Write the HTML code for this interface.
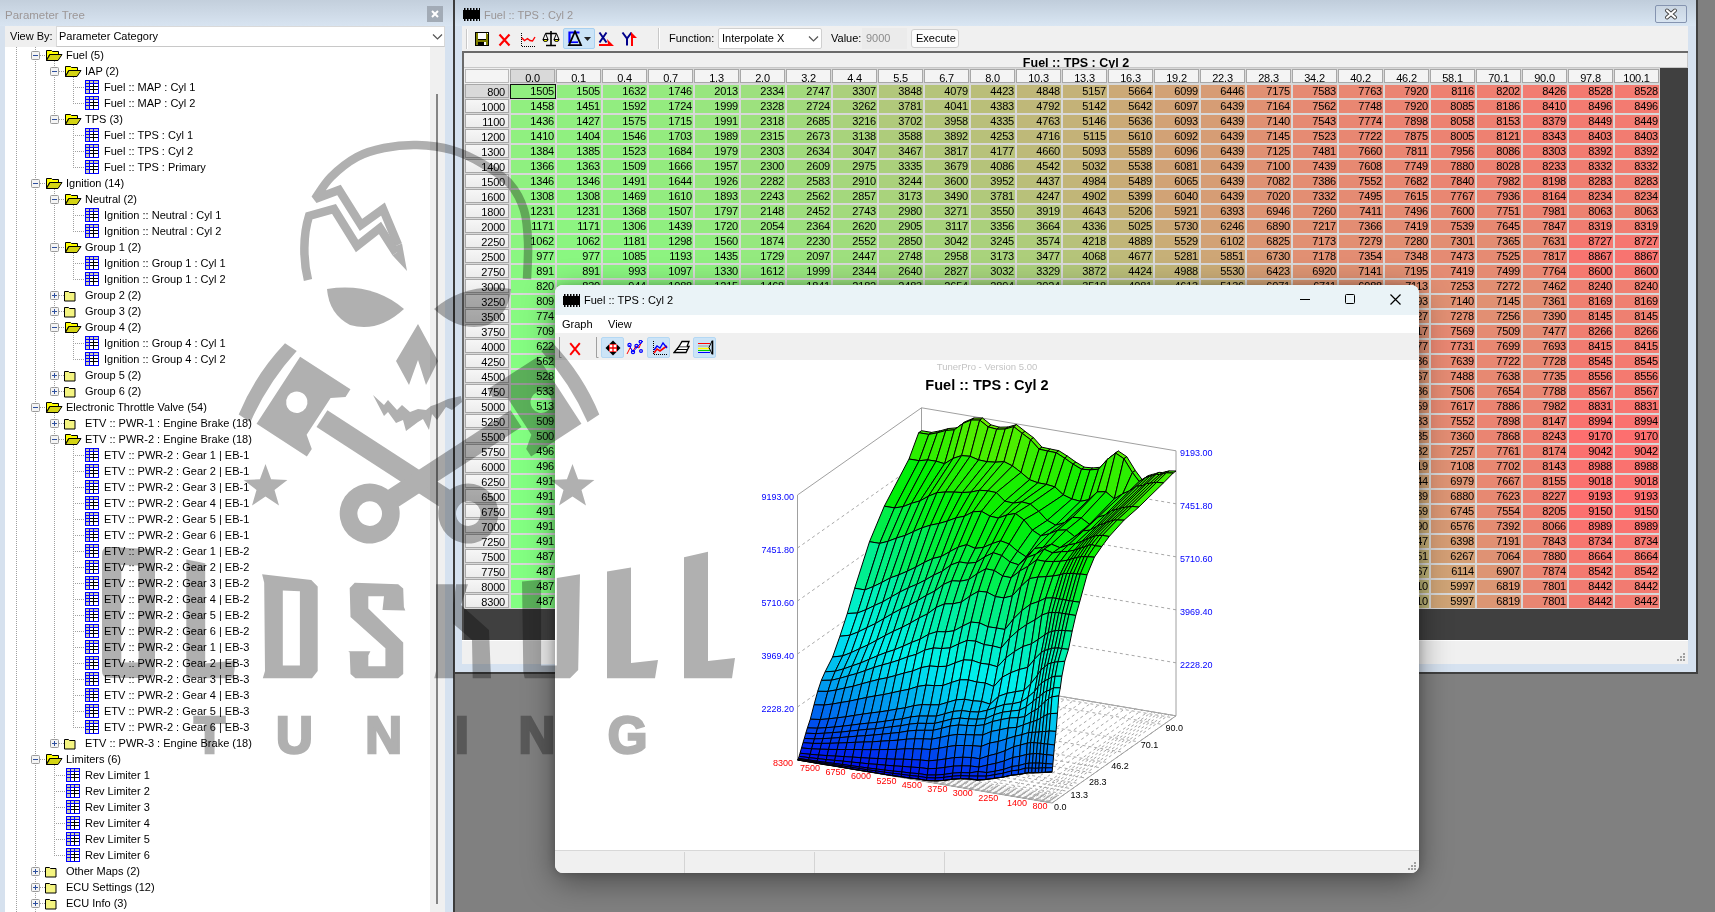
<!DOCTYPE html><html><head><meta charset="utf-8"><style>*{margin:0;padding:0;box-sizing:border-box}
html,body{width:1715px;height:912px;overflow:hidden;background:#808080;font-family:"Liberation Sans",sans-serif;font-size:11px;color:#000}
.a{position:absolute}
.t{position:absolute;white-space:pre}
.cell{position:absolute;height:13px;line-height:13px;text-align:right;padding-right:1px;letter-spacing:-0.2px}
.hd{position:absolute;height:14px;border:1px solid #a8a8a8;background:#f4f4f4;text-align:center;line-height:17px;letter-spacing:-0.2px}
.rh{position:absolute;height:14px;border:1px solid #a8a8a8;background:linear-gradient(#f6f6f6,#ececec);text-align:right;padding-right:3px;line-height:15px;letter-spacing:-0.2px}
</style></head><body><div class="a" style="left:0;top:0;width:453px;height:912px;background:#d6e1ee"></div><div class="a" style="left:0;top:0;width:453px;height:26px;background:linear-gradient(#c3cfdc,#d8e4f1)"></div><div class="t" style="left:5px;top:8.5px;font-size:11.5px;color:#9d9797">Parameter Tree</div><div class="a" style="left:427px;top:6px;width:16px;height:16px;background:#a2abb6"></div><svg class="a" style="left:427px;top:6px" width="16" height="16"><path d="M5 5L11 11M11 5L5 11" stroke="#fff" stroke-width="2"/></svg><div class="a" style="left:5px;top:26px;width:440px;height:886px;background:#fff"></div><div class="a" style="left:5px;top:26px;width:52px;height:21px;background:#efefef"></div><div class="t" style="left:10px;top:30px;font-size:11px">View By:</div><div class="a" style="left:56px;top:26px;width:389px;height:21px;background:#fff;border:1px solid #d9d9d9;border-bottom-color:#c8c8c8"></div><div class="t" style="left:59px;top:30px;font-size:11px">Parameter Category</div><svg class="a" style="left:432px;top:33px" width="12" height="8"><path d="M1 1.5L5.5 6L10 1.5" stroke="#555" fill="none" stroke-width="1.2"/></svg><div class="a" style="left:430px;top:47px;width:15px;height:865px;background:#f0f0f0"></div><div class="a" style="left:436px;top:94px;width:2px;height:810px;background:#858585"></div><div class="a" style="left:445px;top:26px;width:8px;height:886px;background:#d6e2f0"></div><div class="a" style="left:453px;top:0px;width:2px;height:912px;background:#3c3c3c"></div><div class="a" style="left:16px;top:47px;width:1px;height:865px;background:repeating-linear-gradient(#a0a0a0 0 1px,transparent 1px 2px)"></div><div class="a" style="left:35px;top:47px;width:1px;height:865px;background:repeating-linear-gradient(#a0a0a0 0 1px,transparent 1px 2px)"></div><div class="a" style="left:54px;top:61px;width:1px;height:59px;background:repeating-linear-gradient(#a0a0a0 0 1px,transparent 1px 2px)"></div><div class="a" style="left:73px;top:77px;width:1px;height:27px;background:repeating-linear-gradient(#a0a0a0 0 1px,transparent 1px 2px)"></div><div class="a" style="left:73px;top:125px;width:1px;height:43px;background:repeating-linear-gradient(#a0a0a0 0 1px,transparent 1px 2px)"></div><div class="a" style="left:54px;top:189px;width:1px;height:203px;background:repeating-linear-gradient(#a0a0a0 0 1px,transparent 1px 2px)"></div><div class="a" style="left:73px;top:205px;width:1px;height:27px;background:repeating-linear-gradient(#a0a0a0 0 1px,transparent 1px 2px)"></div><div class="a" style="left:73px;top:253px;width:1px;height:27px;background:repeating-linear-gradient(#a0a0a0 0 1px,transparent 1px 2px)"></div><div class="a" style="left:73px;top:333px;width:1px;height:27px;background:repeating-linear-gradient(#a0a0a0 0 1px,transparent 1px 2px)"></div><div class="a" style="left:54px;top:413px;width:1px;height:331px;background:repeating-linear-gradient(#a0a0a0 0 1px,transparent 1px 2px)"></div><div class="a" style="left:73px;top:445px;width:1px;height:283px;background:repeating-linear-gradient(#a0a0a0 0 1px,transparent 1px 2px)"></div><div class="a" style="left:54px;top:765px;width:1px;height:91px;background:repeating-linear-gradient(#a0a0a0 0 1px,transparent 1px 2px)"></div><div class="a" style="left:40px;top:55px;width:6px;height:1px;background:repeating-linear-gradient(90deg,#a0a0a0 0 1px,transparent 1px 2px)"></div><svg class="a" style="left:31px;top:51px" width="9" height="9"><defs></defs><rect x="0.5" y="0.5" width="8" height="8" rx="1" fill="#f4f4f4" stroke="#9a9a9a"/><path d="M2 4.5h5" stroke="#2d4f9e"/></svg><svg class="a" style="left:46px;top:49px" width="17" height="12"><path d="M0.5 1.5h5l1 1h6v3h-9l-3 6z" fill="#ffff00" stroke="#000"/><path d="M0.5 11.5l3.5-6h12l-4 6z" fill="#d4d414" stroke="#000"/></svg><div class="t" style="left:66px;top:49px">Fuel (5)</div><div class="a" style="left:59px;top:71px;width:6px;height:1px;background:repeating-linear-gradient(90deg,#a0a0a0 0 1px,transparent 1px 2px)"></div><svg class="a" style="left:50px;top:67px" width="9" height="9"><defs></defs><rect x="0.5" y="0.5" width="8" height="8" rx="1" fill="#f4f4f4" stroke="#9a9a9a"/><path d="M2 4.5h5" stroke="#2d4f9e"/></svg><svg class="a" style="left:65px;top:65px" width="17" height="12"><path d="M0.5 1.5h5l1 1h6v3h-9l-3 6z" fill="#ffff00" stroke="#000"/><path d="M0.5 11.5l3.5-6h12l-4 6z" fill="#d4d414" stroke="#000"/></svg><div class="t" style="left:85px;top:65px">IAP (2)</div><div class="a" style="left:73px;top:87px;width:12px;height:1px;background:repeating-linear-gradient(90deg,#a0a0a0 0 1px,transparent 1px 2px)"></div><svg class="a" style="left:85px;top:80px" width="14" height="14" shape-rendering="crispEdges"><rect width="14" height="14" fill="#0000ff"/><g fill="#cdcdb4"><rect x="1" y="1" width="3" height="2"/><rect x="5" y="1" width="3" height="2"/><rect x="9" y="1" width="4" height="2"/><rect x="1" y="4" width="3" height="2"/><rect x="1" y="7" width="3" height="2"/><rect x="1" y="10" width="3" height="3"/></g><rect x="5" y="4" width="8" height="9" fill="#fff"/><g fill="#000"><rect x="8" y="4" width="1" height="9"/><rect x="5" y="6" width="8" height="1"/><rect x="5" y="9" width="8" height="1"/></g></svg><div class="t" style="left:104px;top:81px">Fuel :: MAP : Cyl 1</div><div class="a" style="left:73px;top:103px;width:12px;height:1px;background:repeating-linear-gradient(90deg,#a0a0a0 0 1px,transparent 1px 2px)"></div><svg class="a" style="left:85px;top:96px" width="14" height="14" shape-rendering="crispEdges"><rect width="14" height="14" fill="#0000ff"/><g fill="#cdcdb4"><rect x="1" y="1" width="3" height="2"/><rect x="5" y="1" width="3" height="2"/><rect x="9" y="1" width="4" height="2"/><rect x="1" y="4" width="3" height="2"/><rect x="1" y="7" width="3" height="2"/><rect x="1" y="10" width="3" height="3"/></g><rect x="5" y="4" width="8" height="9" fill="#fff"/><g fill="#000"><rect x="8" y="4" width="1" height="9"/><rect x="5" y="6" width="8" height="1"/><rect x="5" y="9" width="8" height="1"/></g></svg><div class="t" style="left:104px;top:97px">Fuel :: MAP : Cyl 2</div><div class="a" style="left:59px;top:119px;width:6px;height:1px;background:repeating-linear-gradient(90deg,#a0a0a0 0 1px,transparent 1px 2px)"></div><svg class="a" style="left:50px;top:115px" width="9" height="9"><defs></defs><rect x="0.5" y="0.5" width="8" height="8" rx="1" fill="#f4f4f4" stroke="#9a9a9a"/><path d="M2 4.5h5" stroke="#2d4f9e"/></svg><svg class="a" style="left:65px;top:113px" width="17" height="12"><path d="M0.5 1.5h5l1 1h6v3h-9l-3 6z" fill="#ffff00" stroke="#000"/><path d="M0.5 11.5l3.5-6h12l-4 6z" fill="#d4d414" stroke="#000"/></svg><div class="t" style="left:85px;top:113px">TPS (3)</div><div class="a" style="left:73px;top:135px;width:12px;height:1px;background:repeating-linear-gradient(90deg,#a0a0a0 0 1px,transparent 1px 2px)"></div><svg class="a" style="left:85px;top:128px" width="14" height="14" shape-rendering="crispEdges"><rect width="14" height="14" fill="#0000ff"/><g fill="#cdcdb4"><rect x="1" y="1" width="3" height="2"/><rect x="5" y="1" width="3" height="2"/><rect x="9" y="1" width="4" height="2"/><rect x="1" y="4" width="3" height="2"/><rect x="1" y="7" width="3" height="2"/><rect x="1" y="10" width="3" height="3"/></g><rect x="5" y="4" width="8" height="9" fill="#fff"/><g fill="#000"><rect x="8" y="4" width="1" height="9"/><rect x="5" y="6" width="8" height="1"/><rect x="5" y="9" width="8" height="1"/></g></svg><div class="t" style="left:104px;top:129px">Fuel :: TPS : Cyl 1</div><div class="a" style="left:73px;top:151px;width:12px;height:1px;background:repeating-linear-gradient(90deg,#a0a0a0 0 1px,transparent 1px 2px)"></div><svg class="a" style="left:85px;top:144px" width="14" height="14" shape-rendering="crispEdges"><rect width="14" height="14" fill="#0000ff"/><g fill="#cdcdb4"><rect x="1" y="1" width="3" height="2"/><rect x="5" y="1" width="3" height="2"/><rect x="9" y="1" width="4" height="2"/><rect x="1" y="4" width="3" height="2"/><rect x="1" y="7" width="3" height="2"/><rect x="1" y="10" width="3" height="3"/></g><rect x="5" y="4" width="8" height="9" fill="#fff"/><g fill="#000"><rect x="8" y="4" width="1" height="9"/><rect x="5" y="6" width="8" height="1"/><rect x="5" y="9" width="8" height="1"/></g></svg><div class="t" style="left:104px;top:145px">Fuel :: TPS : Cyl 2</div><div class="a" style="left:73px;top:167px;width:12px;height:1px;background:repeating-linear-gradient(90deg,#a0a0a0 0 1px,transparent 1px 2px)"></div><svg class="a" style="left:85px;top:160px" width="14" height="14" shape-rendering="crispEdges"><rect width="14" height="14" fill="#0000ff"/><g fill="#cdcdb4"><rect x="1" y="1" width="3" height="2"/><rect x="5" y="1" width="3" height="2"/><rect x="9" y="1" width="4" height="2"/><rect x="1" y="4" width="3" height="2"/><rect x="1" y="7" width="3" height="2"/><rect x="1" y="10" width="3" height="3"/></g><rect x="5" y="4" width="8" height="9" fill="#fff"/><g fill="#000"><rect x="8" y="4" width="1" height="9"/><rect x="5" y="6" width="8" height="1"/><rect x="5" y="9" width="8" height="1"/></g></svg><div class="t" style="left:104px;top:161px">Fuel :: TPS : Primary</div><div class="a" style="left:40px;top:183px;width:6px;height:1px;background:repeating-linear-gradient(90deg,#a0a0a0 0 1px,transparent 1px 2px)"></div><svg class="a" style="left:31px;top:179px" width="9" height="9"><defs></defs><rect x="0.5" y="0.5" width="8" height="8" rx="1" fill="#f4f4f4" stroke="#9a9a9a"/><path d="M2 4.5h5" stroke="#2d4f9e"/></svg><svg class="a" style="left:46px;top:177px" width="17" height="12"><path d="M0.5 1.5h5l1 1h6v3h-9l-3 6z" fill="#ffff00" stroke="#000"/><path d="M0.5 11.5l3.5-6h12l-4 6z" fill="#d4d414" stroke="#000"/></svg><div class="t" style="left:66px;top:177px">Ignition (14)</div><div class="a" style="left:59px;top:199px;width:6px;height:1px;background:repeating-linear-gradient(90deg,#a0a0a0 0 1px,transparent 1px 2px)"></div><svg class="a" style="left:50px;top:195px" width="9" height="9"><defs></defs><rect x="0.5" y="0.5" width="8" height="8" rx="1" fill="#f4f4f4" stroke="#9a9a9a"/><path d="M2 4.5h5" stroke="#2d4f9e"/></svg><svg class="a" style="left:65px;top:193px" width="17" height="12"><path d="M0.5 1.5h5l1 1h6v3h-9l-3 6z" fill="#ffff00" stroke="#000"/><path d="M0.5 11.5l3.5-6h12l-4 6z" fill="#d4d414" stroke="#000"/></svg><div class="t" style="left:85px;top:193px">Neutral (2)</div><div class="a" style="left:73px;top:215px;width:12px;height:1px;background:repeating-linear-gradient(90deg,#a0a0a0 0 1px,transparent 1px 2px)"></div><svg class="a" style="left:85px;top:208px" width="14" height="14" shape-rendering="crispEdges"><rect width="14" height="14" fill="#0000ff"/><g fill="#cdcdb4"><rect x="1" y="1" width="3" height="2"/><rect x="5" y="1" width="3" height="2"/><rect x="9" y="1" width="4" height="2"/><rect x="1" y="4" width="3" height="2"/><rect x="1" y="7" width="3" height="2"/><rect x="1" y="10" width="3" height="3"/></g><rect x="5" y="4" width="8" height="9" fill="#fff"/><g fill="#000"><rect x="8" y="4" width="1" height="9"/><rect x="5" y="6" width="8" height="1"/><rect x="5" y="9" width="8" height="1"/></g></svg><div class="t" style="left:104px;top:209px">Ignition :: Neutral : Cyl 1</div><div class="a" style="left:73px;top:231px;width:12px;height:1px;background:repeating-linear-gradient(90deg,#a0a0a0 0 1px,transparent 1px 2px)"></div><svg class="a" style="left:85px;top:224px" width="14" height="14" shape-rendering="crispEdges"><rect width="14" height="14" fill="#0000ff"/><g fill="#cdcdb4"><rect x="1" y="1" width="3" height="2"/><rect x="5" y="1" width="3" height="2"/><rect x="9" y="1" width="4" height="2"/><rect x="1" y="4" width="3" height="2"/><rect x="1" y="7" width="3" height="2"/><rect x="1" y="10" width="3" height="3"/></g><rect x="5" y="4" width="8" height="9" fill="#fff"/><g fill="#000"><rect x="8" y="4" width="1" height="9"/><rect x="5" y="6" width="8" height="1"/><rect x="5" y="9" width="8" height="1"/></g></svg><div class="t" style="left:104px;top:225px">Ignition :: Neutral : Cyl 2</div><div class="a" style="left:59px;top:247px;width:6px;height:1px;background:repeating-linear-gradient(90deg,#a0a0a0 0 1px,transparent 1px 2px)"></div><svg class="a" style="left:50px;top:243px" width="9" height="9"><defs></defs><rect x="0.5" y="0.5" width="8" height="8" rx="1" fill="#f4f4f4" stroke="#9a9a9a"/><path d="M2 4.5h5" stroke="#2d4f9e"/></svg><svg class="a" style="left:65px;top:241px" width="17" height="12"><path d="M0.5 1.5h5l1 1h6v3h-9l-3 6z" fill="#ffff00" stroke="#000"/><path d="M0.5 11.5l3.5-6h12l-4 6z" fill="#d4d414" stroke="#000"/></svg><div class="t" style="left:85px;top:241px">Group 1 (2)</div><div class="a" style="left:73px;top:263px;width:12px;height:1px;background:repeating-linear-gradient(90deg,#a0a0a0 0 1px,transparent 1px 2px)"></div><svg class="a" style="left:85px;top:256px" width="14" height="14" shape-rendering="crispEdges"><rect width="14" height="14" fill="#0000ff"/><g fill="#cdcdb4"><rect x="1" y="1" width="3" height="2"/><rect x="5" y="1" width="3" height="2"/><rect x="9" y="1" width="4" height="2"/><rect x="1" y="4" width="3" height="2"/><rect x="1" y="7" width="3" height="2"/><rect x="1" y="10" width="3" height="3"/></g><rect x="5" y="4" width="8" height="9" fill="#fff"/><g fill="#000"><rect x="8" y="4" width="1" height="9"/><rect x="5" y="6" width="8" height="1"/><rect x="5" y="9" width="8" height="1"/></g></svg><div class="t" style="left:104px;top:257px">Ignition :: Group 1 : Cyl 1</div><div class="a" style="left:73px;top:279px;width:12px;height:1px;background:repeating-linear-gradient(90deg,#a0a0a0 0 1px,transparent 1px 2px)"></div><svg class="a" style="left:85px;top:272px" width="14" height="14" shape-rendering="crispEdges"><rect width="14" height="14" fill="#0000ff"/><g fill="#cdcdb4"><rect x="1" y="1" width="3" height="2"/><rect x="5" y="1" width="3" height="2"/><rect x="9" y="1" width="4" height="2"/><rect x="1" y="4" width="3" height="2"/><rect x="1" y="7" width="3" height="2"/><rect x="1" y="10" width="3" height="3"/></g><rect x="5" y="4" width="8" height="9" fill="#fff"/><g fill="#000"><rect x="8" y="4" width="1" height="9"/><rect x="5" y="6" width="8" height="1"/><rect x="5" y="9" width="8" height="1"/></g></svg><div class="t" style="left:104px;top:273px">Ignition :: Group 1 : Cyl 2</div><div class="a" style="left:59px;top:295px;width:6px;height:1px;background:repeating-linear-gradient(90deg,#a0a0a0 0 1px,transparent 1px 2px)"></div><svg class="a" style="left:50px;top:291px" width="9" height="9"><defs></defs><rect x="0.5" y="0.5" width="8" height="8" rx="1" fill="#f4f4f4" stroke="#9a9a9a"/><path d="M2 4.5h5M4.5 2v5" stroke="#2d4f9e"/></svg><svg class="a" style="left:64px;top:290px" width="12" height="12"><path d="M0.5 1.5h4l1 1h5.5v8.5h-10.5z" fill="#f4f480" stroke="#000"/></svg><div class="t" style="left:85px;top:289px">Group 2 (2)</div><div class="a" style="left:59px;top:311px;width:6px;height:1px;background:repeating-linear-gradient(90deg,#a0a0a0 0 1px,transparent 1px 2px)"></div><svg class="a" style="left:50px;top:307px" width="9" height="9"><defs></defs><rect x="0.5" y="0.5" width="8" height="8" rx="1" fill="#f4f4f4" stroke="#9a9a9a"/><path d="M2 4.5h5M4.5 2v5" stroke="#2d4f9e"/></svg><svg class="a" style="left:64px;top:306px" width="12" height="12"><path d="M0.5 1.5h4l1 1h5.5v8.5h-10.5z" fill="#f4f480" stroke="#000"/></svg><div class="t" style="left:85px;top:305px">Group 3 (2)</div><div class="a" style="left:59px;top:327px;width:6px;height:1px;background:repeating-linear-gradient(90deg,#a0a0a0 0 1px,transparent 1px 2px)"></div><svg class="a" style="left:50px;top:323px" width="9" height="9"><defs></defs><rect x="0.5" y="0.5" width="8" height="8" rx="1" fill="#f4f4f4" stroke="#9a9a9a"/><path d="M2 4.5h5" stroke="#2d4f9e"/></svg><svg class="a" style="left:65px;top:321px" width="17" height="12"><path d="M0.5 1.5h5l1 1h6v3h-9l-3 6z" fill="#ffff00" stroke="#000"/><path d="M0.5 11.5l3.5-6h12l-4 6z" fill="#d4d414" stroke="#000"/></svg><div class="t" style="left:85px;top:321px">Group 4 (2)</div><div class="a" style="left:73px;top:343px;width:12px;height:1px;background:repeating-linear-gradient(90deg,#a0a0a0 0 1px,transparent 1px 2px)"></div><svg class="a" style="left:85px;top:336px" width="14" height="14" shape-rendering="crispEdges"><rect width="14" height="14" fill="#0000ff"/><g fill="#cdcdb4"><rect x="1" y="1" width="3" height="2"/><rect x="5" y="1" width="3" height="2"/><rect x="9" y="1" width="4" height="2"/><rect x="1" y="4" width="3" height="2"/><rect x="1" y="7" width="3" height="2"/><rect x="1" y="10" width="3" height="3"/></g><rect x="5" y="4" width="8" height="9" fill="#fff"/><g fill="#000"><rect x="8" y="4" width="1" height="9"/><rect x="5" y="6" width="8" height="1"/><rect x="5" y="9" width="8" height="1"/></g></svg><div class="t" style="left:104px;top:337px">Ignition :: Group 4 : Cyl 1</div><div class="a" style="left:73px;top:359px;width:12px;height:1px;background:repeating-linear-gradient(90deg,#a0a0a0 0 1px,transparent 1px 2px)"></div><svg class="a" style="left:85px;top:352px" width="14" height="14" shape-rendering="crispEdges"><rect width="14" height="14" fill="#0000ff"/><g fill="#cdcdb4"><rect x="1" y="1" width="3" height="2"/><rect x="5" y="1" width="3" height="2"/><rect x="9" y="1" width="4" height="2"/><rect x="1" y="4" width="3" height="2"/><rect x="1" y="7" width="3" height="2"/><rect x="1" y="10" width="3" height="3"/></g><rect x="5" y="4" width="8" height="9" fill="#fff"/><g fill="#000"><rect x="8" y="4" width="1" height="9"/><rect x="5" y="6" width="8" height="1"/><rect x="5" y="9" width="8" height="1"/></g></svg><div class="t" style="left:104px;top:353px">Ignition :: Group 4 : Cyl 2</div><div class="a" style="left:59px;top:375px;width:6px;height:1px;background:repeating-linear-gradient(90deg,#a0a0a0 0 1px,transparent 1px 2px)"></div><svg class="a" style="left:50px;top:371px" width="9" height="9"><defs></defs><rect x="0.5" y="0.5" width="8" height="8" rx="1" fill="#f4f4f4" stroke="#9a9a9a"/><path d="M2 4.5h5M4.5 2v5" stroke="#2d4f9e"/></svg><svg class="a" style="left:64px;top:370px" width="12" height="12"><path d="M0.5 1.5h4l1 1h5.5v8.5h-10.5z" fill="#f4f480" stroke="#000"/></svg><div class="t" style="left:85px;top:369px">Group 5 (2)</div><div class="a" style="left:59px;top:391px;width:6px;height:1px;background:repeating-linear-gradient(90deg,#a0a0a0 0 1px,transparent 1px 2px)"></div><svg class="a" style="left:50px;top:387px" width="9" height="9"><defs></defs><rect x="0.5" y="0.5" width="8" height="8" rx="1" fill="#f4f4f4" stroke="#9a9a9a"/><path d="M2 4.5h5M4.5 2v5" stroke="#2d4f9e"/></svg><svg class="a" style="left:64px;top:386px" width="12" height="12"><path d="M0.5 1.5h4l1 1h5.5v8.5h-10.5z" fill="#f4f480" stroke="#000"/></svg><div class="t" style="left:85px;top:385px">Group 6 (2)</div><div class="a" style="left:40px;top:407px;width:6px;height:1px;background:repeating-linear-gradient(90deg,#a0a0a0 0 1px,transparent 1px 2px)"></div><svg class="a" style="left:31px;top:403px" width="9" height="9"><defs></defs><rect x="0.5" y="0.5" width="8" height="8" rx="1" fill="#f4f4f4" stroke="#9a9a9a"/><path d="M2 4.5h5" stroke="#2d4f9e"/></svg><svg class="a" style="left:46px;top:401px" width="17" height="12"><path d="M0.5 1.5h5l1 1h6v3h-9l-3 6z" fill="#ffff00" stroke="#000"/><path d="M0.5 11.5l3.5-6h12l-4 6z" fill="#d4d414" stroke="#000"/></svg><div class="t" style="left:66px;top:401px">Electronic Throttle Valve (54)</div><div class="a" style="left:59px;top:423px;width:6px;height:1px;background:repeating-linear-gradient(90deg,#a0a0a0 0 1px,transparent 1px 2px)"></div><svg class="a" style="left:50px;top:419px" width="9" height="9"><defs></defs><rect x="0.5" y="0.5" width="8" height="8" rx="1" fill="#f4f4f4" stroke="#9a9a9a"/><path d="M2 4.5h5M4.5 2v5" stroke="#2d4f9e"/></svg><svg class="a" style="left:64px;top:418px" width="12" height="12"><path d="M0.5 1.5h4l1 1h5.5v8.5h-10.5z" fill="#f4f480" stroke="#000"/></svg><div class="t" style="left:85px;top:417px">ETV :: PWR-1 : Engine Brake (18)</div><div class="a" style="left:59px;top:439px;width:6px;height:1px;background:repeating-linear-gradient(90deg,#a0a0a0 0 1px,transparent 1px 2px)"></div><svg class="a" style="left:50px;top:435px" width="9" height="9"><defs></defs><rect x="0.5" y="0.5" width="8" height="8" rx="1" fill="#f4f4f4" stroke="#9a9a9a"/><path d="M2 4.5h5" stroke="#2d4f9e"/></svg><svg class="a" style="left:65px;top:433px" width="17" height="12"><path d="M0.5 1.5h5l1 1h6v3h-9l-3 6z" fill="#ffff00" stroke="#000"/><path d="M0.5 11.5l3.5-6h12l-4 6z" fill="#d4d414" stroke="#000"/></svg><div class="t" style="left:85px;top:433px">ETV :: PWR-2 : Engine Brake (18)</div><div class="a" style="left:73px;top:455px;width:12px;height:1px;background:repeating-linear-gradient(90deg,#a0a0a0 0 1px,transparent 1px 2px)"></div><svg class="a" style="left:85px;top:448px" width="14" height="14" shape-rendering="crispEdges"><rect width="14" height="14" fill="#0000ff"/><g fill="#cdcdb4"><rect x="1" y="1" width="3" height="2"/><rect x="5" y="1" width="3" height="2"/><rect x="9" y="1" width="4" height="2"/><rect x="1" y="4" width="3" height="2"/><rect x="1" y="7" width="3" height="2"/><rect x="1" y="10" width="3" height="3"/></g><rect x="5" y="4" width="8" height="9" fill="#fff"/><g fill="#000"><rect x="8" y="4" width="1" height="9"/><rect x="5" y="6" width="8" height="1"/><rect x="5" y="9" width="8" height="1"/></g></svg><div class="t" style="left:104px;top:449px">ETV :: PWR-2 : Gear 1 | EB-1</div><div class="a" style="left:73px;top:471px;width:12px;height:1px;background:repeating-linear-gradient(90deg,#a0a0a0 0 1px,transparent 1px 2px)"></div><svg class="a" style="left:85px;top:464px" width="14" height="14" shape-rendering="crispEdges"><rect width="14" height="14" fill="#0000ff"/><g fill="#cdcdb4"><rect x="1" y="1" width="3" height="2"/><rect x="5" y="1" width="3" height="2"/><rect x="9" y="1" width="4" height="2"/><rect x="1" y="4" width="3" height="2"/><rect x="1" y="7" width="3" height="2"/><rect x="1" y="10" width="3" height="3"/></g><rect x="5" y="4" width="8" height="9" fill="#fff"/><g fill="#000"><rect x="8" y="4" width="1" height="9"/><rect x="5" y="6" width="8" height="1"/><rect x="5" y="9" width="8" height="1"/></g></svg><div class="t" style="left:104px;top:465px">ETV :: PWR-2 : Gear 2 | EB-1</div><div class="a" style="left:73px;top:487px;width:12px;height:1px;background:repeating-linear-gradient(90deg,#a0a0a0 0 1px,transparent 1px 2px)"></div><svg class="a" style="left:85px;top:480px" width="14" height="14" shape-rendering="crispEdges"><rect width="14" height="14" fill="#0000ff"/><g fill="#cdcdb4"><rect x="1" y="1" width="3" height="2"/><rect x="5" y="1" width="3" height="2"/><rect x="9" y="1" width="4" height="2"/><rect x="1" y="4" width="3" height="2"/><rect x="1" y="7" width="3" height="2"/><rect x="1" y="10" width="3" height="3"/></g><rect x="5" y="4" width="8" height="9" fill="#fff"/><g fill="#000"><rect x="8" y="4" width="1" height="9"/><rect x="5" y="6" width="8" height="1"/><rect x="5" y="9" width="8" height="1"/></g></svg><div class="t" style="left:104px;top:481px">ETV :: PWR-2 : Gear 3 | EB-1</div><div class="a" style="left:73px;top:503px;width:12px;height:1px;background:repeating-linear-gradient(90deg,#a0a0a0 0 1px,transparent 1px 2px)"></div><svg class="a" style="left:85px;top:496px" width="14" height="14" shape-rendering="crispEdges"><rect width="14" height="14" fill="#0000ff"/><g fill="#cdcdb4"><rect x="1" y="1" width="3" height="2"/><rect x="5" y="1" width="3" height="2"/><rect x="9" y="1" width="4" height="2"/><rect x="1" y="4" width="3" height="2"/><rect x="1" y="7" width="3" height="2"/><rect x="1" y="10" width="3" height="3"/></g><rect x="5" y="4" width="8" height="9" fill="#fff"/><g fill="#000"><rect x="8" y="4" width="1" height="9"/><rect x="5" y="6" width="8" height="1"/><rect x="5" y="9" width="8" height="1"/></g></svg><div class="t" style="left:104px;top:497px">ETV :: PWR-2 : Gear 4 | EB-1</div><div class="a" style="left:73px;top:519px;width:12px;height:1px;background:repeating-linear-gradient(90deg,#a0a0a0 0 1px,transparent 1px 2px)"></div><svg class="a" style="left:85px;top:512px" width="14" height="14" shape-rendering="crispEdges"><rect width="14" height="14" fill="#0000ff"/><g fill="#cdcdb4"><rect x="1" y="1" width="3" height="2"/><rect x="5" y="1" width="3" height="2"/><rect x="9" y="1" width="4" height="2"/><rect x="1" y="4" width="3" height="2"/><rect x="1" y="7" width="3" height="2"/><rect x="1" y="10" width="3" height="3"/></g><rect x="5" y="4" width="8" height="9" fill="#fff"/><g fill="#000"><rect x="8" y="4" width="1" height="9"/><rect x="5" y="6" width="8" height="1"/><rect x="5" y="9" width="8" height="1"/></g></svg><div class="t" style="left:104px;top:513px">ETV :: PWR-2 : Gear 5 | EB-1</div><div class="a" style="left:73px;top:535px;width:12px;height:1px;background:repeating-linear-gradient(90deg,#a0a0a0 0 1px,transparent 1px 2px)"></div><svg class="a" style="left:85px;top:528px" width="14" height="14" shape-rendering="crispEdges"><rect width="14" height="14" fill="#0000ff"/><g fill="#cdcdb4"><rect x="1" y="1" width="3" height="2"/><rect x="5" y="1" width="3" height="2"/><rect x="9" y="1" width="4" height="2"/><rect x="1" y="4" width="3" height="2"/><rect x="1" y="7" width="3" height="2"/><rect x="1" y="10" width="3" height="3"/></g><rect x="5" y="4" width="8" height="9" fill="#fff"/><g fill="#000"><rect x="8" y="4" width="1" height="9"/><rect x="5" y="6" width="8" height="1"/><rect x="5" y="9" width="8" height="1"/></g></svg><div class="t" style="left:104px;top:529px">ETV :: PWR-2 : Gear 6 | EB-1</div><div class="a" style="left:73px;top:551px;width:12px;height:1px;background:repeating-linear-gradient(90deg,#a0a0a0 0 1px,transparent 1px 2px)"></div><svg class="a" style="left:85px;top:544px" width="14" height="14" shape-rendering="crispEdges"><rect width="14" height="14" fill="#0000ff"/><g fill="#cdcdb4"><rect x="1" y="1" width="3" height="2"/><rect x="5" y="1" width="3" height="2"/><rect x="9" y="1" width="4" height="2"/><rect x="1" y="4" width="3" height="2"/><rect x="1" y="7" width="3" height="2"/><rect x="1" y="10" width="3" height="3"/></g><rect x="5" y="4" width="8" height="9" fill="#fff"/><g fill="#000"><rect x="8" y="4" width="1" height="9"/><rect x="5" y="6" width="8" height="1"/><rect x="5" y="9" width="8" height="1"/></g></svg><div class="t" style="left:104px;top:545px">ETV :: PWR-2 : Gear 1 | EB-2</div><div class="a" style="left:73px;top:567px;width:12px;height:1px;background:repeating-linear-gradient(90deg,#a0a0a0 0 1px,transparent 1px 2px)"></div><svg class="a" style="left:85px;top:560px" width="14" height="14" shape-rendering="crispEdges"><rect width="14" height="14" fill="#0000ff"/><g fill="#cdcdb4"><rect x="1" y="1" width="3" height="2"/><rect x="5" y="1" width="3" height="2"/><rect x="9" y="1" width="4" height="2"/><rect x="1" y="4" width="3" height="2"/><rect x="1" y="7" width="3" height="2"/><rect x="1" y="10" width="3" height="3"/></g><rect x="5" y="4" width="8" height="9" fill="#fff"/><g fill="#000"><rect x="8" y="4" width="1" height="9"/><rect x="5" y="6" width="8" height="1"/><rect x="5" y="9" width="8" height="1"/></g></svg><div class="t" style="left:104px;top:561px">ETV :: PWR-2 : Gear 2 | EB-2</div><div class="a" style="left:73px;top:583px;width:12px;height:1px;background:repeating-linear-gradient(90deg,#a0a0a0 0 1px,transparent 1px 2px)"></div><svg class="a" style="left:85px;top:576px" width="14" height="14" shape-rendering="crispEdges"><rect width="14" height="14" fill="#0000ff"/><g fill="#cdcdb4"><rect x="1" y="1" width="3" height="2"/><rect x="5" y="1" width="3" height="2"/><rect x="9" y="1" width="4" height="2"/><rect x="1" y="4" width="3" height="2"/><rect x="1" y="7" width="3" height="2"/><rect x="1" y="10" width="3" height="3"/></g><rect x="5" y="4" width="8" height="9" fill="#fff"/><g fill="#000"><rect x="8" y="4" width="1" height="9"/><rect x="5" y="6" width="8" height="1"/><rect x="5" y="9" width="8" height="1"/></g></svg><div class="t" style="left:104px;top:577px">ETV :: PWR-2 : Gear 3 | EB-2</div><div class="a" style="left:73px;top:599px;width:12px;height:1px;background:repeating-linear-gradient(90deg,#a0a0a0 0 1px,transparent 1px 2px)"></div><svg class="a" style="left:85px;top:592px" width="14" height="14" shape-rendering="crispEdges"><rect width="14" height="14" fill="#0000ff"/><g fill="#cdcdb4"><rect x="1" y="1" width="3" height="2"/><rect x="5" y="1" width="3" height="2"/><rect x="9" y="1" width="4" height="2"/><rect x="1" y="4" width="3" height="2"/><rect x="1" y="7" width="3" height="2"/><rect x="1" y="10" width="3" height="3"/></g><rect x="5" y="4" width="8" height="9" fill="#fff"/><g fill="#000"><rect x="8" y="4" width="1" height="9"/><rect x="5" y="6" width="8" height="1"/><rect x="5" y="9" width="8" height="1"/></g></svg><div class="t" style="left:104px;top:593px">ETV :: PWR-2 : Gear 4 | EB-2</div><div class="a" style="left:73px;top:615px;width:12px;height:1px;background:repeating-linear-gradient(90deg,#a0a0a0 0 1px,transparent 1px 2px)"></div><svg class="a" style="left:85px;top:608px" width="14" height="14" shape-rendering="crispEdges"><rect width="14" height="14" fill="#0000ff"/><g fill="#cdcdb4"><rect x="1" y="1" width="3" height="2"/><rect x="5" y="1" width="3" height="2"/><rect x="9" y="1" width="4" height="2"/><rect x="1" y="4" width="3" height="2"/><rect x="1" y="7" width="3" height="2"/><rect x="1" y="10" width="3" height="3"/></g><rect x="5" y="4" width="8" height="9" fill="#fff"/><g fill="#000"><rect x="8" y="4" width="1" height="9"/><rect x="5" y="6" width="8" height="1"/><rect x="5" y="9" width="8" height="1"/></g></svg><div class="t" style="left:104px;top:609px">ETV :: PWR-2 : Gear 5 | EB-2</div><div class="a" style="left:73px;top:631px;width:12px;height:1px;background:repeating-linear-gradient(90deg,#a0a0a0 0 1px,transparent 1px 2px)"></div><svg class="a" style="left:85px;top:624px" width="14" height="14" shape-rendering="crispEdges"><rect width="14" height="14" fill="#0000ff"/><g fill="#cdcdb4"><rect x="1" y="1" width="3" height="2"/><rect x="5" y="1" width="3" height="2"/><rect x="9" y="1" width="4" height="2"/><rect x="1" y="4" width="3" height="2"/><rect x="1" y="7" width="3" height="2"/><rect x="1" y="10" width="3" height="3"/></g><rect x="5" y="4" width="8" height="9" fill="#fff"/><g fill="#000"><rect x="8" y="4" width="1" height="9"/><rect x="5" y="6" width="8" height="1"/><rect x="5" y="9" width="8" height="1"/></g></svg><div class="t" style="left:104px;top:625px">ETV :: PWR-2 : Gear 6 | EB-2</div><div class="a" style="left:73px;top:647px;width:12px;height:1px;background:repeating-linear-gradient(90deg,#a0a0a0 0 1px,transparent 1px 2px)"></div><svg class="a" style="left:85px;top:640px" width="14" height="14" shape-rendering="crispEdges"><rect width="14" height="14" fill="#0000ff"/><g fill="#cdcdb4"><rect x="1" y="1" width="3" height="2"/><rect x="5" y="1" width="3" height="2"/><rect x="9" y="1" width="4" height="2"/><rect x="1" y="4" width="3" height="2"/><rect x="1" y="7" width="3" height="2"/><rect x="1" y="10" width="3" height="3"/></g><rect x="5" y="4" width="8" height="9" fill="#fff"/><g fill="#000"><rect x="8" y="4" width="1" height="9"/><rect x="5" y="6" width="8" height="1"/><rect x="5" y="9" width="8" height="1"/></g></svg><div class="t" style="left:104px;top:641px">ETV :: PWR-2 : Gear 1 | EB-3</div><div class="a" style="left:73px;top:663px;width:12px;height:1px;background:repeating-linear-gradient(90deg,#a0a0a0 0 1px,transparent 1px 2px)"></div><svg class="a" style="left:85px;top:656px" width="14" height="14" shape-rendering="crispEdges"><rect width="14" height="14" fill="#0000ff"/><g fill="#cdcdb4"><rect x="1" y="1" width="3" height="2"/><rect x="5" y="1" width="3" height="2"/><rect x="9" y="1" width="4" height="2"/><rect x="1" y="4" width="3" height="2"/><rect x="1" y="7" width="3" height="2"/><rect x="1" y="10" width="3" height="3"/></g><rect x="5" y="4" width="8" height="9" fill="#fff"/><g fill="#000"><rect x="8" y="4" width="1" height="9"/><rect x="5" y="6" width="8" height="1"/><rect x="5" y="9" width="8" height="1"/></g></svg><div class="t" style="left:104px;top:657px">ETV :: PWR-2 : Gear 2 | EB-3</div><div class="a" style="left:73px;top:679px;width:12px;height:1px;background:repeating-linear-gradient(90deg,#a0a0a0 0 1px,transparent 1px 2px)"></div><svg class="a" style="left:85px;top:672px" width="14" height="14" shape-rendering="crispEdges"><rect width="14" height="14" fill="#0000ff"/><g fill="#cdcdb4"><rect x="1" y="1" width="3" height="2"/><rect x="5" y="1" width="3" height="2"/><rect x="9" y="1" width="4" height="2"/><rect x="1" y="4" width="3" height="2"/><rect x="1" y="7" width="3" height="2"/><rect x="1" y="10" width="3" height="3"/></g><rect x="5" y="4" width="8" height="9" fill="#fff"/><g fill="#000"><rect x="8" y="4" width="1" height="9"/><rect x="5" y="6" width="8" height="1"/><rect x="5" y="9" width="8" height="1"/></g></svg><div class="t" style="left:104px;top:673px">ETV :: PWR-2 : Gear 3 | EB-3</div><div class="a" style="left:73px;top:695px;width:12px;height:1px;background:repeating-linear-gradient(90deg,#a0a0a0 0 1px,transparent 1px 2px)"></div><svg class="a" style="left:85px;top:688px" width="14" height="14" shape-rendering="crispEdges"><rect width="14" height="14" fill="#0000ff"/><g fill="#cdcdb4"><rect x="1" y="1" width="3" height="2"/><rect x="5" y="1" width="3" height="2"/><rect x="9" y="1" width="4" height="2"/><rect x="1" y="4" width="3" height="2"/><rect x="1" y="7" width="3" height="2"/><rect x="1" y="10" width="3" height="3"/></g><rect x="5" y="4" width="8" height="9" fill="#fff"/><g fill="#000"><rect x="8" y="4" width="1" height="9"/><rect x="5" y="6" width="8" height="1"/><rect x="5" y="9" width="8" height="1"/></g></svg><div class="t" style="left:104px;top:689px">ETV :: PWR-2 : Gear 4 | EB-3</div><div class="a" style="left:73px;top:711px;width:12px;height:1px;background:repeating-linear-gradient(90deg,#a0a0a0 0 1px,transparent 1px 2px)"></div><svg class="a" style="left:85px;top:704px" width="14" height="14" shape-rendering="crispEdges"><rect width="14" height="14" fill="#0000ff"/><g fill="#cdcdb4"><rect x="1" y="1" width="3" height="2"/><rect x="5" y="1" width="3" height="2"/><rect x="9" y="1" width="4" height="2"/><rect x="1" y="4" width="3" height="2"/><rect x="1" y="7" width="3" height="2"/><rect x="1" y="10" width="3" height="3"/></g><rect x="5" y="4" width="8" height="9" fill="#fff"/><g fill="#000"><rect x="8" y="4" width="1" height="9"/><rect x="5" y="6" width="8" height="1"/><rect x="5" y="9" width="8" height="1"/></g></svg><div class="t" style="left:104px;top:705px">ETV :: PWR-2 : Gear 5 | EB-3</div><div class="a" style="left:73px;top:727px;width:12px;height:1px;background:repeating-linear-gradient(90deg,#a0a0a0 0 1px,transparent 1px 2px)"></div><svg class="a" style="left:85px;top:720px" width="14" height="14" shape-rendering="crispEdges"><rect width="14" height="14" fill="#0000ff"/><g fill="#cdcdb4"><rect x="1" y="1" width="3" height="2"/><rect x="5" y="1" width="3" height="2"/><rect x="9" y="1" width="4" height="2"/><rect x="1" y="4" width="3" height="2"/><rect x="1" y="7" width="3" height="2"/><rect x="1" y="10" width="3" height="3"/></g><rect x="5" y="4" width="8" height="9" fill="#fff"/><g fill="#000"><rect x="8" y="4" width="1" height="9"/><rect x="5" y="6" width="8" height="1"/><rect x="5" y="9" width="8" height="1"/></g></svg><div class="t" style="left:104px;top:721px">ETV :: PWR-2 : Gear 6 | EB-3</div><div class="a" style="left:59px;top:743px;width:6px;height:1px;background:repeating-linear-gradient(90deg,#a0a0a0 0 1px,transparent 1px 2px)"></div><svg class="a" style="left:50px;top:739px" width="9" height="9"><defs></defs><rect x="0.5" y="0.5" width="8" height="8" rx="1" fill="#f4f4f4" stroke="#9a9a9a"/><path d="M2 4.5h5M4.5 2v5" stroke="#2d4f9e"/></svg><svg class="a" style="left:64px;top:738px" width="12" height="12"><path d="M0.5 1.5h4l1 1h5.5v8.5h-10.5z" fill="#f4f480" stroke="#000"/></svg><div class="t" style="left:85px;top:737px">ETV :: PWR-3 : Engine Brake (18)</div><div class="a" style="left:40px;top:759px;width:6px;height:1px;background:repeating-linear-gradient(90deg,#a0a0a0 0 1px,transparent 1px 2px)"></div><svg class="a" style="left:31px;top:755px" width="9" height="9"><defs></defs><rect x="0.5" y="0.5" width="8" height="8" rx="1" fill="#f4f4f4" stroke="#9a9a9a"/><path d="M2 4.5h5" stroke="#2d4f9e"/></svg><svg class="a" style="left:46px;top:753px" width="17" height="12"><path d="M0.5 1.5h5l1 1h6v3h-9l-3 6z" fill="#ffff00" stroke="#000"/><path d="M0.5 11.5l3.5-6h12l-4 6z" fill="#d4d414" stroke="#000"/></svg><div class="t" style="left:66px;top:753px">Limiters (6)</div><div class="a" style="left:54px;top:775px;width:12px;height:1px;background:repeating-linear-gradient(90deg,#a0a0a0 0 1px,transparent 1px 2px)"></div><svg class="a" style="left:66px;top:768px" width="14" height="14" shape-rendering="crispEdges"><rect width="14" height="14" fill="#0000ff"/><g fill="#cdcdb4"><rect x="1" y="1" width="3" height="2"/><rect x="5" y="1" width="3" height="2"/><rect x="9" y="1" width="4" height="2"/><rect x="1" y="4" width="3" height="2"/><rect x="1" y="7" width="3" height="2"/><rect x="1" y="10" width="3" height="3"/></g><rect x="5" y="4" width="8" height="9" fill="#fff"/><g fill="#000"><rect x="8" y="4" width="1" height="9"/><rect x="5" y="6" width="8" height="1"/><rect x="5" y="9" width="8" height="1"/></g></svg><div class="t" style="left:85px;top:769px">Rev Limiter 1</div><div class="a" style="left:54px;top:791px;width:12px;height:1px;background:repeating-linear-gradient(90deg,#a0a0a0 0 1px,transparent 1px 2px)"></div><svg class="a" style="left:66px;top:784px" width="14" height="14" shape-rendering="crispEdges"><rect width="14" height="14" fill="#0000ff"/><g fill="#cdcdb4"><rect x="1" y="1" width="3" height="2"/><rect x="5" y="1" width="3" height="2"/><rect x="9" y="1" width="4" height="2"/><rect x="1" y="4" width="3" height="2"/><rect x="1" y="7" width="3" height="2"/><rect x="1" y="10" width="3" height="3"/></g><rect x="5" y="4" width="8" height="9" fill="#fff"/><g fill="#000"><rect x="8" y="4" width="1" height="9"/><rect x="5" y="6" width="8" height="1"/><rect x="5" y="9" width="8" height="1"/></g></svg><div class="t" style="left:85px;top:785px">Rev Limiter 2</div><div class="a" style="left:54px;top:807px;width:12px;height:1px;background:repeating-linear-gradient(90deg,#a0a0a0 0 1px,transparent 1px 2px)"></div><svg class="a" style="left:66px;top:800px" width="14" height="14" shape-rendering="crispEdges"><rect width="14" height="14" fill="#0000ff"/><g fill="#cdcdb4"><rect x="1" y="1" width="3" height="2"/><rect x="5" y="1" width="3" height="2"/><rect x="9" y="1" width="4" height="2"/><rect x="1" y="4" width="3" height="2"/><rect x="1" y="7" width="3" height="2"/><rect x="1" y="10" width="3" height="3"/></g><rect x="5" y="4" width="8" height="9" fill="#fff"/><g fill="#000"><rect x="8" y="4" width="1" height="9"/><rect x="5" y="6" width="8" height="1"/><rect x="5" y="9" width="8" height="1"/></g></svg><div class="t" style="left:85px;top:801px">Rev Limiter 3</div><div class="a" style="left:54px;top:823px;width:12px;height:1px;background:repeating-linear-gradient(90deg,#a0a0a0 0 1px,transparent 1px 2px)"></div><svg class="a" style="left:66px;top:816px" width="14" height="14" shape-rendering="crispEdges"><rect width="14" height="14" fill="#0000ff"/><g fill="#cdcdb4"><rect x="1" y="1" width="3" height="2"/><rect x="5" y="1" width="3" height="2"/><rect x="9" y="1" width="4" height="2"/><rect x="1" y="4" width="3" height="2"/><rect x="1" y="7" width="3" height="2"/><rect x="1" y="10" width="3" height="3"/></g><rect x="5" y="4" width="8" height="9" fill="#fff"/><g fill="#000"><rect x="8" y="4" width="1" height="9"/><rect x="5" y="6" width="8" height="1"/><rect x="5" y="9" width="8" height="1"/></g></svg><div class="t" style="left:85px;top:817px">Rev Limiter 4</div><div class="a" style="left:54px;top:839px;width:12px;height:1px;background:repeating-linear-gradient(90deg,#a0a0a0 0 1px,transparent 1px 2px)"></div><svg class="a" style="left:66px;top:832px" width="14" height="14" shape-rendering="crispEdges"><rect width="14" height="14" fill="#0000ff"/><g fill="#cdcdb4"><rect x="1" y="1" width="3" height="2"/><rect x="5" y="1" width="3" height="2"/><rect x="9" y="1" width="4" height="2"/><rect x="1" y="4" width="3" height="2"/><rect x="1" y="7" width="3" height="2"/><rect x="1" y="10" width="3" height="3"/></g><rect x="5" y="4" width="8" height="9" fill="#fff"/><g fill="#000"><rect x="8" y="4" width="1" height="9"/><rect x="5" y="6" width="8" height="1"/><rect x="5" y="9" width="8" height="1"/></g></svg><div class="t" style="left:85px;top:833px">Rev Limiter 5</div><div class="a" style="left:54px;top:855px;width:12px;height:1px;background:repeating-linear-gradient(90deg,#a0a0a0 0 1px,transparent 1px 2px)"></div><svg class="a" style="left:66px;top:848px" width="14" height="14" shape-rendering="crispEdges"><rect width="14" height="14" fill="#0000ff"/><g fill="#cdcdb4"><rect x="1" y="1" width="3" height="2"/><rect x="5" y="1" width="3" height="2"/><rect x="9" y="1" width="4" height="2"/><rect x="1" y="4" width="3" height="2"/><rect x="1" y="7" width="3" height="2"/><rect x="1" y="10" width="3" height="3"/></g><rect x="5" y="4" width="8" height="9" fill="#fff"/><g fill="#000"><rect x="8" y="4" width="1" height="9"/><rect x="5" y="6" width="8" height="1"/><rect x="5" y="9" width="8" height="1"/></g></svg><div class="t" style="left:85px;top:849px">Rev Limiter 6</div><div class="a" style="left:40px;top:871px;width:6px;height:1px;background:repeating-linear-gradient(90deg,#a0a0a0 0 1px,transparent 1px 2px)"></div><svg class="a" style="left:31px;top:867px" width="9" height="9"><defs></defs><rect x="0.5" y="0.5" width="8" height="8" rx="1" fill="#f4f4f4" stroke="#9a9a9a"/><path d="M2 4.5h5M4.5 2v5" stroke="#2d4f9e"/></svg><svg class="a" style="left:45px;top:866px" width="12" height="12"><path d="M0.5 1.5h4l1 1h5.5v8.5h-10.5z" fill="#f4f480" stroke="#000"/></svg><div class="t" style="left:66px;top:865px">Other Maps (2)</div><div class="a" style="left:40px;top:887px;width:6px;height:1px;background:repeating-linear-gradient(90deg,#a0a0a0 0 1px,transparent 1px 2px)"></div><svg class="a" style="left:31px;top:883px" width="9" height="9"><defs></defs><rect x="0.5" y="0.5" width="8" height="8" rx="1" fill="#f4f4f4" stroke="#9a9a9a"/><path d="M2 4.5h5M4.5 2v5" stroke="#2d4f9e"/></svg><svg class="a" style="left:45px;top:882px" width="12" height="12"><path d="M0.5 1.5h4l1 1h5.5v8.5h-10.5z" fill="#f4f480" stroke="#000"/></svg><div class="t" style="left:66px;top:881px">ECU Settings (12)</div><div class="a" style="left:40px;top:903px;width:6px;height:1px;background:repeating-linear-gradient(90deg,#a0a0a0 0 1px,transparent 1px 2px)"></div><svg class="a" style="left:31px;top:899px" width="9" height="9"><defs></defs><rect x="0.5" y="0.5" width="8" height="8" rx="1" fill="#f4f4f4" stroke="#9a9a9a"/><path d="M2 4.5h5M4.5 2v5" stroke="#2d4f9e"/></svg><svg class="a" style="left:45px;top:898px" width="12" height="12"><path d="M0.5 1.5h4l1 1h5.5v8.5h-10.5z" fill="#f4f480" stroke="#000"/></svg><div class="t" style="left:66px;top:897px">ECU Info (3)</div><div class="a" style="left:455px;top:0;width:1241px;height:672px;background:#d6e2f0"></div><div class="a" style="left:455px;top:0;width:1241px;height:26px;background:linear-gradient(#c0cddb,#d9e6f3)"></div><div class="a" style="left:1696px;top:0;width:2px;height:674px;background:#404040"></div><div class="a" style="left:455px;top:672px;width:1243px;height:2px;background:#404040"></div><svg class="a" style="left:463px;top:8px" width="17" height="13"><rect x="0" y="2" width="17" height="9" fill="#000"/><rect x="1" y="0" width="1.5" height="13" fill="#000"/><rect x="4" y="0" width="1.5" height="13" fill="#000"/><rect x="7" y="0" width="1.5" height="13" fill="#000"/><rect x="10" y="0" width="1.5" height="13" fill="#000"/><rect x="13" y="0" width="1.5" height="13" fill="#000"/><rect x="16" y="0" width="1.5" height="13" fill="#000"/></svg><div class="t" style="left:484px;top:8.5px;font-size:11px;color:#9a9595">Fuel :: TPS : Cyl 2</div><div class="a" style="left:1655px;top:5px;width:32px;height:18px;border:1px solid #8594b0;border-radius:2px;background:linear-gradient(#c9d5e2,#d8e4f0)"></div><svg class="a" style="left:1655px;top:5px" width="32" height="18"><path d="M12 5.5L20 12.5M20 5.5L12 12.5" stroke="#404040" stroke-width="4" stroke-linecap="round"/><path d="M12 5.5L20 12.5M20 5.5L12 12.5" stroke="#fff" stroke-width="2.2" stroke-linecap="round"/></svg><div class="a" style="left:462px;top:26px;width:1226px;height:638px;background:#f0f0f0"></div><div class="a" style="left:466px;top:29px;width:2px;height:20px;border-left:1px solid #c8c8c8;border-right:1px solid #fff"></div><svg class="a" style="left:475px;top:32px" width="14" height="14" shape-rendering="crispEdges"><rect width="14" height="14" fill="#000"/><rect x="1" y="1" width="12" height="12" fill="#808000"/><rect x="3" y="1" width="8" height="6" fill="#fff"/><rect x="3" y="7" width="8" height="1" fill="#000"/><rect x="3" y="10" width="6" height="3" fill="#000"/><rect x="9" y="10" width="2" height="3" fill="#fff"/><rect x="12" y="1" width="1" height="1" fill="#fff"/></svg><svg class="a" style="left:498px;top:33px" width="13" height="14"><path d="M1.5 1.5L11.5 12.5M11.5 1.5L1.5 12.5" stroke="#f00" stroke-width="2.2"/></svg><svg class="a" style="left:520px;top:32px" width="17" height="15"><path d="M1.5 5.5l3 3 3-2 2.5 2 2.5 0.5 2.5-4" stroke="#f00" fill="none" stroke-width="1.4"/><path d="M1.5 1v13.5h14" stroke="#000" fill="none" stroke-dasharray="1 1"/></svg><svg class="a" style="left:542px;top:30px" width="18" height="17"><path d="M9 1v14M4 15.5h10M3.5 3.5h11" stroke="#000" stroke-width="1.6"/><path d="M3.5 3.5l-2.5 6M3.5 3.5l2.5 6M14.5 3.5l-2.5 6M14.5 3.5l2.5 6" stroke="#000" stroke-width="1"/><path d="M1 9.5a2.5 2 0 0 0 5 0z" fill="#ff0" stroke="#000"/><path d="M12 9.5a2.5 2 0 0 0 5 0z" fill="#ff0" stroke="#000"/></svg><div class="a" style="left:563px;top:28px;width:32px;height:21px;background:#cce4f7;border:1px solid #a8d0f0;border-radius:2px"></div><svg class="a" style="left:567px;top:30px" width="26" height="17"><path d="M2.5 13V2.5h10" stroke="#00f" stroke-width="2.2" fill="none"/><path d="M4 12.2h7" stroke="#00f" stroke-width="1.6"/><path d="M8 1.5L2 15.2h12z" fill="none" stroke="#000" stroke-width="1.8" stroke-linejoin="miter"/><path d="M17 7h7l-3.5 4z" fill="#222"/></svg><svg class="a" style="left:598px;top:31px" width="17" height="16"><path d="M1.5 1.5l7 10M8.5 1.5l-7 10" stroke="#00008b" stroke-width="2"/><path d="M9 8l7 7H1v-2h9z" fill="#f00"/></svg><svg class="a" style="left:621px;top:31px" width="17" height="16"><path d="M1.5 1.5l4.5 6 4.5-6M6 7.5v7" stroke="#00008b" stroke-width="2" fill="none"/><path d="M11 15V6" stroke="#f00" stroke-width="2"/><path d="M10 1l6 6h-6z" fill="#f00"/></svg><div class="a" style="left:658px;top:28px;width:2px;height:21px;border-left:1px solid #c8c8c8;border-right:1px solid #fff"></div><div class="t" style="left:669px;top:32px">Function:</div><div class="a" style="left:718px;top:28px;width:104px;height:21px;background:#fff;border:1px solid #d0d0d0;border-radius:2px"></div><div class="t" style="left:722px;top:32px">Interpolate X</div><svg class="a" style="left:808px;top:35px" width="12" height="8"><path d="M1 1.5L5.5 6L10 1.5" stroke="#555" fill="none" stroke-width="1.2"/></svg><div class="t" style="left:831px;top:32px">Value:</div><div class="a" style="left:862px;top:28px;width:45px;height:21px;background:#ebebeb"></div><div class="t" style="left:866px;top:32px;color:#8c8c8c">9000</div><div class="a" style="left:911px;top:29px;width:48px;height:19px;background:#fcfcfc;border:1px solid #d0d0d0;border-radius:3px"></div><div class="t" style="left:916px;top:32px">Execute</div><div class="a" style="left:462px;top:51px;width:1226px;height:589px;background:#404040;border-top:2px solid #6a6a6a;border-left:2px solid #6a6a6a"></div><div class="a" style="left:464px;top:53px;width:1224px;height:15px;background:#f0f0f0;border-bottom:1px solid #c8c8c8;border-right:1px solid #c8c8c8"></div><div class="t" style="left:464px;top:56px;width:1224px;text-align:center;font-weight:bold;font-size:12.5px">Fuel :: TPS : Cyl 2</div><div class="a" style="left:464px;top:68px;width:1196px;height:541px;background:#d8d8d8"></div><div class="a" style="left:464px;top:68px;width:46px;height:16px;background:#f0f0f0"></div><div class="a" style="left:465px;top:69px;width:44px;height:14px;border:1px solid #b8b8b8;background:#f4f4f4"></div><div class="hd" style="left:510px;top:69px;width:45px;background:#d9d9d9">0.0</div><div class="hd" style="left:556px;top:69px;width:45px;background:#f4f4f4">0.1</div><div class="hd" style="left:602px;top:69px;width:45px;background:#f4f4f4">0.4</div><div class="hd" style="left:648px;top:69px;width:45px;background:#f4f4f4">0.7</div><div class="hd" style="left:694px;top:69px;width:45px;background:#f4f4f4">1.3</div><div class="hd" style="left:740px;top:69px;width:45px;background:#f4f4f4">2.0</div><div class="hd" style="left:786px;top:69px;width:45px;background:#f4f4f4">3.2</div><div class="hd" style="left:832px;top:69px;width:45px;background:#f4f4f4">4.4</div><div class="hd" style="left:878px;top:69px;width:45px;background:#f4f4f4">5.5</div><div class="hd" style="left:924px;top:69px;width:45px;background:#f4f4f4">6.7</div><div class="hd" style="left:970px;top:69px;width:45px;background:#f4f4f4">8.0</div><div class="hd" style="left:1016px;top:69px;width:45px;background:#f4f4f4">10.3</div><div class="hd" style="left:1062px;top:69px;width:45px;background:#f4f4f4">13.3</div><div class="hd" style="left:1108px;top:69px;width:45px;background:#f4f4f4">16.3</div><div class="hd" style="left:1154px;top:69px;width:45px;background:#f4f4f4">19.2</div><div class="hd" style="left:1200px;top:69px;width:45px;background:#f4f4f4">22.3</div><div class="hd" style="left:1246px;top:69px;width:45px;background:#f4f4f4">28.3</div><div class="hd" style="left:1292px;top:69px;width:45px;background:#f4f4f4">34.2</div><div class="hd" style="left:1338px;top:69px;width:45px;background:#f4f4f4">40.2</div><div class="hd" style="left:1384px;top:69px;width:45px;background:#f4f4f4">46.2</div><div class="hd" style="left:1430px;top:69px;width:45px;background:#f4f4f4">58.1</div><div class="hd" style="left:1476px;top:69px;width:45px;background:#f4f4f4">70.1</div><div class="hd" style="left:1522px;top:69px;width:45px;background:#f4f4f4">90.0</div><div class="hd" style="left:1568px;top:69px;width:45px;background:#f4f4f4">97.8</div><div class="hd" style="left:1614px;top:69px;width:45px;background:#f4f4f4">100.1</div><div class="rh" style="left:465px;top:84px;width:44px;background:#d9d9d9;">800</div><div class="cell" style="left:511px;top:85px;width:44px;background:rgb(145,238,128)">1505</div><div class="cell" style="left:557px;top:85px;width:44px;background:rgb(145,238,128)">1505</div><div class="cell" style="left:603px;top:85px;width:44px;background:rgb(147,236,128)">1632</div><div class="cell" style="left:649px;top:85px;width:44px;background:rgb(149,234,127)">1746</div><div class="cell" style="left:695px;top:85px;width:44px;background:rgb(152,230,127)">2013</div><div class="cell" style="left:741px;top:85px;width:44px;background:rgb(157,224,126)">2334</div><div class="cell" style="left:787px;top:85px;width:44px;background:rgb(163,218,125)">2747</div><div class="cell" style="left:833px;top:85px;width:44px;background:rgb(171,208,124)">3307</div><div class="cell" style="left:879px;top:85px;width:44px;background:rgb(178,199,123)">3848</div><div class="cell" style="left:925px;top:85px;width:44px;background:rgb(181,196,122)">4079</div><div class="cell" style="left:971px;top:85px;width:44px;background:rgb(186,190,121)">4423</div><div class="cell" style="left:1017px;top:85px;width:44px;background:rgb(192,183,120)">4848</div><div class="cell" style="left:1063px;top:85px;width:44px;background:rgb(196,178,120)">5157</div><div class="cell" style="left:1109px;top:85px;width:44px;background:rgb(204,169,119)">5664</div><div class="cell" style="left:1155px;top:85px;width:44px;background:rgb(210,162,118)">6099</div><div class="cell" style="left:1201px;top:85px;width:44px;background:rgb(215,156,117)">6446</div><div class="cell" style="left:1247px;top:85px;width:44px;background:rgb(225,144,115)">7175</div><div class="cell" style="left:1293px;top:85px;width:44px;background:rgb(230,138,115)">7583</div><div class="cell" style="left:1339px;top:85px;width:44px;background:rgb(233,135,114)">7763</div><div class="cell" style="left:1385px;top:85px;width:44px;background:rgb(235,132,114)">7920</div><div class="cell" style="left:1431px;top:85px;width:44px;background:rgb(238,129,113)">8116</div><div class="cell" style="left:1477px;top:85px;width:44px;background:rgb(239,127,113)">8202</div><div class="cell" style="left:1523px;top:85px;width:44px;background:rgb(242,124,113)">8426</div><div class="cell" style="left:1569px;top:85px;width:44px;background:rgb(244,122,112)">8528</div><div class="cell" style="left:1615px;top:85px;width:44px;background:rgb(244,122,112)">8528</div><div class="rh" style="left:465px;top:99px;width:44px;">1000</div><div class="cell" style="left:511px;top:100px;width:44px;background:rgb(145,239,128)">1458</div><div class="cell" style="left:557px;top:100px;width:44px;background:rgb(145,239,128)">1451</div><div class="cell" style="left:603px;top:100px;width:44px;background:rgb(146,237,128)">1592</div><div class="cell" style="left:649px;top:100px;width:44px;background:rgb(148,235,127)">1724</div><div class="cell" style="left:695px;top:100px;width:44px;background:rgb(152,230,127)">1999</div><div class="cell" style="left:741px;top:100px;width:44px;background:rgb(157,225,126)">2328</div><div class="cell" style="left:787px;top:100px;width:44px;background:rgb(162,218,125)">2724</div><div class="cell" style="left:833px;top:100px;width:44px;background:rgb(170,209,124)">3262</div><div class="cell" style="left:879px;top:100px;width:44px;background:rgb(177,201,123)">3781</div><div class="cell" style="left:925px;top:100px;width:44px;background:rgb(181,196,122)">4041</div><div class="cell" style="left:971px;top:100px;width:44px;background:rgb(186,191,121)">4383</div><div class="cell" style="left:1017px;top:100px;width:44px;background:rgb(191,184,121)">4792</div><div class="cell" style="left:1063px;top:100px;width:44px;background:rgb(196,178,120)">5142</div><div class="cell" style="left:1109px;top:100px;width:44px;background:rgb(203,170,119)">5642</div><div class="cell" style="left:1155px;top:100px;width:44px;background:rgb(210,162,118)">6097</div><div class="cell" style="left:1201px;top:100px;width:44px;background:rgb(214,157,117)">6439</div><div class="cell" style="left:1247px;top:100px;width:44px;background:rgb(225,145,115)">7164</div><div class="cell" style="left:1293px;top:100px;width:44px;background:rgb(230,138,115)">7562</div><div class="cell" style="left:1339px;top:100px;width:44px;background:rgb(233,135,114)">7748</div><div class="cell" style="left:1385px;top:100px;width:44px;background:rgb(235,132,114)">7920</div><div class="cell" style="left:1431px;top:100px;width:44px;background:rgb(237,129,113)">8085</div><div class="cell" style="left:1477px;top:100px;width:44px;background:rgb(239,128,113)">8186</div><div class="cell" style="left:1523px;top:100px;width:44px;background:rgb(242,124,113)">8410</div><div class="cell" style="left:1569px;top:100px;width:44px;background:rgb(243,123,113)">8496</div><div class="cell" style="left:1615px;top:100px;width:44px;background:rgb(243,123,113)">8496</div><div class="rh" style="left:465px;top:114px;width:44px;">1100</div><div class="cell" style="left:511px;top:115px;width:44px;background:rgb(144,239,128)">1436</div><div class="cell" style="left:557px;top:115px;width:44px;background:rgb(144,239,128)">1427</div><div class="cell" style="left:603px;top:115px;width:44px;background:rgb(146,237,128)">1575</div><div class="cell" style="left:649px;top:115px;width:44px;background:rgb(148,235,127)">1715</div><div class="cell" style="left:695px;top:115px;width:44px;background:rgb(152,230,127)">1991</div><div class="cell" style="left:741px;top:115px;width:44px;background:rgb(157,225,126)">2318</div><div class="cell" style="left:787px;top:115px;width:44px;background:rgb(162,219,125)">2685</div><div class="cell" style="left:833px;top:115px;width:44px;background:rgb(169,210,124)">3216</div><div class="cell" style="left:879px;top:115px;width:44px;background:rgb(176,202,123)">3702</div><div class="cell" style="left:925px;top:115px;width:44px;background:rgb(180,198,122)">3958</div><div class="cell" style="left:971px;top:115px;width:44px;background:rgb(185,191,122)">4335</div><div class="cell" style="left:1017px;top:115px;width:44px;background:rgb(191,184,121)">4763</div><div class="cell" style="left:1063px;top:115px;width:44px;background:rgb(196,178,120)">5146</div><div class="cell" style="left:1109px;top:115px;width:44px;background:rgb(203,170,119)">5636</div><div class="cell" style="left:1155px;top:115px;width:44px;background:rgb(210,162,118)">6093</div><div class="cell" style="left:1201px;top:115px;width:44px;background:rgb(214,157,117)">6439</div><div class="cell" style="left:1247px;top:115px;width:44px;background:rgb(224,145,115)">7140</div><div class="cell" style="left:1293px;top:115px;width:44px;background:rgb(230,138,115)">7543</div><div class="cell" style="left:1339px;top:115px;width:44px;background:rgb(233,134,114)">7774</div><div class="cell" style="left:1385px;top:115px;width:44px;background:rgb(235,132,114)">7898</div><div class="cell" style="left:1431px;top:115px;width:44px;background:rgb(237,130,113)">8058</div><div class="cell" style="left:1477px;top:115px;width:44px;background:rgb(238,128,113)">8153</div><div class="cell" style="left:1523px;top:115px;width:44px;background:rgb(242,124,113)">8379</div><div class="cell" style="left:1569px;top:115px;width:44px;background:rgb(243,123,113)">8449</div><div class="cell" style="left:1615px;top:115px;width:44px;background:rgb(243,123,113)">8449</div><div class="rh" style="left:465px;top:129px;width:44px;">1200</div><div class="cell" style="left:511px;top:130px;width:44px;background:rgb(144,240,128)">1410</div><div class="cell" style="left:557px;top:130px;width:44px;background:rgb(144,240,128)">1404</div><div class="cell" style="left:603px;top:130px;width:44px;background:rgb(146,237,128)">1546</div><div class="cell" style="left:649px;top:130px;width:44px;background:rgb(148,235,127)">1703</div><div class="cell" style="left:695px;top:130px;width:44px;background:rgb(152,230,127)">1989</div><div class="cell" style="left:741px;top:130px;width:44px;background:rgb(157,225,126)">2315</div><div class="cell" style="left:787px;top:130px;width:44px;background:rgb(162,219,125)">2673</div><div class="cell" style="left:833px;top:130px;width:44px;background:rgb(168,211,124)">3138</div><div class="cell" style="left:879px;top:130px;width:44px;background:rgb(174,204,123)">3588</div><div class="cell" style="left:925px;top:130px;width:44px;background:rgb(179,199,123)">3892</div><div class="cell" style="left:971px;top:130px;width:44px;background:rgb(184,193,122)">4253</div><div class="cell" style="left:1017px;top:130px;width:44px;background:rgb(190,185,121)">4716</div><div class="cell" style="left:1063px;top:130px;width:44px;background:rgb(196,178,120)">5115</div><div class="cell" style="left:1109px;top:130px;width:44px;background:rgb(203,170,119)">5610</div><div class="cell" style="left:1155px;top:130px;width:44px;background:rgb(210,162,118)">6092</div><div class="cell" style="left:1201px;top:130px;width:44px;background:rgb(214,157,117)">6439</div><div class="cell" style="left:1247px;top:130px;width:44px;background:rgb(224,145,115)">7145</div><div class="cell" style="left:1293px;top:130px;width:44px;background:rgb(230,139,115)">7523</div><div class="cell" style="left:1339px;top:130px;width:44px;background:rgb(232,135,114)">7722</div><div class="cell" style="left:1385px;top:130px;width:44px;background:rgb(235,133,114)">7875</div><div class="cell" style="left:1431px;top:130px;width:44px;background:rgb(236,131,114)">8005</div><div class="cell" style="left:1477px;top:130px;width:44px;background:rgb(238,129,113)">8121</div><div class="cell" style="left:1523px;top:130px;width:44px;background:rgb(241,125,113)">8343</div><div class="cell" style="left:1569px;top:130px;width:44px;background:rgb(242,124,113)">8403</div><div class="cell" style="left:1615px;top:130px;width:44px;background:rgb(242,124,113)">8403</div><div class="rh" style="left:465px;top:144px;width:44px;">1300</div><div class="cell" style="left:511px;top:145px;width:44px;background:rgb(144,240,128)">1384</div><div class="cell" style="left:557px;top:145px;width:44px;background:rgb(144,240,128)">1385</div><div class="cell" style="left:603px;top:145px;width:44px;background:rgb(146,238,128)">1523</div><div class="cell" style="left:649px;top:145px;width:44px;background:rgb(148,235,127)">1684</div><div class="cell" style="left:695px;top:145px;width:44px;background:rgb(152,230,127)">1979</div><div class="cell" style="left:741px;top:145px;width:44px;background:rgb(156,225,126)">2303</div><div class="cell" style="left:787px;top:145px;width:44px;background:rgb(161,219,125)">2634</div><div class="cell" style="left:833px;top:145px;width:44px;background:rgb(167,213,124)">3047</div><div class="cell" style="left:879px;top:145px;width:44px;background:rgb(173,206,123)">3467</div><div class="cell" style="left:925px;top:145px;width:44px;background:rgb(178,200,123)">3817</div><div class="cell" style="left:971px;top:145px;width:44px;background:rgb(183,194,122)">4177</div><div class="cell" style="left:1017px;top:145px;width:44px;background:rgb(189,186,121)">4660</div><div class="cell" style="left:1063px;top:145px;width:44px;background:rgb(196,179,120)">5093</div><div class="cell" style="left:1109px;top:145px;width:44px;background:rgb(202,171,119)">5589</div><div class="cell" style="left:1155px;top:145px;width:44px;background:rgb(210,162,118)">6096</div><div class="cell" style="left:1201px;top:145px;width:44px;background:rgb(214,157,117)">6439</div><div class="cell" style="left:1247px;top:145px;width:44px;background:rgb(224,145,116)">7125</div><div class="cell" style="left:1293px;top:145px;width:44px;background:rgb(229,139,115)">7481</div><div class="cell" style="left:1339px;top:145px;width:44px;background:rgb(232,136,114)">7660</div><div class="cell" style="left:1385px;top:145px;width:44px;background:rgb(234,134,114)">7811</div><div class="cell" style="left:1431px;top:145px;width:44px;background:rgb(236,131,114)">7956</div><div class="cell" style="left:1477px;top:145px;width:44px;background:rgb(237,129,113)">8086</div><div class="cell" style="left:1523px;top:145px;width:44px;background:rgb(241,126,113)">8303</div><div class="cell" style="left:1569px;top:145px;width:44px;background:rgb(242,124,113)">8392</div><div class="cell" style="left:1615px;top:145px;width:44px;background:rgb(242,124,113)">8392</div><div class="rh" style="left:465px;top:159px;width:44px;">1400</div><div class="cell" style="left:511px;top:160px;width:44px;background:rgb(143,240,128)">1366</div><div class="cell" style="left:557px;top:160px;width:44px;background:rgb(143,241,128)">1363</div><div class="cell" style="left:603px;top:160px;width:44px;background:rgb(145,238,128)">1509</div><div class="cell" style="left:649px;top:160px;width:44px;background:rgb(148,235,127)">1666</div><div class="cell" style="left:695px;top:160px;width:44px;background:rgb(152,231,127)">1957</div><div class="cell" style="left:741px;top:160px;width:44px;background:rgb(156,225,126)">2300</div><div class="cell" style="left:787px;top:160px;width:44px;background:rgb(161,220,125)">2609</div><div class="cell" style="left:833px;top:160px;width:44px;background:rgb(166,214,125)">2975</div><div class="cell" style="left:879px;top:160px;width:44px;background:rgb(171,208,124)">3335</div><div class="cell" style="left:925px;top:160px;width:44px;background:rgb(176,202,123)">3679</div><div class="cell" style="left:971px;top:160px;width:44px;background:rgb(181,195,122)">4086</div><div class="cell" style="left:1017px;top:160px;width:44px;background:rgb(188,188,121)">4542</div><div class="cell" style="left:1063px;top:160px;width:44px;background:rgb(195,180,120)">5032</div><div class="cell" style="left:1109px;top:160px;width:44px;background:rgb(202,171,119)">5538</div><div class="cell" style="left:1155px;top:160px;width:44px;background:rgb(209,162,118)">6081</div><div class="cell" style="left:1201px;top:160px;width:44px;background:rgb(214,157,117)">6439</div><div class="cell" style="left:1247px;top:160px;width:44px;background:rgb(224,146,116)">7100</div><div class="cell" style="left:1293px;top:160px;width:44px;background:rgb(228,140,115)">7439</div><div class="cell" style="left:1339px;top:160px;width:44px;background:rgb(231,137,114)">7608</div><div class="cell" style="left:1385px;top:160px;width:44px;background:rgb(233,135,114)">7749</div><div class="cell" style="left:1431px;top:160px;width:44px;background:rgb(235,133,114)">7880</div><div class="cell" style="left:1477px;top:160px;width:44px;background:rgb(237,130,114)">8028</div><div class="cell" style="left:1523px;top:160px;width:44px;background:rgb(240,127,113)">8233</div><div class="cell" style="left:1569px;top:160px;width:44px;background:rgb(241,125,113)">8332</div><div class="cell" style="left:1615px;top:160px;width:44px;background:rgb(241,125,113)">8332</div><div class="rh" style="left:465px;top:174px;width:44px;">1500</div><div class="cell" style="left:511px;top:175px;width:44px;background:rgb(143,241,128)">1346</div><div class="cell" style="left:557px;top:175px;width:44px;background:rgb(143,241,128)">1346</div><div class="cell" style="left:603px;top:175px;width:44px;background:rgb(145,238,128)">1491</div><div class="cell" style="left:649px;top:175px;width:44px;background:rgb(147,236,127)">1644</div><div class="cell" style="left:695px;top:175px;width:44px;background:rgb(151,231,127)">1926</div><div class="cell" style="left:741px;top:175px;width:44px;background:rgb(156,225,126)">2282</div><div class="cell" style="left:787px;top:175px;width:44px;background:rgb(160,220,125)">2583</div><div class="cell" style="left:833px;top:175px;width:44px;background:rgb(165,215,125)">2910</div><div class="cell" style="left:879px;top:175px;width:44px;background:rgb(170,209,124)">3244</div><div class="cell" style="left:925px;top:175px;width:44px;background:rgb(175,204,123)">3600</div><div class="cell" style="left:971px;top:175px;width:44px;background:rgb(180,198,122)">3952</div><div class="cell" style="left:1017px;top:175px;width:44px;background:rgb(186,190,121)">4437</div><div class="cell" style="left:1063px;top:175px;width:44px;background:rgb(194,181,120)">4984</div><div class="cell" style="left:1109px;top:175px;width:44px;background:rgb(201,172,119)">5489</div><div class="cell" style="left:1155px;top:175px;width:44px;background:rgb(209,163,118)">6065</div><div class="cell" style="left:1201px;top:175px;width:44px;background:rgb(214,157,117)">6439</div><div class="cell" style="left:1247px;top:175px;width:44px;background:rgb(223,146,116)">7082</div><div class="cell" style="left:1293px;top:175px;width:44px;background:rgb(228,141,115)">7386</div><div class="cell" style="left:1339px;top:175px;width:44px;background:rgb(230,138,115)">7552</div><div class="cell" style="left:1385px;top:175px;width:44px;background:rgb(232,136,114)">7682</div><div class="cell" style="left:1431px;top:175px;width:44px;background:rgb(234,133,114)">7840</div><div class="cell" style="left:1477px;top:175px;width:44px;background:rgb(236,131,114)">7982</div><div class="cell" style="left:1523px;top:175px;width:44px;background:rgb(239,127,113)">8198</div><div class="cell" style="left:1569px;top:175px;width:44px;background:rgb(240,126,113)">8283</div><div class="cell" style="left:1615px;top:175px;width:44px;background:rgb(240,126,113)">8283</div><div class="rh" style="left:465px;top:189px;width:44px;">1600</div><div class="cell" style="left:511px;top:190px;width:44px;background:rgb(143,241,128)">1308</div><div class="cell" style="left:557px;top:190px;width:44px;background:rgb(143,241,128)">1308</div><div class="cell" style="left:603px;top:190px;width:44px;background:rgb(145,239,128)">1469</div><div class="cell" style="left:649px;top:190px;width:44px;background:rgb(147,236,128)">1610</div><div class="cell" style="left:695px;top:190px;width:44px;background:rgb(151,232,127)">1893</div><div class="cell" style="left:741px;top:190px;width:44px;background:rgb(156,226,126)">2243</div><div class="cell" style="left:787px;top:190px;width:44px;background:rgb(160,221,125)">2562</div><div class="cell" style="left:833px;top:190px;width:44px;background:rgb(164,216,125)">2857</div><div class="cell" style="left:879px;top:190px;width:44px;background:rgb(169,211,124)">3173</div><div class="cell" style="left:925px;top:190px;width:44px;background:rgb(173,205,123)">3490</div><div class="cell" style="left:971px;top:190px;width:44px;background:rgb(177,201,123)">3781</div><div class="cell" style="left:1017px;top:190px;width:44px;background:rgb(184,193,122)">4247</div><div class="cell" style="left:1063px;top:190px;width:44px;background:rgb(193,182,120)">4902</div><div class="cell" style="left:1109px;top:190px;width:44px;background:rgb(200,174,119)">5399</div><div class="cell" style="left:1155px;top:190px;width:44px;background:rgb(209,163,118)">6040</div><div class="cell" style="left:1201px;top:190px;width:44px;background:rgb(214,157,117)">6439</div><div class="cell" style="left:1247px;top:190px;width:44px;background:rgb(223,147,116)">7020</div><div class="cell" style="left:1293px;top:190px;width:44px;background:rgb(227,142,115)">7332</div><div class="cell" style="left:1339px;top:190px;width:44px;background:rgb(229,139,115)">7495</div><div class="cell" style="left:1385px;top:190px;width:44px;background:rgb(231,137,114)">7615</div><div class="cell" style="left:1431px;top:190px;width:44px;background:rgb(233,135,114)">7767</div><div class="cell" style="left:1477px;top:190px;width:44px;background:rgb(235,132,114)">7936</div><div class="cell" style="left:1523px;top:190px;width:44px;background:rgb(239,128,113)">8164</div><div class="cell" style="left:1569px;top:190px;width:44px;background:rgb(240,127,113)">8234</div><div class="cell" style="left:1615px;top:190px;width:44px;background:rgb(240,127,113)">8234</div><div class="rh" style="left:465px;top:204px;width:44px;">1800</div><div class="cell" style="left:511px;top:205px;width:44px;background:rgb(141,243,128)">1231</div><div class="cell" style="left:557px;top:205px;width:44px;background:rgb(141,243,128)">1231</div><div class="cell" style="left:603px;top:205px;width:44px;background:rgb(143,240,128)">1368</div><div class="cell" style="left:649px;top:205px;width:44px;background:rgb(145,238,128)">1507</div><div class="cell" style="left:695px;top:205px;width:44px;background:rgb(149,233,127)">1797</div><div class="cell" style="left:741px;top:205px;width:44px;background:rgb(154,228,126)">2148</div><div class="cell" style="left:787px;top:205px;width:44px;background:rgb(159,222,126)">2452</div><div class="cell" style="left:833px;top:205px;width:44px;background:rgb(163,218,125)">2743</div><div class="cell" style="left:879px;top:205px;width:44px;background:rgb(166,214,125)">2980</div><div class="cell" style="left:925px;top:205px;width:44px;background:rgb(170,209,124)">3271</div><div class="cell" style="left:971px;top:205px;width:44px;background:rgb(174,204,123)">3550</div><div class="cell" style="left:1017px;top:205px;width:44px;background:rgb(179,198,123)">3919</div><div class="cell" style="left:1063px;top:205px;width:44px;background:rgb(189,186,121)">4643</div><div class="cell" style="left:1109px;top:205px;width:44px;background:rgb(197,177,120)">5206</div><div class="cell" style="left:1155px;top:205px;width:44px;background:rgb(207,165,118)">5921</div><div class="cell" style="left:1201px;top:205px;width:44px;background:rgb(214,157,117)">6393</div><div class="cell" style="left:1247px;top:205px;width:44px;background:rgb(222,148,116)">6946</div><div class="cell" style="left:1293px;top:205px;width:44px;background:rgb(226,143,115)">7260</div><div class="cell" style="left:1339px;top:205px;width:44px;background:rgb(228,140,115)">7411</div><div class="cell" style="left:1385px;top:205px;width:44px;background:rgb(229,139,115)">7496</div><div class="cell" style="left:1431px;top:205px;width:44px;background:rgb(231,137,114)">7600</div><div class="cell" style="left:1477px;top:205px;width:44px;background:rgb(233,135,114)">7751</div><div class="cell" style="left:1523px;top:205px;width:44px;background:rgb(236,131,114)">7981</div><div class="cell" style="left:1569px;top:205px;width:44px;background:rgb(237,130,113)">8063</div><div class="cell" style="left:1615px;top:205px;width:44px;background:rgb(237,130,113)">8063</div><div class="rh" style="left:465px;top:219px;width:44px;">2000</div><div class="cell" style="left:511px;top:220px;width:44px;background:rgb(141,244,129)">1171</div><div class="cell" style="left:557px;top:220px;width:44px;background:rgb(141,244,129)">1171</div><div class="cell" style="left:603px;top:220px;width:44px;background:rgb(142,241,128)">1306</div><div class="cell" style="left:649px;top:220px;width:44px;background:rgb(144,239,128)">1439</div><div class="cell" style="left:695px;top:220px;width:44px;background:rgb(148,235,127)">1720</div><div class="cell" style="left:741px;top:220px;width:44px;background:rgb(153,229,127)">2054</div><div class="cell" style="left:787px;top:220px;width:44px;background:rgb(157,224,126)">2364</div><div class="cell" style="left:833px;top:220px;width:44px;background:rgb(161,220,125)">2620</div><div class="cell" style="left:879px;top:220px;width:44px;background:rgb(165,215,125)">2905</div><div class="cell" style="left:925px;top:220px;width:44px;background:rgb(168,211,124)">3117</div><div class="cell" style="left:971px;top:220px;width:44px;background:rgb(171,208,124)">3356</div><div class="cell" style="left:1017px;top:220px;width:44px;background:rgb(176,202,123)">3664</div><div class="cell" style="left:1063px;top:220px;width:44px;background:rgb(185,191,122)">4336</div><div class="cell" style="left:1109px;top:220px;width:44px;background:rgb(195,180,120)">5025</div><div class="cell" style="left:1155px;top:220px;width:44px;background:rgb(204,168,119)">5730</div><div class="cell" style="left:1201px;top:220px;width:44px;background:rgb(212,160,117)">6246</div><div class="cell" style="left:1247px;top:220px;width:44px;background:rgb(221,149,116)">6890</div><div class="cell" style="left:1293px;top:220px;width:44px;background:rgb(225,144,115)">7217</div><div class="cell" style="left:1339px;top:220px;width:44px;background:rgb(227,141,115)">7366</div><div class="cell" style="left:1385px;top:220px;width:44px;background:rgb(228,140,115)">7419</div><div class="cell" style="left:1431px;top:220px;width:44px;background:rgb(230,138,115)">7539</div><div class="cell" style="left:1477px;top:220px;width:44px;background:rgb(231,137,114)">7645</div><div class="cell" style="left:1523px;top:220px;width:44px;background:rgb(234,133,114)">7847</div><div class="cell" style="left:1569px;top:220px;width:44px;background:rgb(241,125,113)">8319</div><div class="cell" style="left:1615px;top:220px;width:44px;background:rgb(241,125,113)">8319</div><div class="rh" style="left:465px;top:234px;width:44px;">2250</div><div class="cell" style="left:511px;top:235px;width:44px;background:rgb(139,245,129)">1062</div><div class="cell" style="left:557px;top:235px;width:44px;background:rgb(139,245,129)">1062</div><div class="cell" style="left:603px;top:235px;width:44px;background:rgb(141,244,128)">1181</div><div class="cell" style="left:649px;top:235px;width:44px;background:rgb(142,242,128)">1298</div><div class="cell" style="left:695px;top:235px;width:44px;background:rgb(146,237,128)">1560</div><div class="cell" style="left:741px;top:235px;width:44px;background:rgb(150,232,127)">1874</div><div class="cell" style="left:787px;top:235px;width:44px;background:rgb(155,226,126)">2230</div><div class="cell" style="left:833px;top:235px;width:44px;background:rgb(160,221,125)">2552</div><div class="cell" style="left:879px;top:235px;width:44px;background:rgb(164,216,125)">2850</div><div class="cell" style="left:925px;top:235px;width:44px;background:rgb(167,213,124)">3042</div><div class="cell" style="left:971px;top:235px;width:44px;background:rgb(170,209,124)">3245</div><div class="cell" style="left:1017px;top:235px;width:44px;background:rgb(174,204,123)">3574</div><div class="cell" style="left:1063px;top:235px;width:44px;background:rgb(183,193,122)">4218</div><div class="cell" style="left:1109px;top:235px;width:44px;background:rgb(193,182,120)">4889</div><div class="cell" style="left:1155px;top:235px;width:44px;background:rgb(202,172,119)">5529</div><div class="cell" style="left:1201px;top:235px;width:44px;background:rgb(210,162,118)">6102</div><div class="cell" style="left:1247px;top:235px;width:44px;background:rgb(220,150,116)">6825</div><div class="cell" style="left:1293px;top:235px;width:44px;background:rgb(225,144,115)">7173</div><div class="cell" style="left:1339px;top:235px;width:44px;background:rgb(226,143,115)">7279</div><div class="cell" style="left:1385px;top:235px;width:44px;background:rgb(226,143,115)">7280</div><div class="cell" style="left:1431px;top:235px;width:44px;background:rgb(226,142,115)">7301</div><div class="cell" style="left:1477px;top:235px;width:44px;background:rgb(227,141,115)">7365</div><div class="cell" style="left:1523px;top:235px;width:44px;background:rgb(231,137,114)">7631</div><div class="cell" style="left:1569px;top:235px;width:44px;background:rgb(246,119,112)">8727</div><div class="cell" style="left:1615px;top:235px;width:44px;background:rgb(246,119,112)">8727</div><div class="rh" style="left:465px;top:249px;width:44px;">2500</div><div class="cell" style="left:511px;top:250px;width:44px;background:rgb(138,247,129)">977</div><div class="cell" style="left:557px;top:250px;width:44px;background:rgb(138,247,129)">977</div><div class="cell" style="left:603px;top:250px;width:44px;background:rgb(139,245,129)">1085</div><div class="cell" style="left:649px;top:250px;width:44px;background:rgb(141,243,128)">1193</div><div class="cell" style="left:695px;top:250px;width:44px;background:rgb(144,239,128)">1435</div><div class="cell" style="left:741px;top:250px;width:44px;background:rgb(148,234,127)">1729</div><div class="cell" style="left:787px;top:250px;width:44px;background:rgb(154,228,126)">2097</div><div class="cell" style="left:833px;top:250px;width:44px;background:rgb(158,223,126)">2447</div><div class="cell" style="left:879px;top:250px;width:44px;background:rgb(163,218,125)">2748</div><div class="cell" style="left:925px;top:250px;width:44px;background:rgb(166,214,125)">2958</div><div class="cell" style="left:971px;top:250px;width:44px;background:rgb(169,211,124)">3173</div><div class="cell" style="left:1017px;top:250px;width:44px;background:rgb(173,206,123)">3477</div><div class="cell" style="left:1063px;top:250px;width:44px;background:rgb(181,196,122)">4068</div><div class="cell" style="left:1109px;top:250px;width:44px;background:rgb(190,186,121)">4677</div><div class="cell" style="left:1155px;top:250px;width:44px;background:rgb(198,176,120)">5281</div><div class="cell" style="left:1201px;top:250px;width:44px;background:rgb(206,166,118)">5851</div><div class="cell" style="left:1247px;top:250px;width:44px;background:rgb(218,152,116)">6730</div><div class="cell" style="left:1293px;top:250px;width:44px;background:rgb(225,144,115)">7178</div><div class="cell" style="left:1339px;top:250px;width:44px;background:rgb(227,141,115)">7354</div><div class="cell" style="left:1385px;top:250px;width:44px;background:rgb(227,142,115)">7348</div><div class="cell" style="left:1431px;top:250px;width:44px;background:rgb(229,139,115)">7473</div><div class="cell" style="left:1477px;top:250px;width:44px;background:rgb(230,139,115)">7525</div><div class="cell" style="left:1523px;top:250px;width:44px;background:rgb(234,134,114)">7817</div><div class="cell" style="left:1569px;top:250px;width:44px;background:rgb(248,116,112)">8867</div><div class="cell" style="left:1615px;top:250px;width:44px;background:rgb(248,116,112)">8867</div><div class="rh" style="left:465px;top:264px;width:44px;">2750</div><div class="cell" style="left:511px;top:265px;width:44px;background:rgb(137,248,129)">891</div><div class="cell" style="left:557px;top:265px;width:44px;background:rgb(137,248,129)">891</div><div class="cell" style="left:603px;top:265px;width:44px;background:rgb(138,247,129)">993</div><div class="cell" style="left:649px;top:265px;width:44px;background:rgb(140,245,129)">1097</div><div class="cell" style="left:695px;top:265px;width:44px;background:rgb(143,241,128)">1330</div><div class="cell" style="left:741px;top:265px;width:44px;background:rgb(147,236,128)">1612</div><div class="cell" style="left:787px;top:265px;width:44px;background:rgb(152,230,127)">1999</div><div class="cell" style="left:833px;top:265px;width:44px;background:rgb(157,224,126)">2344</div><div class="cell" style="left:879px;top:265px;width:44px;background:rgb(161,219,125)">2640</div><div class="cell" style="left:925px;top:265px;width:44px;background:rgb(164,216,125)">2827</div><div class="cell" style="left:971px;top:265px;width:44px;background:rgb(167,213,124)">3032</div><div class="cell" style="left:1017px;top:265px;width:44px;background:rgb(171,208,124)">3329</div><div class="cell" style="left:1063px;top:265px;width:44px;background:rgb(178,199,123)">3872</div><div class="cell" style="left:1109px;top:265px;width:44px;background:rgb(186,190,121)">4424</div><div class="cell" style="left:1155px;top:265px;width:44px;background:rgb(194,181,120)">4988</div><div class="cell" style="left:1201px;top:265px;width:44px;background:rgb(202,172,119)">5530</div><div class="cell" style="left:1247px;top:265px;width:44px;background:rgb(214,157,117)">6423</div><div class="cell" style="left:1293px;top:265px;width:44px;background:rgb(221,149,116)">6920</div><div class="cell" style="left:1339px;top:265px;width:44px;background:rgb(224,145,115)">7141</div><div class="cell" style="left:1385px;top:265px;width:44px;background:rgb(225,144,115)">7195</div><div class="cell" style="left:1431px;top:265px;width:44px;background:rgb(228,140,115)">7419</div><div class="cell" style="left:1477px;top:265px;width:44px;background:rgb(229,139,115)">7499</div><div class="cell" style="left:1523px;top:265px;width:44px;background:rgb(233,135,114)">7764</div><div class="cell" style="left:1569px;top:265px;width:44px;background:rgb(245,121,112)">8600</div><div class="cell" style="left:1615px;top:265px;width:44px;background:rgb(245,121,112)">8600</div><div class="rh" style="left:465px;top:279px;width:44px;">3000</div><div class="cell" style="left:511px;top:280px;width:44px;background:rgb(136,249,129)">820</div><div class="cell" style="left:557px;top:280px;width:44px;background:rgb(136,249,129)">830</div><div class="cell" style="left:603px;top:280px;width:44px;background:rgb(137,247,129)">944</div><div class="cell" style="left:649px;top:280px;width:44px;background:rgb(139,245,129)">1088</div><div class="cell" style="left:695px;top:280px;width:44px;background:rgb(141,243,128)">1215</div><div class="cell" style="left:741px;top:280px;width:44px;background:rgb(145,239,128)">1468</div><div class="cell" style="left:787px;top:280px;width:44px;background:rgb(150,233,127)">1841</div><div class="cell" style="left:833px;top:280px;width:44px;background:rgb(155,227,126)">2182</div><div class="cell" style="left:879px;top:280px;width:44px;background:rgb(159,222,126)">2483</div><div class="cell" style="left:925px;top:280px;width:44px;background:rgb(161,219,125)">2654</div><div class="cell" style="left:971px;top:280px;width:44px;background:rgb(165,215,125)">2894</div><div class="cell" style="left:1017px;top:280px;width:44px;background:rgb(167,213,124)">3024</div><div class="cell" style="left:1063px;top:280px;width:44px;background:rgb(173,205,123)">3518</div><div class="cell" style="left:1109px;top:280px;width:44px;background:rgb(181,196,122)">4081</div><div class="cell" style="left:1155px;top:280px;width:44px;background:rgb(189,187,121)">4613</div><div class="cell" style="left:1201px;top:280px;width:44px;background:rgb(196,178,120)">5136</div><div class="cell" style="left:1247px;top:280px;width:44px;background:rgb(209,163,118)">6071</div><div class="cell" style="left:1293px;top:280px;width:44px;background:rgb(218,152,116)">6711</div><div class="cell" style="left:1339px;top:280px;width:44px;background:rgb(222,147,116)">6988</div><div class="cell" style="left:1385px;top:280px;width:44px;background:rgb(224,145,116)">7113</div><div class="cell" style="left:1431px;top:280px;width:44px;background:rgb(226,143,115)">7253</div><div class="cell" style="left:1477px;top:280px;width:44px;background:rgb(226,143,115)">7272</div><div class="cell" style="left:1523px;top:280px;width:44px;background:rgb(229,140,115)">7462</div><div class="cell" style="left:1569px;top:280px;width:44px;background:rgb(240,127,113)">8240</div><div class="cell" style="left:1615px;top:280px;width:44px;background:rgb(240,127,113)">8240</div><div class="rh" style="left:465px;top:294px;width:44px;">3250</div><div class="cell" style="left:511px;top:295px;width:44px;background:rgb(136,250,129)">809</div><div class="cell" style="left:557px;top:295px;width:44px;background:rgb(136,250,129)">819</div><div class="cell" style="left:603px;top:295px;width:44px;background:rgb(137,248,129)">901</div><div class="cell" style="left:649px;top:295px;width:44px;background:rgb(138,247,129)">994</div><div class="cell" style="left:695px;top:295px;width:44px;background:rgb(141,243,128)">1205</div><div class="cell" style="left:741px;top:295px;width:44px;background:rgb(145,239,128)">1462</div><div class="cell" style="left:787px;top:295px;width:44px;background:rgb(150,233,127)">1818</div><div class="cell" style="left:833px;top:295px;width:44px;background:rgb(154,228,126)">2136</div><div class="cell" style="left:879px;top:295px;width:44px;background:rgb(158,223,126)">2409</div><div class="cell" style="left:925px;top:295px;width:44px;background:rgb(160,220,125)">2588</div><div class="cell" style="left:971px;top:295px;width:44px;background:rgb(163,217,125)">2783</div><div class="cell" style="left:1017px;top:295px;width:44px;background:rgb(167,212,124)">3068</div><div class="cell" style="left:1063px;top:295px;width:44px;background:rgb(174,204,123)">3587</div><div class="cell" style="left:1109px;top:295px;width:44px;background:rgb(182,195,122)">4111</div><div class="cell" style="left:1155px;top:295px;width:44px;background:rgb(189,186,121)">4637</div><div class="cell" style="left:1201px;top:295px;width:44px;background:rgb(196,178,120)">5135</div><div class="cell" style="left:1247px;top:295px;width:44px;background:rgb(208,165,118)">5955</div><div class="cell" style="left:1293px;top:295px;width:44px;background:rgb(215,156,117)">6447</div><div class="cell" style="left:1339px;top:295px;width:44px;background:rgb(218,152,116)">6702</div><div class="cell" style="left:1385px;top:295px;width:44px;background:rgb(219,151,116)">6793</div><div class="cell" style="left:1431px;top:295px;width:44px;background:rgb(224,145,115)">7140</div><div class="cell" style="left:1477px;top:295px;width:44px;background:rgb(224,145,115)">7145</div><div class="cell" style="left:1523px;top:295px;width:44px;background:rgb(227,141,115)">7361</div><div class="cell" style="left:1569px;top:295px;width:44px;background:rgb(239,128,113)">8169</div><div class="cell" style="left:1615px;top:295px;width:44px;background:rgb(239,128,113)">8169</div><div class="rh" style="left:465px;top:309px;width:44px;">3500</div><div class="cell" style="left:511px;top:310px;width:44px;background:rgb(135,250,129)">774</div><div class="cell" style="left:557px;top:310px;width:44px;background:rgb(135,250,129)">774</div><div class="cell" style="left:603px;top:310px;width:44px;background:rgb(136,249,129)">864</div><div class="cell" style="left:649px;top:310px;width:44px;background:rgb(138,247,129)">957</div><div class="cell" style="left:695px;top:310px;width:44px;background:rgb(141,244,129)">1165</div><div class="cell" style="left:741px;top:310px;width:44px;background:rgb(144,240,128)">1421</div><div class="cell" style="left:787px;top:310px;width:44px;background:rgb(149,234,127)">1776</div><div class="cell" style="left:833px;top:310px;width:44px;background:rgb(154,228,126)">2095</div><div class="cell" style="left:879px;top:310px;width:44px;background:rgb(157,224,126)">2368</div><div class="cell" style="left:925px;top:310px;width:44px;background:rgb(160,221,125)">2551</div><div class="cell" style="left:971px;top:310px;width:44px;background:rgb(163,218,125)">2749</div><div class="cell" style="left:1017px;top:310px;width:44px;background:rgb(167,213,124)">3040</div><div class="cell" style="left:1063px;top:310px;width:44px;background:rgb(174,204,123)">3570</div><div class="cell" style="left:1109px;top:310px;width:44px;background:rgb(182,195,122)">4102</div><div class="cell" style="left:1155px;top:310px;width:44px;background:rgb(189,186,121)">4632</div><div class="cell" style="left:1201px;top:310px;width:44px;background:rgb(196,178,120)">5129</div><div class="cell" style="left:1247px;top:310px;width:44px;background:rgb(208,165,118)">5948</div><div class="cell" style="left:1293px;top:310px;width:44px;background:rgb(215,156,117)">6458</div><div class="cell" style="left:1339px;top:310px;width:44px;background:rgb(219,152,116)">6742</div><div class="cell" style="left:1385px;top:310px;width:44px;background:rgb(221,148,116)">6927</div><div class="cell" style="left:1431px;top:310px;width:44px;background:rgb(226,143,115)">7278</div><div class="cell" style="left:1477px;top:310px;width:44px;background:rgb(226,143,115)">7256</div><div class="cell" style="left:1523px;top:310px;width:44px;background:rgb(228,141,115)">7390</div><div class="cell" style="left:1569px;top:310px;width:44px;background:rgb(238,128,113)">8145</div><div class="cell" style="left:1615px;top:310px;width:44px;background:rgb(238,128,113)">8145</div><div class="rh" style="left:465px;top:324px;width:44px;">3750</div><div class="cell" style="left:511px;top:325px;width:44px;background:rgb(134,251,130)">709</div><div class="cell" style="left:557px;top:325px;width:44px;background:rgb(134,251,130)">709</div><div class="cell" style="left:603px;top:325px;width:44px;background:rgb(135,250,129)">800</div><div class="cell" style="left:649px;top:325px;width:44px;background:rgb(137,248,129)">894</div><div class="cell" style="left:695px;top:325px;width:44px;background:rgb(140,245,129)">1105</div><div class="cell" style="left:741px;top:325px;width:44px;background:rgb(143,240,128)">1366</div><div class="cell" style="left:787px;top:325px;width:44px;background:rgb(148,234,127)">1730</div><div class="cell" style="left:833px;top:325px;width:44px;background:rgb(153,229,127)">2058</div><div class="cell" style="left:879px;top:325px;width:44px;background:rgb(157,224,126)">2338</div><div class="cell" style="left:925px;top:325px;width:44px;background:rgb(160,221,126)">2529</div><div class="cell" style="left:971px;top:325px;width:44px;background:rgb(163,218,125)">2737</div><div class="cell" style="left:1017px;top:325px;width:44px;background:rgb(167,213,124)">3042</div><div class="cell" style="left:1063px;top:325px;width:44px;background:rgb(175,204,123)">3596</div><div class="cell" style="left:1109px;top:325px;width:44px;background:rgb(182,194,122)">4152</div><div class="cell" style="left:1155px;top:325px;width:44px;background:rgb(190,185,121)">4699</div><div class="cell" style="left:1201px;top:325px;width:44px;background:rgb(197,177,120)">5209</div><div class="cell" style="left:1247px;top:325px;width:44px;background:rgb(209,163,118)">6048</div><div class="cell" style="left:1293px;top:325px;width:44px;background:rgb(217,154,117)">6591</div><div class="cell" style="left:1339px;top:325px;width:44px;background:rgb(221,149,116)">6912</div><div class="cell" style="left:1385px;top:325px;width:44px;background:rgb(224,145,116)">7117</div><div class="cell" style="left:1431px;top:325px;width:44px;background:rgb(230,138,115)">7569</div><div class="cell" style="left:1477px;top:325px;width:44px;background:rgb(229,139,115)">7509</div><div class="cell" style="left:1523px;top:325px;width:44px;background:rgb(229,139,115)">7477</div><div class="cell" style="left:1569px;top:325px;width:44px;background:rgb(240,126,113)">8266</div><div class="cell" style="left:1615px;top:325px;width:44px;background:rgb(240,126,113)">8266</div><div class="rh" style="left:465px;top:339px;width:44px;">4000</div><div class="cell" style="left:511px;top:340px;width:44px;background:rgb(133,253,130)">622</div><div class="cell" style="left:557px;top:340px;width:44px;background:rgb(133,253,130)">622</div><div class="cell" style="left:603px;top:340px;width:44px;background:rgb(134,251,130)">713</div><div class="cell" style="left:649px;top:340px;width:44px;background:rgb(135,250,129)">805</div><div class="cell" style="left:695px;top:340px;width:44px;background:rgb(138,246,129)">1016</div><div class="cell" style="left:741px;top:340px;width:44px;background:rgb(142,242,128)">1277</div><div class="cell" style="left:787px;top:340px;width:44px;background:rgb(147,236,127)">1643</div><div class="cell" style="left:833px;top:340px;width:44px;background:rgb(152,230,127)">1974</div><div class="cell" style="left:879px;top:340px;width:44px;background:rgb(156,226,126)">2255</div><div class="cell" style="left:925px;top:340px;width:44px;background:rgb(159,222,126)">2453</div><div class="cell" style="left:971px;top:340px;width:44px;background:rgb(162,219,125)">2666</div><div class="cell" style="left:1017px;top:340px;width:44px;background:rgb(166,214,125)">2981</div><div class="cell" style="left:1063px;top:340px;width:44px;background:rgb(174,204,123)">3551</div><div class="cell" style="left:1109px;top:340px;width:44px;background:rgb(182,195,122)">4120</div><div class="cell" style="left:1155px;top:340px;width:44px;background:rgb(190,186,121)">4676</div><div class="cell" style="left:1201px;top:340px;width:44px;background:rgb(197,177,120)">5188</div><div class="cell" style="left:1247px;top:340px;width:44px;background:rgb(209,163,118)">6032</div><div class="cell" style="left:1293px;top:340px;width:44px;background:rgb(217,154,117)">6600</div><div class="cell" style="left:1339px;top:340px;width:44px;background:rgb(222,148,116)">6956</div><div class="cell" style="left:1385px;top:340px;width:44px;background:rgb(225,144,115)">7177</div><div class="cell" style="left:1431px;top:340px;width:44px;background:rgb(233,135,114)">7731</div><div class="cell" style="left:1477px;top:340px;width:44px;background:rgb(232,136,114)">7699</div><div class="cell" style="left:1523px;top:340px;width:44px;background:rgb(232,136,114)">7693</div><div class="cell" style="left:1569px;top:340px;width:44px;background:rgb(242,124,113)">8415</div><div class="cell" style="left:1615px;top:340px;width:44px;background:rgb(242,124,113)">8415</div><div class="rh" style="left:465px;top:354px;width:44px;">4250</div><div class="cell" style="left:511px;top:355px;width:44px;background:rgb(132,254,130)">562</div><div class="cell" style="left:557px;top:355px;width:44px;background:rgb(132,254,130)">562</div><div class="cell" style="left:603px;top:355px;width:44px;background:rgb(133,252,130)">648</div><div class="cell" style="left:649px;top:355px;width:44px;background:rgb(134,251,129)">736</div><div class="cell" style="left:695px;top:355px;width:44px;background:rgb(137,248,129)">937</div><div class="cell" style="left:741px;top:355px;width:44px;background:rgb(141,243,128)">1188</div><div class="cell" style="left:787px;top:355px;width:44px;background:rgb(146,238,128)">1542</div><div class="cell" style="left:833px;top:355px;width:44px;background:rgb(150,232,127)">1862</div><div class="cell" style="left:879px;top:355px;width:44px;background:rgb(154,228,126)">2134</div><div class="cell" style="left:925px;top:355px;width:44px;background:rgb(157,225,126)">2330</div><div class="cell" style="left:971px;top:355px;width:44px;background:rgb(160,221,126)">2540</div><div class="cell" style="left:1017px;top:355px;width:44px;background:rgb(164,216,125)">2851</div><div class="cell" style="left:1063px;top:355px;width:44px;background:rgb(172,207,124)">3414</div><div class="cell" style="left:1109px;top:355px;width:44px;background:rgb(180,197,122)">3975</div><div class="cell" style="left:1155px;top:355px;width:44px;background:rgb(187,188,121)">4516</div><div class="cell" style="left:1201px;top:355px;width:44px;background:rgb(194,180,120)">5011</div><div class="cell" style="left:1247px;top:355px;width:44px;background:rgb(206,167,118)">5825</div><div class="cell" style="left:1293px;top:355px;width:44px;background:rgb(214,157,117)">6396</div><div class="cell" style="left:1339px;top:355px;width:44px;background:rgb(219,151,116)">6773</div><div class="cell" style="left:1385px;top:355px;width:44px;background:rgb(223,147,116)">7036</div><div class="cell" style="left:1431px;top:355px;width:44px;background:rgb(231,137,114)">7639</div><div class="cell" style="left:1477px;top:355px;width:44px;background:rgb(232,135,114)">7722</div><div class="cell" style="left:1523px;top:355px;width:44px;background:rgb(232,135,114)">7728</div><div class="cell" style="left:1569px;top:355px;width:44px;background:rgb(244,122,112)">8545</div><div class="cell" style="left:1615px;top:355px;width:44px;background:rgb(244,122,112)">8545</div><div class="rh" style="left:465px;top:369px;width:44px;">4500</div><div class="cell" style="left:511px;top:370px;width:44px;background:rgb(132,254,130)">528</div><div class="cell" style="left:557px;top:370px;width:44px;background:rgb(132,254,130)">528</div><div class="cell" style="left:603px;top:370px;width:44px;background:rgb(133,253,130)">609</div><div class="cell" style="left:649px;top:370px;width:44px;background:rgb(134,252,130)">691</div><div class="cell" style="left:695px;top:370px;width:44px;background:rgb(137,248,129)">880</div><div class="cell" style="left:741px;top:370px;width:44px;background:rgb(140,245,129)">1119</div><div class="cell" style="left:787px;top:370px;width:44px;background:rgb(145,239,128)">1455</div><div class="cell" style="left:833px;top:370px;width:44px;background:rgb(149,234,127)">1761</div><div class="cell" style="left:879px;top:370px;width:44px;background:rgb(152,230,127)">2021</div><div class="cell" style="left:925px;top:370px;width:44px;background:rgb(155,226,126)">2212</div><div class="cell" style="left:971px;top:370px;width:44px;background:rgb(158,223,126)">2417</div><div class="cell" style="left:1017px;top:370px;width:44px;background:rgb(162,218,125)">2721</div><div class="cell" style="left:1063px;top:370px;width:44px;background:rgb(170,209,124)">3271</div><div class="cell" style="left:1109px;top:370px;width:44px;background:rgb(178,200,123)">3816</div><div class="cell" style="left:1155px;top:370px;width:44px;background:rgb(185,191,122)">4337</div><div class="cell" style="left:1201px;top:370px;width:44px;background:rgb(192,184,121)">4808</div><div class="cell" style="left:1247px;top:370px;width:44px;background:rgb(202,171,119)">5584</div><div class="cell" style="left:1293px;top:370px;width:44px;background:rgb(210,161,118)">6151</div><div class="cell" style="left:1339px;top:370px;width:44px;background:rgb(216,155,117)">6544</div><div class="cell" style="left:1385px;top:370px;width:44px;background:rgb(220,149,116)">6867</div><div class="cell" style="left:1431px;top:370px;width:44px;background:rgb(229,139,115)">7488</div><div class="cell" style="left:1477px;top:370px;width:44px;background:rgb(231,137,114)">7638</div><div class="cell" style="left:1523px;top:370px;width:44px;background:rgb(233,135,114)">7735</div><div class="cell" style="left:1569px;top:370px;width:44px;background:rgb(244,122,112)">8556</div><div class="cell" style="left:1615px;top:370px;width:44px;background:rgb(244,122,112)">8556</div><div class="rh" style="left:465px;top:384px;width:44px;">4750</div><div class="cell" style="left:511px;top:385px;width:44px;background:rgb(132,254,130)">533</div><div class="cell" style="left:557px;top:385px;width:44px;background:rgb(132,254,130)">533</div><div class="cell" style="left:603px;top:385px;width:44px;background:rgb(133,253,130)">610</div><div class="cell" style="left:649px;top:385px;width:44px;background:rgb(134,252,130)">688</div><div class="cell" style="left:695px;top:385px;width:44px;background:rgb(136,249,129)">869</div><div class="cell" style="left:741px;top:385px;width:44px;background:rgb(140,245,129)">1099</div><div class="cell" style="left:787px;top:385px;width:44px;background:rgb(144,239,128)">1426</div><div class="cell" style="left:833px;top:385px;width:44px;background:rgb(148,235,127)">1724</div><div class="cell" style="left:879px;top:385px;width:44px;background:rgb(152,230,127)">1975</div><div class="cell" style="left:925px;top:385px;width:44px;background:rgb(155,227,126)">2166</div><div class="cell" style="left:971px;top:385px;width:44px;background:rgb(157,224,126)">2369</div><div class="cell" style="left:1017px;top:385px;width:44px;background:rgb(162,219,125)">2672</div><div class="cell" style="left:1063px;top:385px;width:44px;background:rgb(169,210,124)">3219</div><div class="cell" style="left:1109px;top:385px;width:44px;background:rgb(177,201,123)">3759</div><div class="cell" style="left:1155px;top:385px;width:44px;background:rgb(184,192,122)">4269</div><div class="cell" style="left:1201px;top:385px;width:44px;background:rgb(190,185,121)">4726</div><div class="cell" style="left:1247px;top:385px;width:44px;background:rgb(201,172,119)">5477</div><div class="cell" style="left:1293px;top:385px;width:44px;background:rgb(209,163,118)">6051</div><div class="cell" style="left:1339px;top:385px;width:44px;background:rgb(215,156,117)">6468</div><div class="cell" style="left:1385px;top:385px;width:44px;background:rgb(219,151,116)">6786</div><div class="cell" style="left:1431px;top:385px;width:44px;background:rgb(229,139,115)">7506</div><div class="cell" style="left:1477px;top:385px;width:44px;background:rgb(231,136,114)">7654</div><div class="cell" style="left:1523px;top:385px;width:44px;background:rgb(233,134,114)">7788</div><div class="cell" style="left:1569px;top:385px;width:44px;background:rgb(244,121,112)">8567</div><div class="cell" style="left:1615px;top:385px;width:44px;background:rgb(244,121,112)">8567</div><div class="rh" style="left:465px;top:399px;width:44px;">5000</div><div class="cell" style="left:511px;top:400px;width:44px;background:rgb(131,255,130)">513</div><div class="cell" style="left:557px;top:400px;width:44px;background:rgb(131,255,130)">513</div><div class="cell" style="left:603px;top:400px;width:44px;background:rgb(132,253,130)">587</div><div class="cell" style="left:649px;top:400px;width:44px;background:rgb(133,252,130)">663</div><div class="cell" style="left:695px;top:400px;width:44px;background:rgb(136,249,129)">839</div><div class="cell" style="left:741px;top:400px;width:44px;background:rgb(139,245,129)">1064</div><div class="cell" style="left:787px;top:400px;width:44px;background:rgb(144,240,128)">1385</div><div class="cell" style="left:833px;top:400px;width:44px;background:rgb(148,235,127)">1680</div><div class="cell" style="left:879px;top:400px;width:44px;background:rgb(151,231,127)">1928</div><div class="cell" style="left:925px;top:400px;width:44px;background:rgb(154,228,126)">2121</div><div class="cell" style="left:971px;top:400px;width:44px;background:rgb(157,225,126)">2326</div><div class="cell" style="left:1017px;top:400px;width:44px;background:rgb(161,220,125)">2633</div><div class="cell" style="left:1063px;top:400px;width:44px;background:rgb(169,210,124)">3186</div><div class="cell" style="left:1109px;top:400px;width:44px;background:rgb(176,201,123)">3729</div><div class="cell" style="left:1155px;top:400px;width:44px;background:rgb(184,193,122)">4237</div><div class="cell" style="left:1201px;top:400px;width:44px;background:rgb(190,186,121)">4688</div><div class="cell" style="left:1247px;top:400px;width:44px;background:rgb(200,173,119)">5428</div><div class="cell" style="left:1293px;top:400px;width:44px;background:rgb(208,164,118)">6017</div><div class="cell" style="left:1339px;top:400px;width:44px;background:rgb(215,156,117)">6465</div><div class="cell" style="left:1385px;top:400px;width:44px;background:rgb(220,150,116)">6859</div><div class="cell" style="left:1431px;top:400px;width:44px;background:rgb(231,137,114)">7617</div><div class="cell" style="left:1477px;top:400px;width:44px;background:rgb(235,133,114)">7886</div><div class="cell" style="left:1523px;top:400px;width:44px;background:rgb(236,131,114)">7982</div><div class="cell" style="left:1569px;top:400px;width:44px;background:rgb(248,117,112)">8831</div><div class="cell" style="left:1615px;top:400px;width:44px;background:rgb(248,117,112)">8831</div><div class="rh" style="left:465px;top:414px;width:44px;">5250</div><div class="cell" style="left:511px;top:415px;width:44px;background:rgb(131,255,130)">509</div><div class="cell" style="left:557px;top:415px;width:44px;background:rgb(131,255,130)">509</div><div class="cell" style="left:603px;top:415px;width:44px;background:rgb(132,253,130)">579</div><div class="cell" style="left:649px;top:415px;width:44px;background:rgb(133,252,130)">649</div><div class="cell" style="left:695px;top:415px;width:44px;background:rgb(136,250,129)">815</div><div class="cell" style="left:741px;top:415px;width:44px;background:rgb(139,246,129)">1029</div><div class="cell" style="left:787px;top:415px;width:44px;background:rgb(143,241,128)">1337</div><div class="cell" style="left:833px;top:415px;width:44px;background:rgb(147,236,128)">1620</div><div class="cell" style="left:879px;top:415px;width:44px;background:rgb(150,232,127)">1858</div><div class="cell" style="left:925px;top:415px;width:44px;background:rgb(153,229,127)">2048</div><div class="cell" style="left:971px;top:415px;width:44px;background:rgb(156,226,126)">2249</div><div class="cell" style="left:1017px;top:415px;width:44px;background:rgb(160,221,125)">2552</div><div class="cell" style="left:1063px;top:415px;width:44px;background:rgb(168,212,124)">3096</div><div class="cell" style="left:1109px;top:415px;width:44px;background:rgb(175,203,123)">3629</div><div class="cell" style="left:1155px;top:415px;width:44px;background:rgb(182,195,122)">4121</div><div class="cell" style="left:1201px;top:415px;width:44px;background:rgb(188,188,121)">4552</div><div class="cell" style="left:1247px;top:415px;width:44px;background:rgb(198,176,120)">5260</div><div class="cell" style="left:1293px;top:415px;width:44px;background:rgb(206,166,118)">5850</div><div class="cell" style="left:1339px;top:415px;width:44px;background:rgb(213,159,117)">6316</div><div class="cell" style="left:1385px;top:415px;width:44px;background:rgb(219,152,116)">6733</div><div class="cell" style="left:1431px;top:415px;width:44px;background:rgb(230,138,115)">7552</div><div class="cell" style="left:1477px;top:415px;width:44px;background:rgb(235,132,114)">7898</div><div class="cell" style="left:1523px;top:415px;width:44px;background:rgb(238,128,113)">8147</div><div class="cell" style="left:1569px;top:415px;width:44px;background:rgb(250,114,111)">8994</div><div class="cell" style="left:1615px;top:415px;width:44px;background:rgb(250,114,111)">8994</div><div class="rh" style="left:465px;top:429px;width:44px;">5500</div><div class="cell" style="left:511px;top:430px;width:44px;background:rgb(131,255,130)">500</div><div class="cell" style="left:557px;top:430px;width:44px;background:rgb(131,255,130)">500</div><div class="cell" style="left:603px;top:430px;width:44px;background:rgb(132,254,130)">564</div><div class="cell" style="left:649px;top:430px;width:44px;background:rgb(133,253,130)">629</div><div class="cell" style="left:695px;top:430px;width:44px;background:rgb(135,250,129)">782</div><div class="cell" style="left:741px;top:430px;width:44px;background:rgb(138,247,129)">982</div><div class="cell" style="left:787px;top:430px;width:44px;background:rgb(142,242,128)">1271</div><div class="cell" style="left:833px;top:430px;width:44px;background:rgb(146,238,128)">1538</div><div class="cell" style="left:879px;top:430px;width:44px;background:rgb(149,234,127)">1762</div><div class="cell" style="left:925px;top:430px;width:44px;background:rgb(151,231,127)">1946</div><div class="cell" style="left:971px;top:430px;width:44px;background:rgb(154,228,126)">2139</div><div class="cell" style="left:1017px;top:430px;width:44px;background:rgb(158,223,126)">2433</div><div class="cell" style="left:1063px;top:430px;width:44px;background:rgb(166,214,125)">2958</div><div class="cell" style="left:1109px;top:430px;width:44px;background:rgb(173,206,123)">3471</div><div class="cell" style="left:1155px;top:430px;width:44px;background:rgb(179,198,122)">3939</div><div class="cell" style="left:1201px;top:430px;width:44px;background:rgb(185,191,122)">4344</div><div class="cell" style="left:1247px;top:430px;width:44px;background:rgb(194,180,120)">5008</div><div class="cell" style="left:1293px;top:430px;width:44px;background:rgb(202,171,119)">5589</div><div class="cell" style="left:1339px;top:430px;width:44px;background:rgb(209,163,118)">6065</div><div class="cell" style="left:1385px;top:430px;width:44px;background:rgb(216,155,117)">6535</div><div class="cell" style="left:1431px;top:430px;width:44px;background:rgb(227,141,115)">7360</div><div class="cell" style="left:1477px;top:430px;width:44px;background:rgb(234,133,114)">7868</div><div class="cell" style="left:1523px;top:430px;width:44px;background:rgb(240,127,113)">8243</div><div class="cell" style="left:1569px;top:430px;width:44px;background:rgb(253,111,111)">9170</div><div class="cell" style="left:1615px;top:430px;width:44px;background:rgb(253,111,111)">9170</div><div class="rh" style="left:465px;top:444px;width:44px;">5750</div><div class="cell" style="left:511px;top:445px;width:44px;background:rgb(131,255,130)">496</div><div class="cell" style="left:557px;top:445px;width:44px;background:rgb(131,255,130)">496</div><div class="cell" style="left:603px;top:445px;width:44px;background:rgb(132,254,130)">555</div><div class="cell" style="left:649px;top:445px;width:44px;background:rgb(133,253,130)">615</div><div class="cell" style="left:695px;top:445px;width:44px;background:rgb(135,251,129)">758</div><div class="cell" style="left:741px;top:445px;width:44px;background:rgb(137,247,129)">946</div><div class="cell" style="left:787px;top:445px;width:44px;background:rgb(141,243,128)">1220</div><div class="cell" style="left:833px;top:445px;width:44px;background:rgb(145,239,128)">1475</div><div class="cell" style="left:879px;top:445px;width:44px;background:rgb(148,235,127)">1688</div><div class="cell" style="left:925px;top:445px;width:44px;background:rgb(150,232,127)">1868</div><div class="cell" style="left:971px;top:445px;width:44px;background:rgb(153,229,127)">2057</div><div class="cell" style="left:1017px;top:445px;width:44px;background:rgb(157,224,126)">2344</div><div class="cell" style="left:1063px;top:445px;width:44px;background:rgb(164,216,125)">2858</div><div class="cell" style="left:1109px;top:445px;width:44px;background:rgb(171,208,124)">3358</div><div class="cell" style="left:1155px;top:445px;width:44px;background:rgb(178,200,123)">3808</div><div class="cell" style="left:1201px;top:445px;width:44px;background:rgb(183,194,122)">4192</div><div class="cell" style="left:1247px;top:445px;width:44px;background:rgb(192,183,121)">4823</div><div class="cell" style="left:1293px;top:445px;width:44px;background:rgb(200,174,119)">5399</div><div class="cell" style="left:1339px;top:445px;width:44px;background:rgb(207,166,118)">5891</div><div class="cell" style="left:1385px;top:445px;width:44px;background:rgb(213,158,117)">6332</div><div class="cell" style="left:1431px;top:445px;width:44px;background:rgb(226,143,115)">7257</div><div class="cell" style="left:1477px;top:445px;width:44px;background:rgb(233,135,114)">7761</div><div class="cell" style="left:1523px;top:445px;width:44px;background:rgb(239,128,113)">8174</div><div class="cell" style="left:1569px;top:445px;width:44px;background:rgb(251,113,111)">9042</div><div class="cell" style="left:1615px;top:445px;width:44px;background:rgb(251,113,111)">9042</div><div class="rh" style="left:465px;top:459px;width:44px;">6000</div><div class="cell" style="left:511px;top:460px;width:44px;background:rgb(131,255,130)">496</div><div class="cell" style="left:557px;top:460px;width:44px;background:rgb(131,255,130)">496</div><div class="cell" style="left:603px;top:460px;width:44px;background:rgb(132,254,130)">550</div><div class="cell" style="left:649px;top:460px;width:44px;background:rgb(133,253,130)">605</div><div class="cell" style="left:695px;top:460px;width:44px;background:rgb(135,251,129)">737</div><div class="cell" style="left:741px;top:460px;width:44px;background:rgb(137,248,129)">912</div><div class="cell" style="left:787px;top:460px;width:44px;background:rgb(141,244,129)">1170</div><div class="cell" style="left:833px;top:460px;width:44px;background:rgb(144,240,128)">1411</div><div class="cell" style="left:879px;top:460px;width:44px;background:rgb(147,236,128)">1611</div><div class="cell" style="left:925px;top:460px;width:44px;background:rgb(149,233,127)">1787</div><div class="cell" style="left:971px;top:460px;width:44px;background:rgb(152,230,127)">1969</div><div class="cell" style="left:1017px;top:460px;width:44px;background:rgb(156,226,126)">2249</div><div class="cell" style="left:1063px;top:460px;width:44px;background:rgb(163,218,125)">2747</div><div class="cell" style="left:1109px;top:460px;width:44px;background:rgb(169,210,124)">3230</div><div class="cell" style="left:1155px;top:460px;width:44px;background:rgb(175,203,123)">3659</div><div class="cell" style="left:1201px;top:460px;width:44px;background:rgb(181,197,122)">4020</div><div class="cell" style="left:1247px;top:460px;width:44px;background:rgb(189,187,121)">4613</div><div class="cell" style="left:1293px;top:460px;width:44px;background:rgb(197,177,120)">5182</div><div class="cell" style="left:1339px;top:460px;width:44px;background:rgb(204,169,119)">5684</div><div class="cell" style="left:1385px;top:460px;width:44px;background:rgb(211,160,117)">6219</div><div class="cell" style="left:1431px;top:460px;width:44px;background:rgb(224,145,116)">7108</div><div class="cell" style="left:1477px;top:460px;width:44px;background:rgb(232,136,114)">7702</div><div class="cell" style="left:1523px;top:460px;width:44px;background:rgb(238,128,113)">8143</div><div class="cell" style="left:1569px;top:460px;width:44px;background:rgb(250,114,111)">8988</div><div class="cell" style="left:1615px;top:460px;width:44px;background:rgb(250,114,111)">8988</div><div class="rh" style="left:465px;top:474px;width:44px;">6250</div><div class="cell" style="left:511px;top:475px;width:44px;background:rgb(131,255,130)">491</div><div class="cell" style="left:557px;top:475px;width:44px;background:rgb(131,255,130)">491</div><div class="cell" style="left:603px;top:475px;width:44px;background:rgb(132,254,130)">540</div><div class="cell" style="left:649px;top:475px;width:44px;background:rgb(132,253,130)">590</div><div class="cell" style="left:695px;top:475px;width:44px;background:rgb(134,251,130)">712</div><div class="cell" style="left:741px;top:475px;width:44px;background:rgb(136,249,129)">875</div><div class="cell" style="left:787px;top:475px;width:44px;background:rgb(140,245,129)">1119</div><div class="cell" style="left:833px;top:475px;width:44px;background:rgb(143,241,128)">1346</div><div class="cell" style="left:879px;top:475px;width:44px;background:rgb(146,238,128)">1536</div><div class="cell" style="left:925px;top:475px;width:44px;background:rgb(148,235,127)">1707</div><div class="cell" style="left:971px;top:475px;width:44px;background:rgb(151,232,127)">1884</div><div class="cell" style="left:1017px;top:475px;width:44px;background:rgb(154,227,126)">2157</div><div class="cell" style="left:1063px;top:475px;width:44px;background:rgb(161,219,125)">2642</div><div class="cell" style="left:1109px;top:475px;width:44px;background:rgb(168,212,124)">3110</div><div class="cell" style="left:1155px;top:475px;width:44px;background:rgb(174,205,123)">3520</div><div class="cell" style="left:1201px;top:475px;width:44px;background:rgb(178,199,123)">3860</div><div class="cell" style="left:1247px;top:475px;width:44px;background:rgb(186,190,121)">4418</div><div class="cell" style="left:1293px;top:475px;width:44px;background:rgb(194,181,120)">4982</div><div class="cell" style="left:1339px;top:475px;width:44px;background:rgb(201,172,119)">5495</div><div class="cell" style="left:1385px;top:475px;width:44px;background:rgb(209,163,118)">6044</div><div class="cell" style="left:1431px;top:475px;width:44px;background:rgb(222,148,116)">6979</div><div class="cell" style="left:1477px;top:475px;width:44px;background:rgb(232,136,114)">7667</div><div class="cell" style="left:1523px;top:475px;width:44px;background:rgb(238,128,113)">8155</div><div class="cell" style="left:1569px;top:475px;width:44px;background:rgb(251,114,111)">9018</div><div class="cell" style="left:1615px;top:475px;width:44px;background:rgb(251,114,111)">9018</div><div class="rh" style="left:465px;top:489px;width:44px;">6500</div><div class="cell" style="left:511px;top:490px;width:44px;background:rgb(131,255,130)">491</div><div class="cell" style="left:557px;top:490px;width:44px;background:rgb(131,255,130)">491</div><div class="cell" style="left:603px;top:490px;width:44px;background:rgb(132,254,130)">536</div><div class="cell" style="left:649px;top:490px;width:44px;background:rgb(132,253,130)">581</div><div class="cell" style="left:695px;top:490px;width:44px;background:rgb(134,252,130)">693</div><div class="cell" style="left:741px;top:490px;width:44px;background:rgb(136,249,129)">846</div><div class="cell" style="left:787px;top:490px;width:44px;background:rgb(139,245,129)">1076</div><div class="cell" style="left:833px;top:490px;width:44px;background:rgb(142,242,128)">1292</div><div class="cell" style="left:879px;top:490px;width:44px;background:rgb(145,239,128)">1471</div><div class="cell" style="left:925px;top:490px;width:44px;background:rgb(147,236,127)">1638</div><div class="cell" style="left:971px;top:490px;width:44px;background:rgb(150,233,127)">1811</div><div class="cell" style="left:1017px;top:490px;width:44px;background:rgb(153,229,127)">2078</div><div class="cell" style="left:1063px;top:490px;width:44px;background:rgb(160,221,125)">2552</div><div class="cell" style="left:1109px;top:490px;width:44px;background:rgb(166,213,125)">3007</div><div class="cell" style="left:1155px;top:490px;width:44px;background:rgb(172,207,124)">3400</div><div class="cell" style="left:1201px;top:490px;width:44px;background:rgb(176,201,123)">3722</div><div class="cell" style="left:1247px;top:490px;width:44px;background:rgb(184,193,122)">4248</div><div class="cell" style="left:1293px;top:490px;width:44px;background:rgb(192,184,121)">4808</div><div class="cell" style="left:1339px;top:490px;width:44px;background:rgb(199,175,119)">5334</div><div class="cell" style="left:1385px;top:490px;width:44px;background:rgb(206,166,118)">5839</div><div class="cell" style="left:1431px;top:490px;width:44px;background:rgb(221,149,116)">6880</div><div class="cell" style="left:1477px;top:490px;width:44px;background:rgb(231,137,114)">7623</div><div class="cell" style="left:1523px;top:490px;width:44px;background:rgb(239,127,113)">8227</div><div class="cell" style="left:1569px;top:490px;width:44px;background:rgb(253,111,111)">9193</div><div class="cell" style="left:1615px;top:490px;width:44px;background:rgb(253,111,111)">9193</div><div class="rh" style="left:465px;top:504px;width:44px;">6750</div><div class="cell" style="left:511px;top:505px;width:44px;background:rgb(131,255,130)">491</div><div class="cell" style="left:557px;top:505px;width:44px;background:rgb(131,255,130)">491</div><div class="cell" style="left:603px;top:505px;width:44px;background:rgb(132,254,130)">531</div><div class="cell" style="left:649px;top:505px;width:44px;background:rgb(132,254,130)">572</div><div class="cell" style="left:695px;top:505px;width:44px;background:rgb(134,252,130)">674</div><div class="cell" style="left:741px;top:505px;width:44px;background:rgb(136,250,129)">816</div><div class="cell" style="left:787px;top:505px;width:44px;background:rgb(139,246,129)">1031</div><div class="cell" style="left:833px;top:505px;width:44px;background:rgb(141,243,128)">1235</div><div class="cell" style="left:879px;top:505px;width:44px;background:rgb(144,240,128)">1403</div><div class="cell" style="left:925px;top:505px;width:44px;background:rgb(146,237,128)">1565</div><div class="cell" style="left:971px;top:505px;width:44px;background:rgb(148,234,127)">1733</div><div class="cell" style="left:1017px;top:505px;width:44px;background:rgb(152,230,127)">1992</div><div class="cell" style="left:1063px;top:505px;width:44px;background:rgb(159,222,126)">2452</div><div class="cell" style="left:1109px;top:505px;width:44px;background:rgb(165,215,125)">2892</div><div class="cell" style="left:1155px;top:505px;width:44px;background:rgb(170,209,124)">3267</div><div class="cell" style="left:1201px;top:505px;width:44px;background:rgb(174,204,123)">3568</div><div class="cell" style="left:1247px;top:505px;width:44px;background:rgb(181,196,122)">4060</div><div class="cell" style="left:1293px;top:505px;width:44px;background:rgb(189,187,121)">4613</div><div class="cell" style="left:1339px;top:505px;width:44px;background:rgb(196,178,120)">5149</div><div class="cell" style="left:1385px;top:505px;width:44px;background:rgb(203,169,119)">5659</div><div class="cell" style="left:1431px;top:505px;width:44px;background:rgb(219,151,116)">6745</div><div class="cell" style="left:1477px;top:505px;width:44px;background:rgb(230,138,115)">7554</div><div class="cell" style="left:1523px;top:505px;width:44px;background:rgb(239,127,113)">8205</div><div class="cell" style="left:1569px;top:505px;width:44px;background:rgb(252,112,111)">9150</div><div class="cell" style="left:1615px;top:505px;width:44px;background:rgb(252,112,111)">9150</div><div class="rh" style="left:465px;top:519px;width:44px;">7000</div><div class="cell" style="left:511px;top:520px;width:44px;background:rgb(131,255,130)">491</div><div class="cell" style="left:557px;top:520px;width:44px;background:rgb(131,255,130)">491</div><div class="cell" style="left:603px;top:520px;width:44px;background:rgb(132,254,130)">527</div><div class="cell" style="left:649px;top:520px;width:44px;background:rgb(132,254,130)">563</div><div class="cell" style="left:695px;top:520px;width:44px;background:rgb(133,252,130)">655</div><div class="cell" style="left:741px;top:520px;width:44px;background:rgb(135,250,129)">785</div><div class="cell" style="left:787px;top:520px;width:44px;background:rgb(138,247,129)">984</div><div class="cell" style="left:833px;top:520px;width:44px;background:rgb(141,244,128)">1175</div><div class="cell" style="left:879px;top:520px;width:44px;background:rgb(143,241,128)">1332</div><div class="cell" style="left:925px;top:520px;width:44px;background:rgb(145,238,128)">1489</div><div class="cell" style="left:971px;top:520px;width:44px;background:rgb(147,236,127)">1650</div><div class="cell" style="left:1017px;top:520px;width:44px;background:rgb(151,232,127)">1901</div><div class="cell" style="left:1063px;top:520px;width:44px;background:rgb(157,224,126)">2345</div><div class="cell" style="left:1109px;top:520px;width:44px;background:rgb(163,217,125)">2768</div><div class="cell" style="left:1155px;top:520px;width:44px;background:rgb(168,211,124)">3122</div><div class="cell" style="left:1201px;top:520px;width:44px;background:rgb(172,207,124)">3402</div><div class="cell" style="left:1247px;top:520px;width:44px;background:rgb(178,199,123)">3859</div><div class="cell" style="left:1293px;top:520px;width:44px;background:rgb(186,190,121)">4401</div><div class="cell" style="left:1339px;top:520px;width:44px;background:rgb(193,181,120)">4942</div><div class="cell" style="left:1385px;top:520px;width:44px;background:rgb(201,172,119)">5490</div><div class="cell" style="left:1431px;top:520px;width:44px;background:rgb(216,154,117)">6576</div><div class="cell" style="left:1477px;top:520px;width:44px;background:rgb(228,141,115)">7392</div><div class="cell" style="left:1523px;top:520px;width:44px;background:rgb(237,130,113)">8066</div><div class="cell" style="left:1569px;top:520px;width:44px;background:rgb(250,114,111)">8989</div><div class="cell" style="left:1615px;top:520px;width:44px;background:rgb(250,114,111)">8989</div><div class="rh" style="left:465px;top:534px;width:44px;">7250</div><div class="cell" style="left:511px;top:535px;width:44px;background:rgb(131,255,130)">491</div><div class="cell" style="left:557px;top:535px;width:44px;background:rgb(131,255,130)">491</div><div class="cell" style="left:603px;top:535px;width:44px;background:rgb(131,254,130)">522</div><div class="cell" style="left:649px;top:535px;width:44px;background:rgb(132,254,130)">554</div><div class="cell" style="left:695px;top:535px;width:44px;background:rgb(133,253,130)">636</div><div class="cell" style="left:741px;top:535px;width:44px;background:rgb(135,251,129)">755</div><div class="cell" style="left:787px;top:535px;width:44px;background:rgb(137,248,129)">939</div><div class="cell" style="left:833px;top:535px;width:44px;background:rgb(140,245,129)">1117</div><div class="cell" style="left:879px;top:535px;width:44px;background:rgb(142,242,128)">1262</div><div class="cell" style="left:925px;top:535px;width:44px;background:rgb(144,240,128)">1414</div><div class="cell" style="left:971px;top:535px;width:44px;background:rgb(146,237,128)">1568</div><div class="cell" style="left:1017px;top:535px;width:44px;background:rgb(150,233,127)">1810</div><div class="cell" style="left:1063px;top:535px;width:44px;background:rgb(156,226,126)">2238</div><div class="cell" style="left:1109px;top:535px;width:44px;background:rgb(161,219,125)">2643</div><div class="cell" style="left:1155px;top:535px;width:44px;background:rgb(166,214,125)">2977</div><div class="cell" style="left:1201px;top:535px;width:44px;background:rgb(170,210,124)">3236</div><div class="cell" style="left:1247px;top:535px;width:44px;background:rgb(175,203,123)">3658</div><div class="cell" style="left:1293px;top:535px;width:44px;background:rgb(183,194,122)">4189</div><div class="cell" style="left:1339px;top:535px;width:44px;background:rgb(191,185,121)">4733</div><div class="cell" style="left:1385px;top:535px;width:44px;background:rgb(199,175,119)">5347</div><div class="cell" style="left:1431px;top:535px;width:44px;background:rgb(214,157,117)">6398</div><div class="cell" style="left:1477px;top:535px;width:44px;background:rgb(225,144,115)">7191</div><div class="cell" style="left:1523px;top:535px;width:44px;background:rgb(234,133,114)">7843</div><div class="cell" style="left:1569px;top:535px;width:44px;background:rgb(247,119,112)">8734</div><div class="cell" style="left:1615px;top:535px;width:44px;background:rgb(247,119,112)">8734</div><div class="rh" style="left:465px;top:549px;width:44px;">7500</div><div class="cell" style="left:511px;top:550px;width:44px;background:rgb(131,255,130)">487</div><div class="cell" style="left:557px;top:550px;width:44px;background:rgb(131,255,130)">487</div><div class="cell" style="left:603px;top:550px;width:44px;background:rgb(131,255,130)">514</div><div class="cell" style="left:649px;top:550px;width:44px;background:rgb(132,254,130)">542</div><div class="cell" style="left:695px;top:550px;width:44px;background:rgb(133,253,130)">615</div><div class="cell" style="left:741px;top:550px;width:44px;background:rgb(134,251,129)">724</div><div class="cell" style="left:787px;top:550px;width:44px;background:rgb(137,248,129)">895</div><div class="cell" style="left:833px;top:550px;width:44px;background:rgb(139,245,129)">1062</div><div class="cell" style="left:879px;top:550px;width:44px;background:rgb(141,243,128)">1197</div><div class="cell" style="left:925px;top:550px;width:44px;background:rgb(143,241,128)">1345</div><div class="cell" style="left:971px;top:550px;width:44px;background:rgb(145,238,128)">1494</div><div class="cell" style="left:1017px;top:550px;width:44px;background:rgb(148,234,127)">1730</div><div class="cell" style="left:1063px;top:550px;width:44px;background:rgb(154,228,126)">2145</div><div class="cell" style="left:1109px;top:550px;width:44px;background:rgb(160,221,126)">2536</div><div class="cell" style="left:1155px;top:550px;width:44px;background:rgb(164,216,125)">2854</div><div class="cell" style="left:1201px;top:550px;width:44px;background:rgb(168,212,124)">3094</div><div class="cell" style="left:1247px;top:550px;width:44px;background:rgb(173,205,123)">3486</div><div class="cell" style="left:1293px;top:550px;width:44px;background:rgb(180,197,122)">4010</div><div class="cell" style="left:1339px;top:550px;width:44px;background:rgb(188,188,121)">4561</div><div class="cell" style="left:1385px;top:550px;width:44px;background:rgb(196,178,120)">5151</div><div class="cell" style="left:1431px;top:550px;width:44px;background:rgb(212,159,117)">6267</div><div class="cell" style="left:1477px;top:550px;width:44px;background:rgb(223,146,116)">7064</div><div class="cell" style="left:1523px;top:550px;width:44px;background:rgb(235,133,114)">7880</div><div class="cell" style="left:1569px;top:550px;width:44px;background:rgb(246,120,112)">8664</div><div class="cell" style="left:1615px;top:550px;width:44px;background:rgb(246,120,112)">8664</div><div class="rh" style="left:465px;top:564px;width:44px;">7750</div><div class="cell" style="left:511px;top:565px;width:44px;background:rgb(131,255,130)">487</div><div class="cell" style="left:557px;top:565px;width:44px;background:rgb(131,255,130)">487</div><div class="cell" style="left:603px;top:565px;width:44px;background:rgb(131,255,130)">510</div><div class="cell" style="left:649px;top:565px;width:44px;background:rgb(132,254,130)">534</div><div class="cell" style="left:695px;top:565px;width:44px;background:rgb(133,253,130)">598</div><div class="cell" style="left:741px;top:565px;width:44px;background:rgb(134,252,130)">697</div><div class="cell" style="left:787px;top:565px;width:44px;background:rgb(136,249,129)">855</div><div class="cell" style="left:833px;top:565px;width:44px;background:rgb(138,246,129)">1010</div><div class="cell" style="left:879px;top:565px;width:44px;background:rgb(140,244,129)">1136</div><div class="cell" style="left:925px;top:565px;width:44px;background:rgb(142,242,128)">1278</div><div class="cell" style="left:971px;top:565px;width:44px;background:rgb(144,240,128)">1422</div><div class="cell" style="left:1017px;top:565px;width:44px;background:rgb(147,236,127)">1650</div><div class="cell" style="left:1063px;top:565px;width:44px;background:rgb(153,229,127)">2051</div><div class="cell" style="left:1109px;top:565px;width:44px;background:rgb(158,223,126)">2426</div><div class="cell" style="left:1155px;top:565px;width:44px;background:rgb(162,218,125)">2726</div><div class="cell" style="left:1201px;top:565px;width:44px;background:rgb(165,214,125)">2948</div><div class="cell" style="left:1247px;top:565px;width:44px;background:rgb(171,208,124)">3309</div><div class="cell" style="left:1293px;top:565px;width:44px;background:rgb(178,200,123)">3824</div><div class="cell" style="left:1339px;top:565px;width:44px;background:rgb(186,191,122)">4379</div><div class="cell" style="left:1385px;top:565px;width:44px;background:rgb(194,181,120)">4967</div><div class="cell" style="left:1431px;top:565px;width:44px;background:rgb(210,162,118)">6114</div><div class="cell" style="left:1477px;top:565px;width:44px;background:rgb(221,149,116)">6907</div><div class="cell" style="left:1523px;top:565px;width:44px;background:rgb(235,133,114)">7874</div><div class="cell" style="left:1569px;top:565px;width:44px;background:rgb(244,122,112)">8542</div><div class="cell" style="left:1615px;top:565px;width:44px;background:rgb(244,122,112)">8542</div><div class="rh" style="left:465px;top:579px;width:44px;">8000</div><div class="cell" style="left:511px;top:580px;width:44px;background:rgb(131,255,130)">487</div><div class="cell" style="left:557px;top:580px;width:44px;background:rgb(131,255,130)">487</div><div class="cell" style="left:603px;top:580px;width:44px;background:rgb(131,255,130)">507</div><div class="cell" style="left:649px;top:580px;width:44px;background:rgb(132,254,130)">526</div><div class="cell" style="left:695px;top:580px;width:44px;background:rgb(132,253,130)">583</div><div class="cell" style="left:741px;top:580px;width:44px;background:rgb(134,252,130)">672</div><div class="cell" style="left:787px;top:580px;width:44px;background:rgb(136,250,129)">819</div><div class="cell" style="left:833px;top:580px;width:44px;background:rgb(138,247,129)">964</div><div class="cell" style="left:879px;top:580px;width:44px;background:rgb(139,245,129)">1080</div><div class="cell" style="left:925px;top:580px;width:44px;background:rgb(141,243,128)">1219</div><div class="cell" style="left:971px;top:580px;width:44px;background:rgb(143,241,128)">1358</div><div class="cell" style="left:1017px;top:580px;width:44px;background:rgb(146,237,128)">1580</div><div class="cell" style="left:1063px;top:580px;width:44px;background:rgb(152,230,127)">1969</div><div class="cell" style="left:1109px;top:580px;width:44px;background:rgb(157,224,126)">2332</div><div class="cell" style="left:1155px;top:580px;width:44px;background:rgb(161,220,125)">2617</div><div class="cell" style="left:1201px;top:580px;width:44px;background:rgb(164,216,125)">2821</div><div class="cell" style="left:1247px;top:580px;width:44px;background:rgb(168,211,124)">3155</div><div class="cell" style="left:1293px;top:580px;width:44px;background:rgb(176,202,123)">3664</div><div class="cell" style="left:1339px;top:580px;width:44px;background:rgb(183,193,122)">4224</div><div class="cell" style="left:1385px;top:580px;width:44px;background:rgb(192,183,121)">4810</div><div class="cell" style="left:1431px;top:580px;width:44px;background:rgb(208,164,118)">5997</div><div class="cell" style="left:1477px;top:580px;width:44px;background:rgb(220,150,116)">6819</div><div class="cell" style="left:1523px;top:580px;width:44px;background:rgb(233,134,114)">7801</div><div class="cell" style="left:1569px;top:580px;width:44px;background:rgb(242,123,113)">8442</div><div class="cell" style="left:1615px;top:580px;width:44px;background:rgb(242,123,113)">8442</div><div class="rh" style="left:465px;top:594px;width:44px;">8300</div><div class="cell" style="left:511px;top:595px;width:44px;background:rgb(131,255,130)">487</div><div class="cell" style="left:557px;top:595px;width:44px;background:rgb(131,255,130)">487</div><div class="cell" style="left:603px;top:595px;width:44px;background:rgb(131,255,130)">504</div><div class="cell" style="left:649px;top:595px;width:44px;background:rgb(131,254,130)">520</div><div class="cell" style="left:695px;top:595px;width:44px;background:rgb(132,254,130)">570</div><div class="cell" style="left:741px;top:595px;width:44px;background:rgb(133,252,130)">652</div><div class="cell" style="left:787px;top:595px;width:44px;background:rgb(135,250,129)">790</div><div class="cell" style="left:833px;top:595px;width:44px;background:rgb(137,248,129)">928</div><div class="cell" style="left:879px;top:595px;width:44px;background:rgb(139,246,129)">1038</div><div class="cell" style="left:925px;top:595px;width:44px;background:rgb(141,244,128)">1176</div><div class="cell" style="left:971px;top:595px;width:44px;background:rgb(143,241,128)">1314</div><div class="cell" style="left:1017px;top:595px;width:44px;background:rgb(146,238,128)">1534</div><div class="cell" style="left:1063px;top:595px;width:44px;background:rgb(151,231,127)">1920</div><div class="cell" style="left:1109px;top:595px;width:44px;background:rgb(156,225,126)">2278</div><div class="cell" style="left:1155px;top:595px;width:44px;background:rgb(160,221,125)">2553</div><div class="cell" style="left:1201px;top:595px;width:44px;background:rgb(163,218,125)">2746</div><div class="cell" style="left:1247px;top:595px;width:44px;background:rgb(167,212,124)">3060</div><div class="cell" style="left:1293px;top:595px;width:44px;background:rgb(174,204,123)">3573</div><div class="cell" style="left:1339px;top:595px;width:44px;background:rgb(182,194,122)">4151</div><div class="cell" style="left:1385px;top:595px;width:44px;background:rgb(192,183,121)">4810</div><div class="cell" style="left:1431px;top:595px;width:44px;background:rgb(208,164,118)">5997</div><div class="cell" style="left:1477px;top:595px;width:44px;background:rgb(220,150,116)">6819</div><div class="cell" style="left:1523px;top:595px;width:44px;background:rgb(233,134,114)">7801</div><div class="cell" style="left:1569px;top:595px;width:44px;background:rgb(242,123,113)">8442</div><div class="cell" style="left:1615px;top:595px;width:44px;background:rgb(242,123,113)">8442</div><div class="a" style="left:510px;top:84px;width:46px;height:15px;border:1.5px solid #111"></div><div class="a" style="left:462px;top:640px;width:1226px;height:24px;background:#f0f0f0;border-top:1px solid #fff"></div><svg class="a" style="left:1676px;top:652px" width="10" height="10"><g fill="#a0a0a0"><rect x="7" y="1" width="2" height="2"/><rect x="4" y="4" width="2" height="2"/><rect x="7" y="4" width="2" height="2"/><rect x="1" y="7" width="2" height="2"/><rect x="4" y="7" width="2" height="2"/><rect x="7" y="7" width="2" height="2"/></g></svg><div class="a" style="left:555px;top:285px;width:864px;height:588px;border-radius:8px;box-shadow:0 8px 32px rgba(0,0,0,0.42),0 0 8px rgba(0,0,0,0.2);background:#fff;overflow:hidden"><div class="a" style="left:0;top:0;width:864px;height:30px;background:#eaf3f7"></div><svg class="a" style="left:8px;top:9px" width="17" height="13"><rect x="0" y="2" width="17" height="9" fill="#000"/><rect x="1" y="0" width="1.5" height="13" fill="#000"/><rect x="4" y="0" width="1.5" height="13" fill="#000"/><rect x="7" y="0" width="1.5" height="13" fill="#000"/><rect x="10" y="0" width="1.5" height="13" fill="#000"/><rect x="13" y="0" width="1.5" height="13" fill="#000"/><rect x="16" y="0" width="1.5" height="13" fill="#000"/></svg><div class="t" style="left:29px;top:9px;font-size:11px">Fuel :: TPS : Cyl 2</div><svg class="a" style="left:740px;top:5px" width="110" height="18"><path d="M5 9.5h10" stroke="#000" stroke-width="1"/><rect x="50.5" y="4.5" width="9" height="9" rx="1" fill="none" stroke="#000" stroke-width="1"/><path d="M95.5 4.5l10 10M105.5 4.5l-10 10" stroke="#000" stroke-width="1.2"/></svg><div class="t" style="left:7px;top:33px">Graph</div><div class="t" style="left:53px;top:33px">View</div><div class="a" style="left:0;top:48px;width:864px;height:27px;background:#f0f0f0"></div><svg class="a" style="left:3px;top:52px" width="4" height="22"><path d="M1.5 0v20.5h2" stroke="#a0a0a0" fill="none"/></svg><svg class="a" style="left:14px;top:57px" width="12" height="14"><path d="M1.2 1.2L10.8 12.8M10.8 1.2L1.2 12.8" stroke="#f00" stroke-width="2"/></svg><svg class="a" style="left:40px;top:52px" width="4" height="22"><path d="M1.5 0v20.5h2" stroke="#a0a0a0" fill="none"/></svg><div class="a" style="left:46px;top:52px;width:23px;height:21px;background:#cce4f7;border:1px solid #b4d8f4;border-radius:2px"></div><div class="a" style="left:92px;top:52px;width:23px;height:21px;background:#cce4f7;border:1px solid #b4d8f4;border-radius:2px"></div><div class="a" style="left:138px;top:52px;width:23px;height:21px;background:#cce4f7;border:1px solid #b4d8f4;border-radius:2px"></div><svg class="a" style="left:50px;top:55px" width="16" height="16"><path d="M8 0.5L15.5 8 8 15.5 0.5 8z" fill="#000"/><rect x="4" y="4" width="8" height="8" fill="#fff"/><path d="M8 4v8M4 8h8" stroke="#e00" stroke-width="1.3"/><path d="M4.5 4.5h7v7h-7z" fill="none" stroke="#e00" stroke-width="0.7"/></svg><svg class="a" style="left:71px;top:55px" width="18" height="16"><path d="M1 14l3-6 3 3 3-5 3 2 2-5" stroke="#f00" fill="none" stroke-width="1"/><path d="M3 5l4 7 5-6 5-5" stroke="#00f" fill="none" stroke-width="1"/><g fill="none" stroke="#00f" stroke-width="1.2"><circle cx="3.5" cy="5" r="1.6"/><circle cx="7" cy="12" r="1.6"/><circle cx="10.5" cy="6" r="1.6"/><circle cx="14.5" cy="1.8" r="1.4"/><circle cx="15" cy="11" r="1.4"/></g></svg><svg class="a" style="left:97px;top:55px" width="18" height="16"><path d="M1.5 1v13.5h14" stroke="#000" fill="none" stroke-dasharray="1 1"/><path d="M2 13l3-4 3 2 4-3 3-2" stroke="#f00" fill="none" stroke-width="1.6"/><path d="M2 10l3-4 3 2 3-5 4 5" stroke="#00f" fill="none" stroke-width="1.3"/></svg><svg class="a" style="left:118px;top:55px" width="17" height="14"><path d="M1 12.5h12l3-6H6z" fill="#fff" stroke="#000" stroke-width="1.3"/><path d="M6 6.5l3-5h7l-2 5" fill="#fff" stroke="#000" stroke-width="1.3"/><path d="M3.5 9.5h11" stroke="#000"/></svg><svg class="a" style="left:142px;top:55px" width="18" height="16"><path d="M1 3.5h12" stroke="#f00" stroke-width="1.2"/><path d="M1 6h12" stroke="#a0a0a0" stroke-width="1.2"/><path d="M1 8.5h12" stroke="#ff0" stroke-width="1.4"/><path d="M1 10.5h12" stroke="#0c0" stroke-width="1.2"/><path d="M1 12.5h12" stroke="#00f" stroke-width="1.2"/><path d="M15.5 0.5v14" stroke="#000" stroke-width="1.6"/><path d="M15 1l-3 6.5 3 6.5" stroke="#000" fill="none" stroke-width="1"/></svg><div class="a" style="left:0;top:565px;width:864px;height:23px;background:#f0f0f0;border-top:1px solid #d8d8d8"></div><div class="a" style="left:129px;top:567px;width:1px;height:21px;background:#d4d4d4"></div><div class="a" style="left:259px;top:567px;width:1px;height:21px;background:#d4d4d4"></div><div class="a" style="left:389px;top:567px;width:1px;height:21px;background:#d4d4d4"></div><svg class="a" style="left:852px;top:576px" width="10" height="10"><g fill="#a0a0a0"><rect x="7" y="1" width="2" height="2"/><rect x="4" y="4" width="2" height="2"/><rect x="7" y="4" width="2" height="2"/><rect x="1" y="7" width="2" height="2"/><rect x="4" y="7" width="2" height="2"/><rect x="7" y="7" width="2" height="2"/></g></svg><svg class="a" style="left:0px;top:75px" width="864" height="490" viewBox="555 360 864 490"><text x="987" y="370" font-size="9.5" fill="#c4c4c4" text-anchor="middle">TunerPro - Version 5.00</text><text x="987" y="390" font-size="14.5" font-weight="bold" fill="#000" text-anchor="middle">Fuel :: TPS : Cyl 2</text><line x1="797.5" y1="707.0" x2="921.5" y2="619.8" stroke="#a8a8a8" stroke-width="1" stroke-dasharray="3 3"/><line x1="1176.0" y1="662.8" x2="921.5" y2="619.8" stroke="#a8a8a8" stroke-width="1" stroke-dasharray="3 3"/><line x1="797.5" y1="654.0" x2="921.5" y2="566.8" stroke="#a8a8a8" stroke-width="1" stroke-dasharray="3 3"/><line x1="1176.0" y1="609.8" x2="921.5" y2="566.8" stroke="#a8a8a8" stroke-width="1" stroke-dasharray="3 3"/><line x1="797.5" y1="601.0" x2="921.5" y2="513.8" stroke="#a8a8a8" stroke-width="1" stroke-dasharray="3 3"/><line x1="1176.0" y1="556.8" x2="921.5" y2="513.8" stroke="#a8a8a8" stroke-width="1" stroke-dasharray="3 3"/><line x1="797.5" y1="548.0" x2="921.5" y2="460.8" stroke="#a8a8a8" stroke-width="1" stroke-dasharray="3 3"/><line x1="1176.0" y1="503.8" x2="921.5" y2="460.8" stroke="#a8a8a8" stroke-width="1" stroke-dasharray="3 3"/><line x1="1052.0" y1="803.0" x2="1176.0" y2="715.8" stroke="#a8a8a8" stroke-width="1" stroke-dasharray="3 3"/><line x1="1045.2" y1="801.9" x2="1169.2" y2="714.7" stroke="#a8a8a8" stroke-width="1" stroke-dasharray="3 3"/><line x1="1041.8" y1="801.3" x2="1165.8" y2="714.1" stroke="#a8a8a8" stroke-width="1" stroke-dasharray="3 3"/><line x1="1038.4" y1="800.7" x2="1162.4" y2="713.5" stroke="#a8a8a8" stroke-width="1" stroke-dasharray="3 3"/><line x1="1035.0" y1="800.1" x2="1159.0" y2="712.9" stroke="#a8a8a8" stroke-width="1" stroke-dasharray="3 3"/><line x1="1031.6" y1="799.6" x2="1155.6" y2="712.4" stroke="#a8a8a8" stroke-width="1" stroke-dasharray="3 3"/><line x1="1028.2" y1="799.0" x2="1152.2" y2="711.8" stroke="#a8a8a8" stroke-width="1" stroke-dasharray="3 3"/><line x1="1024.9" y1="798.4" x2="1148.9" y2="711.2" stroke="#a8a8a8" stroke-width="1" stroke-dasharray="3 3"/><line x1="1018.1" y1="797.3" x2="1142.1" y2="710.1" stroke="#a8a8a8" stroke-width="1" stroke-dasharray="3 3"/><line x1="1011.3" y1="796.1" x2="1135.3" y2="708.9" stroke="#a8a8a8" stroke-width="1" stroke-dasharray="3 3"/><line x1="1002.8" y1="794.7" x2="1126.8" y2="707.5" stroke="#a8a8a8" stroke-width="1" stroke-dasharray="3 3"/><line x1="994.3" y1="793.3" x2="1118.3" y2="706.1" stroke="#a8a8a8" stroke-width="1" stroke-dasharray="3 3"/><line x1="985.8" y1="791.8" x2="1109.8" y2="704.6" stroke="#a8a8a8" stroke-width="1" stroke-dasharray="3 3"/><line x1="977.3" y1="790.4" x2="1101.3" y2="703.2" stroke="#a8a8a8" stroke-width="1" stroke-dasharray="3 3"/><line x1="968.9" y1="789.0" x2="1092.9" y2="701.8" stroke="#a8a8a8" stroke-width="1" stroke-dasharray="3 3"/><line x1="960.4" y1="787.5" x2="1084.4" y2="700.3" stroke="#a8a8a8" stroke-width="1" stroke-dasharray="3 3"/><line x1="951.9" y1="786.1" x2="1075.9" y2="698.9" stroke="#a8a8a8" stroke-width="1" stroke-dasharray="3 3"/><line x1="943.4" y1="784.7" x2="1067.4" y2="697.5" stroke="#a8a8a8" stroke-width="1" stroke-dasharray="3 3"/><line x1="934.9" y1="783.2" x2="1058.9" y2="696.0" stroke="#a8a8a8" stroke-width="1" stroke-dasharray="3 3"/><line x1="926.4" y1="781.8" x2="1050.4" y2="694.6" stroke="#a8a8a8" stroke-width="1" stroke-dasharray="3 3"/><line x1="918.0" y1="780.4" x2="1042.0" y2="693.2" stroke="#a8a8a8" stroke-width="1" stroke-dasharray="3 3"/><line x1="909.5" y1="778.9" x2="1033.5" y2="691.7" stroke="#a8a8a8" stroke-width="1" stroke-dasharray="3 3"/><line x1="901.0" y1="777.5" x2="1025.0" y2="690.3" stroke="#a8a8a8" stroke-width="1" stroke-dasharray="3 3"/><line x1="892.5" y1="776.1" x2="1016.5" y2="688.9" stroke="#a8a8a8" stroke-width="1" stroke-dasharray="3 3"/><line x1="884.0" y1="774.6" x2="1008.0" y2="687.4" stroke="#a8a8a8" stroke-width="1" stroke-dasharray="3 3"/><line x1="875.5" y1="773.2" x2="999.5" y2="686.0" stroke="#a8a8a8" stroke-width="1" stroke-dasharray="3 3"/><line x1="867.1" y1="771.8" x2="991.1" y2="684.6" stroke="#a8a8a8" stroke-width="1" stroke-dasharray="3 3"/><line x1="858.6" y1="770.3" x2="982.6" y2="683.1" stroke="#a8a8a8" stroke-width="1" stroke-dasharray="3 3"/><line x1="850.1" y1="768.9" x2="974.1" y2="681.7" stroke="#a8a8a8" stroke-width="1" stroke-dasharray="3 3"/><line x1="841.6" y1="767.5" x2="965.6" y2="680.3" stroke="#a8a8a8" stroke-width="1" stroke-dasharray="3 3"/><line x1="833.1" y1="766.0" x2="957.1" y2="678.8" stroke="#a8a8a8" stroke-width="1" stroke-dasharray="3 3"/><line x1="824.6" y1="764.6" x2="948.6" y2="677.4" stroke="#a8a8a8" stroke-width="1" stroke-dasharray="3 3"/><line x1="816.2" y1="763.2" x2="940.2" y2="676.0" stroke="#a8a8a8" stroke-width="1" stroke-dasharray="3 3"/><line x1="807.7" y1="761.7" x2="931.7" y2="674.5" stroke="#a8a8a8" stroke-width="1" stroke-dasharray="3 3"/><line x1="797.5" y1="760.0" x2="921.5" y2="672.8" stroke="#a8a8a8" stroke-width="1" stroke-dasharray="3 3"/><line x1="797.5" y1="760.0" x2="1052.0" y2="803.0" stroke="#a8a8a8" stroke-width="1" stroke-dasharray="3 3"/><line x1="797.6" y1="759.9" x2="1052.1" y2="802.9" stroke="#a8a8a8" stroke-width="1" stroke-dasharray="3 3"/><line x1="798.0" y1="759.7" x2="1052.5" y2="802.7" stroke="#a8a8a8" stroke-width="1" stroke-dasharray="3 3"/><line x1="798.4" y1="759.4" x2="1052.9" y2="802.4" stroke="#a8a8a8" stroke-width="1" stroke-dasharray="3 3"/><line x1="799.1" y1="758.9" x2="1053.6" y2="801.9" stroke="#a8a8a8" stroke-width="1" stroke-dasharray="3 3"/><line x1="800.0" y1="758.3" x2="1054.5" y2="801.3" stroke="#a8a8a8" stroke-width="1" stroke-dasharray="3 3"/><line x1="801.5" y1="757.2" x2="1056.0" y2="800.2" stroke="#a8a8a8" stroke-width="1" stroke-dasharray="3 3"/><line x1="803.0" y1="756.2" x2="1057.5" y2="799.2" stroke="#a8a8a8" stroke-width="1" stroke-dasharray="3 3"/><line x1="804.3" y1="755.2" x2="1058.8" y2="798.2" stroke="#a8a8a8" stroke-width="1" stroke-dasharray="3 3"/><line x1="805.8" y1="754.2" x2="1060.3" y2="797.2" stroke="#a8a8a8" stroke-width="1" stroke-dasharray="3 3"/><line x1="807.4" y1="753.0" x2="1061.9" y2="796.0" stroke="#a8a8a8" stroke-width="1" stroke-dasharray="3 3"/><line x1="810.3" y1="751.0" x2="1064.8" y2="794.0" stroke="#a8a8a8" stroke-width="1" stroke-dasharray="3 3"/><line x1="814.0" y1="748.4" x2="1068.5" y2="791.4" stroke="#a8a8a8" stroke-width="1" stroke-dasharray="3 3"/><line x1="817.7" y1="745.8" x2="1072.2" y2="788.8" stroke="#a8a8a8" stroke-width="1" stroke-dasharray="3 3"/><line x1="821.3" y1="743.3" x2="1075.8" y2="786.3" stroke="#a8a8a8" stroke-width="1" stroke-dasharray="3 3"/><line x1="825.1" y1="740.6" x2="1079.6" y2="783.6" stroke="#a8a8a8" stroke-width="1" stroke-dasharray="3 3"/><line x1="832.6" y1="735.3" x2="1087.1" y2="778.3" stroke="#a8a8a8" stroke-width="1" stroke-dasharray="3 3"/><line x1="839.9" y1="730.2" x2="1094.4" y2="773.2" stroke="#a8a8a8" stroke-width="1" stroke-dasharray="3 3"/><line x1="847.3" y1="725.0" x2="1101.8" y2="768.0" stroke="#a8a8a8" stroke-width="1" stroke-dasharray="3 3"/><line x1="854.7" y1="719.8" x2="1109.2" y2="762.8" stroke="#a8a8a8" stroke-width="1" stroke-dasharray="3 3"/><line x1="869.5" y1="709.4" x2="1124.0" y2="752.4" stroke="#a8a8a8" stroke-width="1" stroke-dasharray="3 3"/><line x1="884.3" y1="698.9" x2="1138.8" y2="741.9" stroke="#a8a8a8" stroke-width="1" stroke-dasharray="3 3"/><line x1="909.0" y1="681.6" x2="1163.5" y2="724.6" stroke="#a8a8a8" stroke-width="1" stroke-dasharray="3 3"/><line x1="918.7" y1="674.8" x2="1173.2" y2="717.8" stroke="#a8a8a8" stroke-width="1" stroke-dasharray="3 3"/><line x1="921.5" y1="672.8" x2="1176.0" y2="715.8" stroke="#a8a8a8" stroke-width="1" stroke-dasharray="3 3"/><line x1="797.5" y1="760.0" x2="797.5" y2="495.0" stroke="#a0a0a0" stroke-width="1"/><line x1="1176.0" y1="715.8" x2="1176.0" y2="450.8" stroke="#a0a0a0" stroke-width="1"/><line x1="797.5" y1="495.0" x2="921.5" y2="407.8" stroke="#a0a0a0" stroke-width="1"/><line x1="921.5" y1="407.8" x2="1176.0" y2="450.8" stroke="#a0a0a0" stroke-width="1"/><line x1="921.5" y1="672.8" x2="921.5" y2="407.8" stroke="#a0a0a0" stroke-width="1"/><line x1="797.5" y1="760.0" x2="1052.0" y2="803.0" stroke="#a0a0a0" stroke-width="1"/><line x1="1052.0" y1="803.0" x2="1176.0" y2="715.8" stroke="#a0a0a0" stroke-width="1"/><line x1="1176.0" y1="715.8" x2="921.5" y2="672.8" stroke="#a0a0a0" stroke-width="1"/><polygon points="928.8,434.4 918.7,432.7 921.5,430.7 931.7,432.4" fill="rgb(63,239,0)" stroke="#000" stroke-width="1" stroke-linejoin="round"/><polygon points="937.3,432.8 928.8,434.4 931.7,432.4 940.2,430.8" fill="rgb(66,239,0)" stroke="#000" stroke-width="1" stroke-linejoin="round"/><polygon points="945.8,430.5 937.3,432.8 940.2,430.8 948.6,428.5" fill="rgb(73,239,0)" stroke="#000" stroke-width="1" stroke-linejoin="round"/><polygon points="919.2,460.7 909.0,459.0 918.7,432.7 928.8,434.4" fill="rgb(43,239,0)" stroke="#000" stroke-width="1" stroke-linejoin="round"/><polygon points="954.3,429.8 945.8,430.5 948.6,428.5 957.1,427.8" fill="rgb(80,239,0)" stroke="#000" stroke-width="1" stroke-linejoin="round"/><polygon points="962.8,423.5 954.3,429.8 957.1,427.8 965.6,421.5" fill="rgb(90,239,0)" stroke="#000" stroke-width="1" stroke-linejoin="round"/><polygon points="927.7,459.9 919.2,460.7 928.8,434.4 937.3,432.8" fill="rgb(45,239,0)" stroke="#000" stroke-width="1" stroke-linejoin="round"/><polygon points="971.2,420.0 962.8,423.5 965.6,421.5 974.1,418.0" fill="rgb(103,239,0)" stroke="#000" stroke-width="1" stroke-linejoin="round"/><polygon points="936.1,461.2 927.7,459.9 937.3,432.8 945.8,430.5" fill="rgb(50,239,0)" stroke="#000" stroke-width="1" stroke-linejoin="round"/><polygon points="979.7,420.1 971.2,420.0 974.1,418.0 982.6,418.1" fill="rgb(110,239,0)" stroke="#000" stroke-width="1" stroke-linejoin="round"/><polygon points="944.6,463.7 936.1,461.2 945.8,430.5 954.3,429.8" fill="rgb(53,239,0)" stroke="#000" stroke-width="1" stroke-linejoin="round"/><polygon points="988.2,426.9 979.7,420.1 982.6,418.1 991.1,424.9" fill="rgb(106,239,0)" stroke="#000" stroke-width="1" stroke-linejoin="round"/><polygon points="953.1,458.4 944.6,463.7 954.3,429.8 962.8,423.5" fill="rgb(61,239,0)" stroke="#000" stroke-width="1" stroke-linejoin="round"/><polygon points="996.7,429.2 988.2,426.9 991.1,424.9 999.5,427.2" fill="rgb(99,239,0)" stroke="#000" stroke-width="1" stroke-linejoin="round"/><polygon points="961.6,455.6 953.1,458.4 962.8,423.5 971.2,420.0" fill="rgb(73,239,0)" stroke="#000" stroke-width="1" stroke-linejoin="round"/><polygon points="1005.2,429.0 996.7,429.2 999.5,427.2 1008.0,427.0" fill="rgb(100,239,0)" stroke="#000" stroke-width="1" stroke-linejoin="round"/><polygon points="970.1,456.3 961.6,455.6 971.2,420.0 979.7,420.1" fill="rgb(79,239,0)" stroke="#000" stroke-width="1" stroke-linejoin="round"/><polygon points="1013.7,426.6 1005.2,429.0 1008.0,427.0 1016.5,424.6" fill="rgb(106,239,0)" stroke="#000" stroke-width="1" stroke-linejoin="round"/><polygon points="978.6,459.9 970.1,456.3 979.7,420.1 988.2,426.9" fill="rgb(76,239,0)" stroke="#000" stroke-width="1" stroke-linejoin="round"/><polygon points="1022.1,433.3 1013.7,426.6 1016.5,424.6 1025.0,431.3" fill="rgb(104,239,0)" stroke="#000" stroke-width="1" stroke-linejoin="round"/><polygon points="987.0,461.7 978.6,459.9 988.2,426.9 996.7,429.2" fill="rgb(72,239,0)" stroke="#000" stroke-width="1" stroke-linejoin="round"/><polygon points="894.5,507.9 884.3,506.2 909.0,459.0 919.2,460.7" fill="rgb(0,239,9)" stroke="#000" stroke-width="1" stroke-linejoin="round"/><polygon points="1030.6,439.7 1022.1,433.3 1025.0,431.3 1033.5,437.7" fill="rgb(93,239,0)" stroke="#000" stroke-width="1" stroke-linejoin="round"/><polygon points="995.5,462.2 987.0,461.7 996.7,429.2 1005.2,429.0" fill="rgb(72,239,0)" stroke="#000" stroke-width="1" stroke-linejoin="round"/><polygon points="903.0,506.7 894.5,507.9 919.2,460.7 927.7,459.9" fill="rgb(0,239,7)" stroke="#000" stroke-width="1" stroke-linejoin="round"/><polygon points="1039.1,449.2 1030.6,439.7 1033.5,437.7 1042.0,447.2" fill="rgb(80,239,0)" stroke="#000" stroke-width="1" stroke-linejoin="round"/><polygon points="1004.0,461.6 995.5,462.2 1005.2,429.0 1013.7,426.6" fill="rgb(77,239,0)" stroke="#000" stroke-width="1" stroke-linejoin="round"/><polygon points="911.5,503.3 903.0,506.7 927.7,459.9 936.1,461.2" fill="rgb(0,239,1)" stroke="#000" stroke-width="1" stroke-linejoin="round"/><polygon points="1047.6,451.0 1039.1,449.2 1042.0,447.2 1050.4,449.0" fill="rgb(71,239,0)" stroke="#000" stroke-width="1" stroke-linejoin="round"/><polygon points="1012.5,465.9 1004.0,461.6 1013.7,426.6 1022.1,433.3" fill="rgb(76,239,0)" stroke="#000" stroke-width="1" stroke-linejoin="round"/><polygon points="920.0,500.9 911.5,503.3 936.1,461.2 944.6,463.7" fill="rgb(2,239,0)" stroke="#000" stroke-width="1" stroke-linejoin="round"/><polygon points="1056.1,452.7 1047.6,451.0 1050.4,449.0 1058.9,450.7" fill="rgb(70,239,0)" stroke="#000" stroke-width="1" stroke-linejoin="round"/><polygon points="1021.0,472.4 1012.5,465.9 1022.1,433.3 1030.6,439.7" fill="rgb(66,239,0)" stroke="#000" stroke-width="1" stroke-linejoin="round"/><polygon points="928.5,496.2 920.0,500.9 944.6,463.7 953.1,458.4" fill="rgb(10,239,0)" stroke="#000" stroke-width="1" stroke-linejoin="round"/><polygon points="1064.6,458.1 1056.1,452.7 1058.9,450.7 1067.4,456.1" fill="rgb(66,239,0)" stroke="#000" stroke-width="1" stroke-linejoin="round"/><polygon points="1029.5,479.7 1021.0,472.4 1030.6,439.7 1039.1,449.2" fill="rgb(53,239,0)" stroke="#000" stroke-width="1" stroke-linejoin="round"/><polygon points="936.9,492.7 928.5,496.2 953.1,458.4 961.6,455.6" fill="rgb(22,239,0)" stroke="#000" stroke-width="1" stroke-linejoin="round"/><polygon points="1073.0,464.1 1064.6,458.1 1067.4,456.1 1075.9,462.1" fill="rgb(57,239,0)" stroke="#000" stroke-width="1" stroke-linejoin="round"/><polygon points="1037.9,482.8 1029.5,479.7 1039.1,449.2 1047.6,451.0" fill="rgb(45,239,0)" stroke="#000" stroke-width="1" stroke-linejoin="round"/><polygon points="945.4,492.0 936.9,492.7 961.6,455.6 970.1,456.3" fill="rgb(28,239,0)" stroke="#000" stroke-width="1" stroke-linejoin="round"/><polygon points="1081.5,469.2 1073.0,464.1 1075.9,462.1 1084.4,467.2" fill="rgb(48,239,0)" stroke="#000" stroke-width="1" stroke-linejoin="round"/><polygon points="1046.4,484.4 1037.9,482.8 1047.6,451.0 1056.1,452.7" fill="rgb(44,239,0)" stroke="#000" stroke-width="1" stroke-linejoin="round"/><polygon points="953.9,492.1 945.4,492.0 970.1,456.3 978.6,459.9" fill="rgb(29,239,0)" stroke="#000" stroke-width="1" stroke-linejoin="round"/><polygon points="1090.0,469.9 1081.5,469.2 1084.4,467.2 1092.9,467.9" fill="rgb(45,239,0)" stroke="#000" stroke-width="1" stroke-linejoin="round"/><polygon points="1054.9,486.9 1046.4,484.4 1056.1,452.7 1064.6,458.1" fill="rgb(41,239,0)" stroke="#000" stroke-width="1" stroke-linejoin="round"/><polygon points="962.4,492.5 953.9,492.1 978.6,459.9 987.0,461.7" fill="rgb(29,239,0)" stroke="#000" stroke-width="1" stroke-linejoin="round"/><polygon points="1098.5,469.2 1090.0,469.9 1092.9,467.9 1101.3,467.2" fill="rgb(48,239,0)" stroke="#000" stroke-width="1" stroke-linejoin="round"/><polygon points="1063.4,494.9 1054.9,486.9 1064.6,458.1 1073.0,464.1" fill="rgb(32,239,0)" stroke="#000" stroke-width="1" stroke-linejoin="round"/><polygon points="970.9,492.1 962.4,492.5 987.0,461.7 995.5,462.2" fill="rgb(31,239,0)" stroke="#000" stroke-width="1" stroke-linejoin="round"/><polygon points="1107.0,459.7 1098.5,469.2 1101.3,467.2 1109.8,457.7" fill="rgb(62,239,0)" stroke="#000" stroke-width="1" stroke-linejoin="round"/><polygon points="1071.9,499.0 1063.4,494.9 1073.0,464.1 1081.5,469.2" fill="rgb(23,239,0)" stroke="#000" stroke-width="1" stroke-linejoin="round"/><polygon points="879.7,543.4 869.5,541.7 884.3,506.2 894.5,507.9" fill="rgb(0,239,73)" stroke="#000" stroke-width="1" stroke-linejoin="round"/><polygon points="979.4,490.3 970.9,492.1 995.5,462.2 1004.0,461.6" fill="rgb(35,239,0)" stroke="#000" stroke-width="1" stroke-linejoin="round"/><polygon points="1115.5,453.0 1107.0,459.7 1109.8,457.7 1118.3,451.0" fill="rgb(82,239,0)" stroke="#000" stroke-width="1" stroke-linejoin="round"/><polygon points="1080.4,501.3 1071.9,499.0 1081.5,469.2 1090.0,469.9" fill="rgb(20,239,0)" stroke="#000" stroke-width="1" stroke-linejoin="round"/><polygon points="888.1,541.3 879.7,543.4 894.5,507.9 903.0,506.7" fill="rgb(0,239,69)" stroke="#000" stroke-width="1" stroke-linejoin="round"/><polygon points="987.8,490.8 979.4,490.3 1004.0,461.6 1012.5,465.9" fill="rgb(37,239,0)" stroke="#000" stroke-width="1" stroke-linejoin="round"/><polygon points="1123.9,458.7 1115.5,453.0 1118.3,451.0 1126.8,456.7" fill="rgb(86,239,0)" stroke="#000" stroke-width="1" stroke-linejoin="round"/><polygon points="1088.8,499.7 1080.4,501.3 1090.0,469.9 1098.5,469.2" fill="rgb(22,239,0)" stroke="#000" stroke-width="1" stroke-linejoin="round"/><polygon points="896.6,538.0 888.1,541.3 903.0,506.7 911.5,503.3" fill="rgb(0,239,60)" stroke="#000" stroke-width="1" stroke-linejoin="round"/><polygon points="996.3,492.6 987.8,490.8 1012.5,465.9 1021.0,472.4" fill="rgb(33,239,0)" stroke="#000" stroke-width="1" stroke-linejoin="round"/><polygon points="1132.4,472.5 1123.9,458.7 1126.8,456.7 1135.3,470.5" fill="rgb(68,239,0)" stroke="#000" stroke-width="1" stroke-linejoin="round"/><polygon points="1097.3,491.9 1088.8,499.7 1098.5,469.2 1107.0,459.7" fill="rgb(36,239,0)" stroke="#000" stroke-width="1" stroke-linejoin="round"/><polygon points="905.1,535.5 896.6,538.0 911.5,503.3 920.0,500.9" fill="rgb(0,239,50)" stroke="#000" stroke-width="1" stroke-linejoin="round"/><polygon points="1004.8,501.1 996.3,492.6 1021.0,472.4 1029.5,479.7" fill="rgb(24,239,0)" stroke="#000" stroke-width="1" stroke-linejoin="round"/><polygon points="1139.2,481.5 1132.4,472.5 1135.3,470.5 1142.1,479.5" fill="rgb(47,239,0)" stroke="#000" stroke-width="1" stroke-linejoin="round"/><polygon points="1105.8,491.7 1097.3,491.9 1107.0,459.7 1115.5,453.0" fill="rgb(52,239,0)" stroke="#000" stroke-width="1" stroke-linejoin="round"/><polygon points="913.6,531.5 905.1,535.5 920.0,500.9 928.5,496.2" fill="rgb(0,239,39)" stroke="#000" stroke-width="1" stroke-linejoin="round"/><polygon points="1013.3,503.1 1004.8,501.1 1029.5,479.7 1037.9,482.8" fill="rgb(16,239,0)" stroke="#000" stroke-width="1" stroke-linejoin="round"/><polygon points="1146.0,477.4 1139.2,481.5 1142.1,479.5 1148.9,475.4" fill="rgb(44,239,0)" stroke="#000" stroke-width="1" stroke-linejoin="round"/><polygon points="1114.3,498.8 1105.8,491.7 1115.5,453.0 1123.9,458.7" fill="rgb(51,239,0)" stroke="#000" stroke-width="1" stroke-linejoin="round"/><polygon points="922.1,527.8 913.6,531.5 928.5,496.2 936.9,492.7" fill="rgb(0,239,27)" stroke="#000" stroke-width="1" stroke-linejoin="round"/><polygon points="1149.4,476.5 1146.0,477.4 1148.9,475.4 1152.2,474.5" fill="rgb(51,239,0)" stroke="#000" stroke-width="1" stroke-linejoin="round"/><polygon points="1021.8,501.9 1013.3,503.1 1037.9,482.8 1046.4,484.4" fill="rgb(16,239,0)" stroke="#000" stroke-width="1" stroke-linejoin="round"/><polygon points="1152.8,475.6 1149.4,476.5 1152.2,474.5 1155.6,473.6" fill="rgb(54,239,0)" stroke="#000" stroke-width="1" stroke-linejoin="round"/><polygon points="1122.8,493.7 1114.3,498.8 1123.9,458.7 1132.4,472.5" fill="rgb(43,239,0)" stroke="#000" stroke-width="1" stroke-linejoin="round"/><polygon points="1156.2,474.3 1152.8,475.6 1155.6,473.6 1159.0,472.3" fill="rgb(58,239,0)" stroke="#000" stroke-width="1" stroke-linejoin="round"/><polygon points="930.6,525.1 922.1,527.8 936.9,492.7 945.4,492.0" fill="rgb(0,239,17)" stroke="#000" stroke-width="1" stroke-linejoin="round"/><polygon points="1030.3,504.1 1021.8,501.9 1046.4,484.4 1054.9,486.9" fill="rgb(16,239,0)" stroke="#000" stroke-width="1" stroke-linejoin="round"/><polygon points="1159.6,474.6 1156.2,474.3 1159.0,472.3 1162.4,472.6" fill="rgb(60,239,0)" stroke="#000" stroke-width="1" stroke-linejoin="round"/><polygon points="1163.0,473.7 1159.6,474.6 1162.4,472.6 1165.8,471.7" fill="rgb(62,239,0)" stroke="#000" stroke-width="1" stroke-linejoin="round"/><polygon points="1129.6,490.8 1122.8,493.7 1132.4,472.5 1139.2,481.5" fill="rgb(38,239,0)" stroke="#000" stroke-width="1" stroke-linejoin="round"/><polygon points="939.0,523.5 930.6,525.1 945.4,492.0 953.9,492.1" fill="rgb(0,239,11)" stroke="#000" stroke-width="1" stroke-linejoin="round"/><polygon points="1166.4,472.9 1163.0,473.7 1165.8,471.7 1169.2,470.9" fill="rgb(65,239,0)" stroke="#000" stroke-width="1" stroke-linejoin="round"/><polygon points="864.9,589.9 854.7,588.2 869.5,541.7 879.7,543.4" fill="rgb(0,239,144)" stroke="#000" stroke-width="1" stroke-linejoin="round"/><polygon points="1038.7,511.3 1030.3,504.1 1054.9,486.9 1063.4,494.9" fill="rgb(9,239,0)" stroke="#000" stroke-width="1" stroke-linejoin="round"/><polygon points="1136.3,486.3 1129.6,490.8 1139.2,481.5 1146.0,477.4" fill="rgb(42,239,0)" stroke="#000" stroke-width="1" stroke-linejoin="round"/><polygon points="1173.2,473.0 1166.4,472.9 1169.2,470.9 1176.0,471.0" fill="rgb(68,239,0)" stroke="#000" stroke-width="1" stroke-linejoin="round"/><polygon points="947.5,521.0 939.0,523.5 953.9,492.1 962.4,492.5" fill="rgb(0,239,6)" stroke="#000" stroke-width="1" stroke-linejoin="round"/><polygon points="1139.7,485.9 1136.3,486.3 1146.0,477.4 1149.4,476.5" fill="rgb(49,239,0)" stroke="#000" stroke-width="1" stroke-linejoin="round"/><polygon points="873.4,586.5 864.9,589.9 879.7,543.4 888.1,541.3" fill="rgb(0,239,139)" stroke="#000" stroke-width="1" stroke-linejoin="round"/><polygon points="1047.2,520.4 1038.7,511.3 1063.4,494.9 1071.9,499.0" fill="rgb(0,239,3)" stroke="#000" stroke-width="1" stroke-linejoin="round"/><polygon points="1143.1,485.4 1139.7,485.9 1149.4,476.5 1152.8,475.6" fill="rgb(52,239,0)" stroke="#000" stroke-width="1" stroke-linejoin="round"/><polygon points="1146.5,483.8 1143.1,485.4 1152.8,475.6 1156.2,474.3" fill="rgb(55,239,0)" stroke="#000" stroke-width="1" stroke-linejoin="round"/><polygon points="956.0,517.9 947.5,521.0 962.4,492.5 970.9,492.1" fill="rgb(0,239,0)" stroke="#000" stroke-width="1" stroke-linejoin="round"/><polygon points="881.9,582.4 873.4,586.5 888.1,541.3 896.6,538.0" fill="rgb(0,239,128)" stroke="#000" stroke-width="1" stroke-linejoin="round"/><polygon points="1055.7,525.2 1047.2,520.4 1071.9,499.0 1080.4,501.3" fill="rgb(0,239,11)" stroke="#000" stroke-width="1" stroke-linejoin="round"/><polygon points="1149.9,483.2 1146.5,483.8 1156.2,474.3 1159.6,474.6" fill="rgb(58,239,0)" stroke="#000" stroke-width="1" stroke-linejoin="round"/><polygon points="1153.3,482.7 1149.9,483.2 1159.6,474.6 1163.0,473.7" fill="rgb(60,239,0)" stroke="#000" stroke-width="1" stroke-linejoin="round"/><polygon points="964.5,516.2 956.0,517.9 970.9,492.1 979.4,490.3" fill="rgb(7,239,0)" stroke="#000" stroke-width="1" stroke-linejoin="round"/><polygon points="1156.7,482.3 1153.3,482.7 1163.0,473.7 1166.4,472.9" fill="rgb(63,239,0)" stroke="#000" stroke-width="1" stroke-linejoin="round"/><polygon points="890.4,577.8 881.9,582.4 896.6,538.0 905.1,535.5" fill="rgb(0,239,117)" stroke="#000" stroke-width="1" stroke-linejoin="round"/><polygon points="1064.2,522.8 1055.7,525.2 1080.4,501.3 1088.8,499.7" fill="rgb(0,239,9)" stroke="#000" stroke-width="1" stroke-linejoin="round"/><polygon points="1163.5,482.9 1156.7,482.3 1166.4,472.9 1173.2,473.0" fill="rgb(65,239,0)" stroke="#000" stroke-width="1" stroke-linejoin="round"/><polygon points="973.0,511.8 964.5,516.2 979.4,490.3 987.8,490.8" fill="rgb(13,239,0)" stroke="#000" stroke-width="1" stroke-linejoin="round"/><polygon points="898.8,574.9 890.4,577.8 905.1,535.5 913.6,531.5" fill="rgb(0,239,105)" stroke="#000" stroke-width="1" stroke-linejoin="round"/><polygon points="1072.7,517.3 1064.2,522.8 1088.8,499.7 1097.3,491.9" fill="rgb(3,239,0)" stroke="#000" stroke-width="1" stroke-linejoin="round"/><polygon points="981.5,511.3 973.0,511.8 987.8,490.8 996.3,492.6" fill="rgb(18,239,0)" stroke="#000" stroke-width="1" stroke-linejoin="round"/><polygon points="907.3,571.2 898.8,574.9 913.6,531.5 922.1,527.8" fill="rgb(0,239,94)" stroke="#000" stroke-width="1" stroke-linejoin="round"/><polygon points="1081.2,518.0 1072.7,517.3 1097.3,491.9 1105.8,491.7" fill="rgb(12,239,0)" stroke="#000" stroke-width="1" stroke-linejoin="round"/><polygon points="857.5,613.0 847.3,613.5 854.7,588.2 864.9,589.9" fill="rgb(0,239,199)" stroke="#000" stroke-width="1" stroke-linejoin="round"/><polygon points="989.9,516.1 981.5,511.3 996.3,492.6 1004.8,501.1" fill="rgb(13,239,0)" stroke="#000" stroke-width="1" stroke-linejoin="round"/><polygon points="915.8,567.2 907.3,571.2 922.1,527.8 930.6,525.1" fill="rgb(0,239,82)" stroke="#000" stroke-width="1" stroke-linejoin="round"/><polygon points="1089.6,524.3 1081.2,518.0 1105.8,491.7 1114.3,498.8" fill="rgb(8,239,0)" stroke="#000" stroke-width="1" stroke-linejoin="round"/><polygon points="866.0,609.7 857.5,613.0 864.9,589.9 873.4,586.5" fill="rgb(0,239,194)" stroke="#000" stroke-width="1" stroke-linejoin="round"/><polygon points="998.4,518.1 989.9,516.1 1004.8,501.1 1013.3,503.1" fill="rgb(7,239,0)" stroke="#000" stroke-width="1" stroke-linejoin="round"/><polygon points="924.3,562.4 915.8,567.2 930.6,525.1 939.0,523.5" fill="rgb(0,239,71)" stroke="#000" stroke-width="1" stroke-linejoin="round"/><polygon points="1098.1,517.2 1089.6,524.3 1114.3,498.8 1122.8,493.7" fill="rgb(10,239,0)" stroke="#000" stroke-width="1" stroke-linejoin="round"/><polygon points="874.4,605.6 866.0,609.7 873.4,586.5 881.9,582.4" fill="rgb(0,239,185)" stroke="#000" stroke-width="1" stroke-linejoin="round"/><polygon points="1006.9,514.9 998.4,518.1 1013.3,503.1 1021.8,501.9" fill="rgb(10,239,0)" stroke="#000" stroke-width="1" stroke-linejoin="round"/><polygon points="1104.9,515.1 1098.1,517.2 1122.8,493.7 1129.6,490.8" fill="rgb(22,239,0)" stroke="#000" stroke-width="1" stroke-linejoin="round"/><polygon points="932.8,558.5 924.3,562.4 939.0,523.5 947.5,521.0" fill="rgb(0,239,60)" stroke="#000" stroke-width="1" stroke-linejoin="round"/><polygon points="882.9,601.8 874.4,605.6 881.9,582.4 890.4,577.8" fill="rgb(0,239,175)" stroke="#000" stroke-width="1" stroke-linejoin="round"/><polygon points="1015.4,513.5 1006.9,514.9 1021.8,501.9 1030.3,504.1" fill="rgb(15,239,0)" stroke="#000" stroke-width="1" stroke-linejoin="round"/><polygon points="1111.7,510.6 1104.9,515.1 1129.6,490.8 1136.3,486.3" fill="rgb(32,239,0)" stroke="#000" stroke-width="1" stroke-linejoin="round"/><polygon points="850.0,635.2 839.9,636.3 847.3,613.5 857.5,613.0" fill="rgb(0,239,232)" stroke="#000" stroke-width="1" stroke-linejoin="round"/><polygon points="941.3,556.5 932.8,558.5 947.5,521.0 956.0,517.9" fill="rgb(0,239,50)" stroke="#000" stroke-width="1" stroke-linejoin="round"/><polygon points="1115.1,509.8 1111.7,510.6 1136.3,486.3 1139.7,485.9" fill="rgb(39,239,0)" stroke="#000" stroke-width="1" stroke-linejoin="round"/><polygon points="891.4,596.8 882.9,601.8 890.4,577.8 898.8,574.9" fill="rgb(0,239,163)" stroke="#000" stroke-width="1" stroke-linejoin="round"/><polygon points="1023.9,519.9 1015.4,513.5 1030.3,504.1 1038.7,511.3" fill="rgb(11,239,0)" stroke="#000" stroke-width="1" stroke-linejoin="round"/><polygon points="1118.5,509.0 1115.1,509.8 1139.7,485.9 1143.1,485.4" fill="rgb(42,239,0)" stroke="#000" stroke-width="1" stroke-linejoin="round"/><polygon points="949.7,551.7 941.3,556.5 956.0,517.9 964.5,516.2" fill="rgb(0,239,40)" stroke="#000" stroke-width="1" stroke-linejoin="round"/><polygon points="858.5,631.8 850.0,635.2 857.5,613.0 866.0,609.7" fill="rgb(0,239,225)" stroke="#000" stroke-width="1" stroke-linejoin="round"/><polygon points="1121.9,507.8 1118.5,509.0 1143.1,485.4 1146.5,483.8" fill="rgb(45,239,0)" stroke="#000" stroke-width="1" stroke-linejoin="round"/><polygon points="899.9,592.0 891.4,596.8 898.8,574.9 907.3,571.2" fill="rgb(0,239,150)" stroke="#000" stroke-width="1" stroke-linejoin="round"/><polygon points="1125.3,507.3 1121.9,507.8 1146.5,483.8 1149.9,483.2" fill="rgb(48,239,0)" stroke="#000" stroke-width="1" stroke-linejoin="round"/><polygon points="1032.4,530.2 1023.9,519.9 1038.7,511.3 1047.2,520.4" fill="rgb(0,239,3)" stroke="#000" stroke-width="1" stroke-linejoin="round"/><polygon points="1128.7,506.9 1125.3,507.3 1149.9,483.2 1153.3,482.7" fill="rgb(51,239,0)" stroke="#000" stroke-width="1" stroke-linejoin="round"/><polygon points="958.2,547.1 949.7,551.7 964.5,516.2 973.0,511.8" fill="rgb(0,239,28)" stroke="#000" stroke-width="1" stroke-linejoin="round"/><polygon points="867.0,627.6 858.5,631.8 866.0,609.7 874.4,605.6" fill="rgb(0,239,216)" stroke="#000" stroke-width="1" stroke-linejoin="round"/><polygon points="1132.1,506.4 1128.7,506.9 1153.3,482.7 1156.7,482.3" fill="rgb(53,239,0)" stroke="#000" stroke-width="1" stroke-linejoin="round"/><polygon points="908.4,587.8 899.9,592.0 907.3,571.2 915.8,567.2" fill="rgb(0,239,137)" stroke="#000" stroke-width="1" stroke-linejoin="round"/><polygon points="1040.8,535.8 1032.4,530.2 1047.2,520.4 1055.7,525.2" fill="rgb(0,239,17)" stroke="#000" stroke-width="1" stroke-linejoin="round"/><polygon points="1138.8,507.1 1132.1,506.4 1156.7,482.3 1163.5,482.9" fill="rgb(54,239,0)" stroke="#000" stroke-width="1" stroke-linejoin="round"/><polygon points="966.7,544.7 958.2,547.1 973.0,511.8 981.5,511.3" fill="rgb(0,239,18)" stroke="#000" stroke-width="1" stroke-linejoin="round"/><polygon points="875.5,623.5 867.0,627.6 874.4,605.6 882.9,601.8" fill="rgb(0,239,206)" stroke="#000" stroke-width="1" stroke-linejoin="round"/><polygon points="916.9,584.3 908.4,587.8 915.8,567.2 924.3,562.4" fill="rgb(0,239,125)" stroke="#000" stroke-width="1" stroke-linejoin="round"/><polygon points="842.7,655.9 832.6,657.0 839.9,636.3 850.0,635.2" fill="rgb(0,218,239)" stroke="#000" stroke-width="1" stroke-linejoin="round"/><polygon points="1049.3,533.8 1040.8,535.8 1055.7,525.2 1064.2,522.8" fill="rgb(0,239,17)" stroke="#000" stroke-width="1" stroke-linejoin="round"/><polygon points="975.2,548.4 966.7,544.7 981.5,511.3 989.9,516.1" fill="rgb(0,239,18)" stroke="#000" stroke-width="1" stroke-linejoin="round"/><polygon points="884.0,618.5 875.5,623.5 882.9,601.8 891.4,596.8" fill="rgb(0,239,196)" stroke="#000" stroke-width="1" stroke-linejoin="round"/><polygon points="925.3,580.0 916.9,584.3 924.3,562.4 932.8,558.5" fill="rgb(0,239,112)" stroke="#000" stroke-width="1" stroke-linejoin="round"/><polygon points="851.2,652.6 842.7,655.9 850.0,635.2 858.5,631.8" fill="rgb(0,224,239)" stroke="#000" stroke-width="1" stroke-linejoin="round"/><polygon points="1057.8,530.2 1049.3,533.8 1064.2,522.8 1072.7,517.3" fill="rgb(0,239,6)" stroke="#000" stroke-width="1" stroke-linejoin="round"/><polygon points="983.7,547.3 975.2,548.4 989.9,516.1 998.4,518.1" fill="rgb(0,239,20)" stroke="#000" stroke-width="1" stroke-linejoin="round"/><polygon points="892.5,613.5 884.0,618.5 891.4,596.8 899.9,592.0" fill="rgb(0,239,184)" stroke="#000" stroke-width="1" stroke-linejoin="round"/><polygon points="933.8,575.1 925.3,580.0 932.8,558.5 941.3,556.5" fill="rgb(0,239,100)" stroke="#000" stroke-width="1" stroke-linejoin="round"/><polygon points="859.7,648.6 851.2,652.6 858.5,631.8 867.0,627.6" fill="rgb(0,234,239)" stroke="#000" stroke-width="1" stroke-linejoin="round"/><polygon points="1066.3,530.0 1057.8,530.2 1072.7,517.3 1081.2,518.0" fill="rgb(1,239,0)" stroke="#000" stroke-width="1" stroke-linejoin="round"/><polygon points="992.2,543.6 983.7,547.3 998.4,518.1 1006.9,514.9" fill="rgb(0,239,13)" stroke="#000" stroke-width="1" stroke-linejoin="round"/><polygon points="900.9,609.0 892.5,613.5 899.9,592.0 908.4,587.8" fill="rgb(0,239,173)" stroke="#000" stroke-width="1" stroke-linejoin="round"/><polygon points="942.3,571.2 933.8,575.1 941.3,556.5 949.7,551.7" fill="rgb(0,239,87)" stroke="#000" stroke-width="1" stroke-linejoin="round"/><polygon points="868.2,644.8 859.7,648.6 867.0,627.6 875.5,623.5" fill="rgb(0,239,235)" stroke="#000" stroke-width="1" stroke-linejoin="round"/><polygon points="1074.8,536.7 1066.3,530.0 1081.2,518.0 1089.6,524.3" fill="rgb(0,239,2)" stroke="#000" stroke-width="1" stroke-linejoin="round"/><polygon points="1000.6,540.8 992.2,543.6 1006.9,514.9 1015.4,513.5" fill="rgb(0,239,3)" stroke="#000" stroke-width="1" stroke-linejoin="round"/><polygon points="909.4,605.1 900.9,609.0 908.4,587.8 916.9,584.3" fill="rgb(0,239,161)" stroke="#000" stroke-width="1" stroke-linejoin="round"/><polygon points="835.3,671.2 825.1,671.8 832.6,657.0 842.7,655.9" fill="rgb(0,192,239)" stroke="#000" stroke-width="1" stroke-linejoin="round"/><polygon points="950.8,565.0 942.3,571.2 949.7,551.7 958.2,547.1" fill="rgb(0,239,73)" stroke="#000" stroke-width="1" stroke-linejoin="round"/><polygon points="876.7,640.2 868.2,644.8 875.5,623.5 884.0,618.5" fill="rgb(0,239,225)" stroke="#000" stroke-width="1" stroke-linejoin="round"/><polygon points="1083.3,530.9 1074.8,536.7 1089.6,524.3 1098.1,517.2" fill="rgb(0,239,0)" stroke="#000" stroke-width="1" stroke-linejoin="round"/><polygon points="1009.1,544.0 1000.6,540.8 1015.4,513.5 1023.9,519.9" fill="rgb(0,239,3)" stroke="#000" stroke-width="1" stroke-linejoin="round"/><polygon points="917.9,600.5 909.4,605.1 916.9,584.3 925.3,580.0" fill="rgb(0,239,149)" stroke="#000" stroke-width="1" stroke-linejoin="round"/><polygon points="843.8,668.8 835.3,671.2 842.7,655.9 851.2,652.6" fill="rgb(0,200,239)" stroke="#000" stroke-width="1" stroke-linejoin="round"/><polygon points="959.3,561.9 950.8,565.0 958.2,547.1 966.7,544.7" fill="rgb(0,239,60)" stroke="#000" stroke-width="1" stroke-linejoin="round"/><polygon points="1090.0,530.1 1083.3,530.9 1098.1,517.2 1104.9,515.1" fill="rgb(11,239,0)" stroke="#000" stroke-width="1" stroke-linejoin="round"/><polygon points="885.2,635.5 876.7,640.2 884.0,618.5 892.5,613.5" fill="rgb(0,239,214)" stroke="#000" stroke-width="1" stroke-linejoin="round"/><polygon points="1017.6,551.2 1009.1,544.0 1023.9,519.9 1032.4,530.2" fill="rgb(0,239,16)" stroke="#000" stroke-width="1" stroke-linejoin="round"/><polygon points="926.4,595.3 917.9,600.5 925.3,580.0 933.8,575.1" fill="rgb(0,239,134)" stroke="#000" stroke-width="1" stroke-linejoin="round"/><polygon points="852.3,665.8 843.8,668.8 851.2,652.6 859.7,648.6" fill="rgb(0,209,239)" stroke="#000" stroke-width="1" stroke-linejoin="round"/><polygon points="1096.8,526.2 1090.0,530.1 1104.9,515.1 1111.7,510.6" fill="rgb(20,239,0)" stroke="#000" stroke-width="1" stroke-linejoin="round"/><polygon points="967.8,563.3 959.3,561.9 966.7,544.7 975.2,548.4" fill="rgb(0,239,56)" stroke="#000" stroke-width="1" stroke-linejoin="round"/><polygon points="893.6,631.2 885.2,635.5 892.5,613.5 900.9,609.0" fill="rgb(0,239,203)" stroke="#000" stroke-width="1" stroke-linejoin="round"/><polygon points="831.5,680.2 821.3,680.4 825.1,671.8 835.3,671.2" fill="rgb(0,172,239)" stroke="#000" stroke-width="1" stroke-linejoin="round"/><polygon points="1026.1,556.8 1017.6,551.2 1032.4,530.2 1040.8,535.8" fill="rgb(0,239,29)" stroke="#000" stroke-width="1" stroke-linejoin="round"/><polygon points="1100.2,524.6 1096.8,526.2 1111.7,510.6 1115.1,509.8" fill="rgb(27,239,0)" stroke="#000" stroke-width="1" stroke-linejoin="round"/><polygon points="934.9,591.0 926.4,595.3 933.8,575.1 942.3,571.2" fill="rgb(0,239,120)" stroke="#000" stroke-width="1" stroke-linejoin="round"/><polygon points="860.8,662.9 852.3,665.8 859.7,648.6 868.2,644.8" fill="rgb(0,218,239)" stroke="#000" stroke-width="1" stroke-linejoin="round"/><polygon points="1103.6,523.9 1100.2,524.6 1115.1,509.8 1118.5,509.0" fill="rgb(30,239,0)" stroke="#000" stroke-width="1" stroke-linejoin="round"/><polygon points="976.2,562.4 967.8,563.3 975.2,548.4 983.7,547.3" fill="rgb(0,239,55)" stroke="#000" stroke-width="1" stroke-linejoin="round"/><polygon points="902.1,627.4 893.6,631.2 900.9,609.0 909.4,605.1" fill="rgb(0,239,193)" stroke="#000" stroke-width="1" stroke-linejoin="round"/><polygon points="1107.0,522.2 1103.6,523.9 1118.5,509.0 1121.9,507.8" fill="rgb(34,239,0)" stroke="#000" stroke-width="1" stroke-linejoin="round"/><polygon points="1034.6,548.5 1026.1,556.8 1040.8,535.8 1049.3,533.8" fill="rgb(0,239,26)" stroke="#000" stroke-width="1" stroke-linejoin="round"/><polygon points="839.9,678.3 831.5,680.2 835.3,671.2 843.8,668.8" fill="rgb(0,179,239)" stroke="#000" stroke-width="1" stroke-linejoin="round"/><polygon points="943.4,584.5 934.9,591.0 942.3,571.2 950.8,565.0" fill="rgb(0,239,105)" stroke="#000" stroke-width="1" stroke-linejoin="round"/><polygon points="1110.4,521.3 1107.0,522.2 1121.9,507.8 1125.3,507.3" fill="rgb(37,239,0)" stroke="#000" stroke-width="1" stroke-linejoin="round"/><polygon points="869.2,659.3 860.8,662.9 868.2,644.8 876.7,640.2" fill="rgb(0,227,239)" stroke="#000" stroke-width="1" stroke-linejoin="round"/><polygon points="984.7,556.9 976.2,562.4 983.7,547.3 992.2,543.6" fill="rgb(0,239,45)" stroke="#000" stroke-width="1" stroke-linejoin="round"/><polygon points="1113.8,520.2 1110.4,521.3 1125.3,507.3 1128.7,506.9" fill="rgb(40,239,0)" stroke="#000" stroke-width="1" stroke-linejoin="round"/><polygon points="910.6,622.9 902.1,627.4 909.4,605.1 917.9,600.5" fill="rgb(0,239,183)" stroke="#000" stroke-width="1" stroke-linejoin="round"/><polygon points="827.9,691.4 817.7,691.3 821.3,680.4 831.5,680.2" fill="rgb(0,154,239)" stroke="#000" stroke-width="1" stroke-linejoin="round"/><polygon points="1043.1,547.4 1034.6,548.5 1049.3,533.8 1057.8,530.2" fill="rgb(0,239,14)" stroke="#000" stroke-width="1" stroke-linejoin="round"/><polygon points="1117.2,520.0 1113.8,520.2 1128.7,506.9 1132.1,506.4" fill="rgb(42,239,0)" stroke="#000" stroke-width="1" stroke-linejoin="round"/><polygon points="848.4,675.8 839.9,678.3 843.8,668.8 852.3,665.8" fill="rgb(0,189,239)" stroke="#000" stroke-width="1" stroke-linejoin="round"/><polygon points="951.8,580.8 943.4,584.5 950.8,565.0 959.3,561.9" fill="rgb(0,239,90)" stroke="#000" stroke-width="1" stroke-linejoin="round"/><polygon points="877.7,655.7 869.2,659.3 876.7,640.2 885.2,635.5" fill="rgb(0,237,239)" stroke="#000" stroke-width="1" stroke-linejoin="round"/><polygon points="993.2,552.7 984.7,556.9 992.2,543.6 1000.6,540.8" fill="rgb(0,239,32)" stroke="#000" stroke-width="1" stroke-linejoin="round"/><polygon points="1124.0,520.2 1117.2,520.0 1132.1,506.4 1138.8,507.1" fill="rgb(44,239,0)" stroke="#000" stroke-width="1" stroke-linejoin="round"/><polygon points="919.1,618.0 910.6,622.9 917.9,600.5 926.4,595.3" fill="rgb(0,239,172)" stroke="#000" stroke-width="1" stroke-linejoin="round"/><polygon points="836.4,689.9 827.9,691.4 831.5,680.2 839.9,678.3" fill="rgb(0,160,239)" stroke="#000" stroke-width="1" stroke-linejoin="round"/><polygon points="1051.5,544.2 1043.1,547.4 1057.8,530.2 1066.3,530.0" fill="rgb(0,239,6)" stroke="#000" stroke-width="1" stroke-linejoin="round"/><polygon points="856.9,673.5 848.4,675.8 852.3,665.8 860.8,662.9" fill="rgb(0,199,239)" stroke="#000" stroke-width="1" stroke-linejoin="round"/><polygon points="960.3,581.2 951.8,580.8 959.3,561.9 967.8,563.3" fill="rgb(0,239,84)" stroke="#000" stroke-width="1" stroke-linejoin="round"/><polygon points="886.2,652.4 877.7,655.7 885.2,635.5 893.6,631.2" fill="rgb(0,239,232)" stroke="#000" stroke-width="1" stroke-linejoin="round"/><polygon points="1001.7,555.5 993.2,552.7 1000.6,540.8 1009.1,544.0" fill="rgb(0,239,28)" stroke="#000" stroke-width="1" stroke-linejoin="round"/><polygon points="824.2,705.0 814.0,704.8 817.7,691.3 827.9,691.4" fill="rgb(0,130,239)" stroke="#000" stroke-width="1" stroke-linejoin="round"/><polygon points="927.6,613.8 919.1,618.0 926.4,595.3 934.9,591.0" fill="rgb(0,239,158)" stroke="#000" stroke-width="1" stroke-linejoin="round"/><polygon points="844.8,688.0 836.4,689.9 839.9,678.3 848.4,675.8" fill="rgb(0,169,239)" stroke="#000" stroke-width="1" stroke-linejoin="round"/><polygon points="1060.0,547.7 1051.5,544.2 1066.3,530.0 1074.8,536.7" fill="rgb(0,239,7)" stroke="#000" stroke-width="1" stroke-linejoin="round"/><polygon points="865.4,670.5 856.9,673.5 860.8,662.9 869.2,659.3" fill="rgb(0,208,239)" stroke="#000" stroke-width="1" stroke-linejoin="round"/><polygon points="968.8,579.6 960.3,581.2 967.8,563.3 976.2,562.4" fill="rgb(0,239,80)" stroke="#000" stroke-width="1" stroke-linejoin="round"/><polygon points="894.7,649.7 886.2,652.4 893.6,631.2 902.1,627.4" fill="rgb(0,239,223)" stroke="#000" stroke-width="1" stroke-linejoin="round"/><polygon points="1010.2,562.1 1001.7,555.5 1009.1,544.0 1017.6,551.2" fill="rgb(0,239,37)" stroke="#000" stroke-width="1" stroke-linejoin="round"/><polygon points="832.6,704.0 824.2,705.0 827.9,691.4 836.4,689.9" fill="rgb(0,135,239)" stroke="#000" stroke-width="1" stroke-linejoin="round"/><polygon points="936.1,607.5 927.6,613.8 934.9,591.0 943.4,584.5" fill="rgb(0,239,142)" stroke="#000" stroke-width="1" stroke-linejoin="round"/><polygon points="853.3,686.2 844.8,688.0 848.4,675.8 856.9,673.5" fill="rgb(0,177,239)" stroke="#000" stroke-width="1" stroke-linejoin="round"/><polygon points="1068.5,544.9 1060.0,547.7 1074.8,536.7 1083.3,530.9" fill="rgb(0,239,4)" stroke="#000" stroke-width="1" stroke-linejoin="round"/><polygon points="873.9,667.5 865.4,670.5 869.2,659.3 877.7,655.7" fill="rgb(0,216,239)" stroke="#000" stroke-width="1" stroke-linejoin="round"/><polygon points="977.3,573.6 968.8,579.6 976.2,562.4 984.7,556.9" fill="rgb(0,239,69)" stroke="#000" stroke-width="1" stroke-linejoin="round"/><polygon points="903.2,646.2 894.7,649.7 902.1,627.4 910.6,622.9" fill="rgb(0,239,214)" stroke="#000" stroke-width="1" stroke-linejoin="round"/><polygon points="820.4,719.5 810.3,719.2 814.0,704.8 824.2,705.0" fill="rgb(0,102,239)" stroke="#000" stroke-width="1" stroke-linejoin="round"/><polygon points="1018.7,564.8 1010.2,562.1 1017.6,551.2 1026.1,556.8" fill="rgb(0,239,46)" stroke="#000" stroke-width="1" stroke-linejoin="round"/><polygon points="841.1,702.5 832.6,704.0 836.4,689.9 844.8,688.0" fill="rgb(0,143,239)" stroke="#000" stroke-width="1" stroke-linejoin="round"/><polygon points="944.5,603.9 936.1,607.5 943.4,584.5 951.8,580.8" fill="rgb(0,239,127)" stroke="#000" stroke-width="1" stroke-linejoin="round"/><polygon points="1075.3,543.7 1068.5,544.9 1083.3,530.9 1090.0,530.1" fill="rgb(3,239,0)" stroke="#000" stroke-width="1" stroke-linejoin="round"/><polygon points="861.8,683.8 853.3,686.2 856.9,673.5 865.4,670.5" fill="rgb(0,187,239)" stroke="#000" stroke-width="1" stroke-linejoin="round"/><polygon points="882.4,664.9 873.9,667.5 877.7,655.7 886.2,652.4" fill="rgb(0,224,239)" stroke="#000" stroke-width="1" stroke-linejoin="round"/><polygon points="985.8,568.8 977.3,573.6 984.7,556.9 993.2,552.7" fill="rgb(0,239,54)" stroke="#000" stroke-width="1" stroke-linejoin="round"/><polygon points="911.7,642.4 903.2,646.2 910.6,622.9 919.1,618.0" fill="rgb(0,239,204)" stroke="#000" stroke-width="1" stroke-linejoin="round"/><polygon points="1027.1,557.5 1018.7,564.8 1026.1,556.8 1034.6,548.5" fill="rgb(0,239,38)" stroke="#000" stroke-width="1" stroke-linejoin="round"/><polygon points="828.9,718.8 820.4,719.5 824.2,705.0 832.6,704.0" fill="rgb(0,107,239)" stroke="#000" stroke-width="1" stroke-linejoin="round"/><polygon points="849.6,701.1 841.1,702.5 844.8,688.0 853.3,686.2" fill="rgb(0,150,239)" stroke="#000" stroke-width="1" stroke-linejoin="round"/><polygon points="1082.1,541.2 1075.3,543.7 1090.0,530.1 1096.8,526.2" fill="rgb(10,239,0)" stroke="#000" stroke-width="1" stroke-linejoin="round"/><polygon points="953.0,603.8 944.5,603.9 951.8,580.8 960.3,581.2" fill="rgb(0,239,120)" stroke="#000" stroke-width="1" stroke-linejoin="round"/><polygon points="870.3,681.5 861.8,683.8 865.4,670.5 873.9,667.5" fill="rgb(0,197,239)" stroke="#000" stroke-width="1" stroke-linejoin="round"/><polygon points="817.6,728.2 807.4,727.9 810.3,719.2 820.4,719.5" fill="rgb(0,79,239)" stroke="#000" stroke-width="1" stroke-linejoin="round"/><polygon points="890.8,662.7 882.4,664.9 886.2,652.4 894.7,649.7" fill="rgb(0,232,239)" stroke="#000" stroke-width="1" stroke-linejoin="round"/><polygon points="994.3,570.5 985.8,568.8 993.2,552.7 1001.7,555.5" fill="rgb(0,239,48)" stroke="#000" stroke-width="1" stroke-linejoin="round"/><polygon points="1085.5,539.7 1082.1,541.2 1096.8,526.2 1100.2,524.6" fill="rgb(17,239,0)" stroke="#000" stroke-width="1" stroke-linejoin="round"/><polygon points="920.1,639.2 911.7,642.4 919.1,618.0 927.6,613.8" fill="rgb(0,239,194)" stroke="#000" stroke-width="1" stroke-linejoin="round"/><polygon points="1035.6,554.3 1027.1,557.5 1034.6,548.5 1043.1,547.4" fill="rgb(0,239,24)" stroke="#000" stroke-width="1" stroke-linejoin="round"/><polygon points="837.4,717.8 828.9,718.8 832.6,704.0 841.1,702.5" fill="rgb(0,113,239)" stroke="#000" stroke-width="1" stroke-linejoin="round"/><polygon points="858.1,699.3 849.6,701.1 853.3,686.2 861.8,683.8" fill="rgb(0,158,239)" stroke="#000" stroke-width="1" stroke-linejoin="round"/><polygon points="1088.9,538.3 1085.5,539.7 1100.2,524.6 1103.6,523.9" fill="rgb(21,239,0)" stroke="#000" stroke-width="1" stroke-linejoin="round"/><polygon points="961.5,602.0 953.0,603.8 960.3,581.2 968.8,579.6" fill="rgb(0,239,115)" stroke="#000" stroke-width="1" stroke-linejoin="round"/><polygon points="878.8,679.4 870.3,681.5 873.9,667.5 882.4,664.9" fill="rgb(0,206,239)" stroke="#000" stroke-width="1" stroke-linejoin="round"/><polygon points="899.3,659.9 890.8,662.7 894.7,649.7 903.2,646.2" fill="rgb(0,239,239)" stroke="#000" stroke-width="1" stroke-linejoin="round"/><polygon points="1002.7,576.0 994.3,570.5 1001.7,555.5 1010.2,562.1" fill="rgb(0,239,54)" stroke="#000" stroke-width="1" stroke-linejoin="round"/><polygon points="1092.3,537.0 1088.9,538.3 1103.6,523.9 1107.0,522.2" fill="rgb(25,239,0)" stroke="#000" stroke-width="1" stroke-linejoin="round"/><polygon points="816.0,733.6 805.8,733.2 807.4,727.9 817.6,728.2" fill="rgb(0,66,239)" stroke="#000" stroke-width="1" stroke-linejoin="round"/><polygon points="826.1,727.7 817.6,728.2 820.4,719.5 828.9,718.8" fill="rgb(0,84,239)" stroke="#000" stroke-width="1" stroke-linejoin="round"/><polygon points="928.6,634.3 920.1,639.2 927.6,613.8 936.1,607.5" fill="rgb(0,239,183)" stroke="#000" stroke-width="1" stroke-linejoin="round"/><polygon points="1044.1,549.2 1035.6,554.3 1043.1,547.4 1051.5,544.2" fill="rgb(0,239,13)" stroke="#000" stroke-width="1" stroke-linejoin="round"/><polygon points="1095.7,535.6 1092.3,537.0 1107.0,522.2 1110.4,521.3" fill="rgb(29,239,0)" stroke="#000" stroke-width="1" stroke-linejoin="round"/><polygon points="845.9,716.8 837.4,717.8 841.1,702.5 849.6,701.1" fill="rgb(0,119,239)" stroke="#000" stroke-width="1" stroke-linejoin="round"/><polygon points="866.6,697.5 858.1,699.3 861.8,683.8 870.3,681.5" fill="rgb(0,167,239)" stroke="#000" stroke-width="1" stroke-linejoin="round"/><polygon points="970.0,596.1 961.5,602.0 968.8,579.6 977.3,573.6" fill="rgb(0,239,103)" stroke="#000" stroke-width="1" stroke-linejoin="round"/><polygon points="814.5,738.9 804.3,738.4 805.8,733.2 816.0,733.6" fill="rgb(0,56,239)" stroke="#000" stroke-width="1" stroke-linejoin="round"/><polygon points="1099.1,535.5 1095.7,535.6 1110.4,521.3 1113.8,520.2" fill="rgb(32,239,0)" stroke="#000" stroke-width="1" stroke-linejoin="round"/><polygon points="887.3,677.7 878.8,679.4 882.4,664.9 890.8,662.7" fill="rgb(0,212,239)" stroke="#000" stroke-width="1" stroke-linejoin="round"/><polygon points="907.8,656.8 899.3,659.9 903.2,646.2 911.7,642.4" fill="rgb(0,239,231)" stroke="#000" stroke-width="1" stroke-linejoin="round"/><polygon points="1011.2,577.7 1002.7,576.0 1010.2,562.1 1018.7,564.8" fill="rgb(0,239,60)" stroke="#000" stroke-width="1" stroke-linejoin="round"/><polygon points="834.6,727.0 826.1,727.7 828.9,718.8 837.4,717.8" fill="rgb(0,89,239)" stroke="#000" stroke-width="1" stroke-linejoin="round"/><polygon points="824.5,733.2 816.0,733.6 817.6,728.2 826.1,727.7" fill="rgb(0,70,239)" stroke="#000" stroke-width="1" stroke-linejoin="round"/><polygon points="1102.4,535.4 1099.1,535.5 1113.8,520.2 1117.2,520.0" fill="rgb(34,239,0)" stroke="#000" stroke-width="1" stroke-linejoin="round"/><polygon points="937.1,631.6 928.6,634.3 936.1,607.5 944.5,603.9" fill="rgb(0,239,173)" stroke="#000" stroke-width="1" stroke-linejoin="round"/><polygon points="1052.6,552.9 1044.1,549.2 1051.5,544.2 1060.0,547.7" fill="rgb(0,239,9)" stroke="#000" stroke-width="1" stroke-linejoin="round"/><polygon points="854.4,715.4 845.9,716.8 849.6,701.1 858.1,699.3" fill="rgb(0,126,239)" stroke="#000" stroke-width="1" stroke-linejoin="round"/><polygon points="813.1,743.4 803.0,742.7 804.3,738.4 814.5,738.9" fill="rgb(0,46,239)" stroke="#000" stroke-width="1" stroke-linejoin="round"/><polygon points="875.1,695.9 866.6,697.5 870.3,681.5 878.8,679.4" fill="rgb(0,175,239)" stroke="#000" stroke-width="1" stroke-linejoin="round"/><polygon points="978.5,591.2 970.0,596.1 977.3,573.6 985.8,568.8" fill="rgb(0,239,87)" stroke="#000" stroke-width="1" stroke-linejoin="round"/><polygon points="1109.2,536.5 1102.4,535.4 1117.2,520.0 1124.0,520.2" fill="rgb(35,239,0)" stroke="#000" stroke-width="1" stroke-linejoin="round"/><polygon points="895.7,675.5 887.3,677.7 890.8,662.7 899.3,659.9" fill="rgb(0,218,239)" stroke="#000" stroke-width="1" stroke-linejoin="round"/><polygon points="823.0,738.6 814.5,738.9 816.0,733.6 824.5,733.2" fill="rgb(0,59,239)" stroke="#000" stroke-width="1" stroke-linejoin="round"/><polygon points="916.3,654.3 907.8,656.8 911.7,642.4 920.1,639.2" fill="rgb(0,239,222)" stroke="#000" stroke-width="1" stroke-linejoin="round"/><polygon points="1019.7,571.1 1011.2,577.7 1018.7,564.8 1027.1,557.5" fill="rgb(0,239,52)" stroke="#000" stroke-width="1" stroke-linejoin="round"/><polygon points="843.0,726.1 834.6,727.0 837.4,717.8 845.9,716.8" fill="rgb(0,95,239)" stroke="#000" stroke-width="1" stroke-linejoin="round"/><polygon points="832.9,732.6 824.5,733.2 826.1,727.7 834.6,727.0" fill="rgb(0,75,239)" stroke="#000" stroke-width="1" stroke-linejoin="round"/><polygon points="811.6,748.8 801.5,748.0 803.0,742.7 813.1,743.4" fill="rgb(0,37,239)" stroke="#000" stroke-width="1" stroke-linejoin="round"/><polygon points="945.6,631.9 937.1,631.6 944.5,603.9 953.0,603.8" fill="rgb(0,239,167)" stroke="#000" stroke-width="1" stroke-linejoin="round"/><polygon points="1061.1,551.7 1052.6,552.9 1060.0,547.7 1068.5,544.9" fill="rgb(0,239,8)" stroke="#000" stroke-width="1" stroke-linejoin="round"/><polygon points="862.9,714.1 854.4,715.4 858.1,699.3 866.6,697.5" fill="rgb(0,134,239)" stroke="#000" stroke-width="1" stroke-linejoin="round"/><polygon points="821.6,743.4 813.1,743.4 814.5,738.9 823.0,738.6" fill="rgb(0,49,239)" stroke="#000" stroke-width="1" stroke-linejoin="round"/><polygon points="883.5,694.6 875.1,695.9 878.8,679.4 887.3,677.7" fill="rgb(0,183,239)" stroke="#000" stroke-width="1" stroke-linejoin="round"/><polygon points="987.0,592.2 978.5,591.2 985.8,568.8 994.3,570.5" fill="rgb(0,239,79)" stroke="#000" stroke-width="1" stroke-linejoin="round"/><polygon points="904.2,673.0 895.7,675.5 899.3,659.9 907.8,656.8" fill="rgb(0,226,239)" stroke="#000" stroke-width="1" stroke-linejoin="round"/><polygon points="831.5,738.2 823.0,738.6 824.5,733.2 832.9,732.6" fill="rgb(0,64,239)" stroke="#000" stroke-width="1" stroke-linejoin="round"/><polygon points="810.2,754.3 800.0,753.2 801.5,748.0 811.6,748.8" fill="rgb(0,26,239)" stroke="#000" stroke-width="1" stroke-linejoin="round"/><polygon points="924.8,650.1 916.3,654.3 920.1,639.2 928.6,634.3" fill="rgb(0,239,213)" stroke="#000" stroke-width="1" stroke-linejoin="round"/><polygon points="1028.2,566.2 1019.7,571.1 1027.1,557.5 1035.6,554.3" fill="rgb(0,239,36)" stroke="#000" stroke-width="1" stroke-linejoin="round"/><polygon points="851.5,725.1 843.0,726.1 845.9,716.8 854.4,715.4" fill="rgb(0,101,239)" stroke="#000" stroke-width="1" stroke-linejoin="round"/><polygon points="841.4,732.0 832.9,732.6 834.6,727.0 843.0,726.1" fill="rgb(0,80,239)" stroke="#000" stroke-width="1" stroke-linejoin="round"/><polygon points="954.1,630.8 945.6,631.9 953.0,603.8 961.5,602.0" fill="rgb(0,239,162)" stroke="#000" stroke-width="1" stroke-linejoin="round"/><polygon points="1067.9,551.5 1061.1,551.7 1068.5,544.9 1075.3,543.7" fill="rgb(0,239,2)" stroke="#000" stroke-width="1" stroke-linejoin="round"/><polygon points="820.1,749.2 811.6,748.8 813.1,743.4 821.6,743.4" fill="rgb(0,39,239)" stroke="#000" stroke-width="1" stroke-linejoin="round"/><polygon points="871.3,712.9 862.9,714.1 866.6,697.5 875.1,695.9" fill="rgb(0,141,239)" stroke="#000" stroke-width="1" stroke-linejoin="round"/><polygon points="809.3,757.7 799.1,756.3 800.0,753.2 810.2,754.3" fill="rgb(0,17,239)" stroke="#000" stroke-width="1" stroke-linejoin="round"/><polygon points="830.1,743.3 821.6,743.4 823.0,738.6 831.5,738.2" fill="rgb(0,54,239)" stroke="#000" stroke-width="1" stroke-linejoin="round"/><polygon points="892.0,692.8 883.5,694.6 887.3,677.7 895.7,675.5" fill="rgb(0,191,239)" stroke="#000" stroke-width="1" stroke-linejoin="round"/><polygon points="995.4,596.6 987.0,592.2 994.3,570.5 1002.7,576.0" fill="rgb(0,239,83)" stroke="#000" stroke-width="1" stroke-linejoin="round"/><polygon points="912.7,671.0 904.2,673.0 907.8,656.8 916.3,654.3" fill="rgb(0,233,239)" stroke="#000" stroke-width="1" stroke-linejoin="round"/><polygon points="808.5,759.9 798.4,758.4 799.1,756.3 809.3,757.7" fill="rgb(0,12,239)" stroke="#000" stroke-width="1" stroke-linejoin="round"/><polygon points="839.9,737.6 831.5,738.2 832.9,732.6 841.4,732.0" fill="rgb(0,69,239)" stroke="#000" stroke-width="1" stroke-linejoin="round"/><polygon points="933.3,648.0 924.8,650.1 928.6,634.3 937.1,631.6" fill="rgb(0,239,205)" stroke="#000" stroke-width="1" stroke-linejoin="round"/><polygon points="1036.7,559.8 1028.2,566.2 1035.6,554.3 1044.1,549.2" fill="rgb(0,239,21)" stroke="#000" stroke-width="1" stroke-linejoin="round"/><polygon points="818.6,755.0 810.2,754.3 811.6,748.8 820.1,749.2" fill="rgb(0,28,239)" stroke="#000" stroke-width="1" stroke-linejoin="round"/><polygon points="860.0,724.0 851.5,725.1 854.4,715.4 862.9,714.1" fill="rgb(0,107,239)" stroke="#000" stroke-width="1" stroke-linejoin="round"/><polygon points="1074.7,550.1 1067.9,551.5 1075.3,543.7 1082.1,541.2" fill="rgb(3,239,0)" stroke="#000" stroke-width="1" stroke-linejoin="round"/><polygon points="849.9,731.1 841.4,732.0 843.0,726.1 851.5,725.1" fill="rgb(0,86,239)" stroke="#000" stroke-width="1" stroke-linejoin="round"/><polygon points="808.2,760.8 798.0,759.1 798.4,758.4 808.5,759.9" fill="rgb(0,10,239)" stroke="#000" stroke-width="1" stroke-linejoin="round"/><polygon points="962.6,626.1 954.1,630.8 961.5,602.0 970.0,596.1" fill="rgb(0,239,151)" stroke="#000" stroke-width="1" stroke-linejoin="round"/><polygon points="828.6,749.4 820.1,749.2 821.6,743.4 830.1,743.3" fill="rgb(0,43,239)" stroke="#000" stroke-width="1" stroke-linejoin="round"/><polygon points="807.8,761.6 797.6,759.9 798.0,759.1 808.2,760.8" fill="rgb(0,8,239)" stroke="#000" stroke-width="1" stroke-linejoin="round"/><polygon points="879.8,711.9 871.3,712.9 875.1,695.9 883.5,694.6" fill="rgb(0,148,239)" stroke="#000" stroke-width="1" stroke-linejoin="round"/><polygon points="807.7,761.7 797.5,760.0 797.6,759.9 807.8,761.6" fill="rgb(0,7,239)" stroke="#000" stroke-width="1" stroke-linejoin="round"/><polygon points="838.6,743.0 830.1,743.3 831.5,738.2 839.9,737.6" fill="rgb(0,58,239)" stroke="#000" stroke-width="1" stroke-linejoin="round"/><polygon points="817.8,758.6 809.3,757.7 810.2,754.3 818.6,755.0" fill="rgb(0,19,239)" stroke="#000" stroke-width="1" stroke-linejoin="round"/><polygon points="900.5,690.9 892.0,692.8 895.7,675.5 904.2,673.0" fill="rgb(0,199,239)" stroke="#000" stroke-width="1" stroke-linejoin="round"/><polygon points="1003.9,597.9 995.4,596.6 1002.7,576.0 1011.2,577.7" fill="rgb(0,239,88)" stroke="#000" stroke-width="1" stroke-linejoin="round"/><polygon points="1078.0,548.9 1074.7,550.1 1082.1,541.2 1085.5,539.7" fill="rgb(8,239,0)" stroke="#000" stroke-width="1" stroke-linejoin="round"/><polygon points="921.2,667.6 912.7,671.0 916.3,654.3 924.8,650.1" fill="rgb(0,239,238)" stroke="#000" stroke-width="1" stroke-linejoin="round"/><polygon points="848.4,736.9 839.9,737.6 841.4,732.0 849.9,731.1" fill="rgb(0,74,239)" stroke="#000" stroke-width="1" stroke-linejoin="round"/><polygon points="941.7,648.5 933.3,648.0 937.1,631.6 945.6,631.9" fill="rgb(0,239,200)" stroke="#000" stroke-width="1" stroke-linejoin="round"/><polygon points="1045.2,561.4 1036.7,559.8 1044.1,549.2 1052.6,552.9" fill="rgb(0,239,14)" stroke="#000" stroke-width="1" stroke-linejoin="round"/><polygon points="817.0,761.1 808.5,759.9 809.3,757.7 817.8,758.6" fill="rgb(0,13,239)" stroke="#000" stroke-width="1" stroke-linejoin="round"/><polygon points="827.1,755.6 818.6,755.0 820.1,749.2 828.6,749.4" fill="rgb(0,30,239)" stroke="#000" stroke-width="1" stroke-linejoin="round"/><polygon points="868.5,723.1 860.0,724.0 862.9,714.1 871.3,712.9" fill="rgb(0,114,239)" stroke="#000" stroke-width="1" stroke-linejoin="round"/><polygon points="1081.4,547.8 1078.0,548.9 1085.5,539.7 1088.9,538.3" fill="rgb(12,239,0)" stroke="#000" stroke-width="1" stroke-linejoin="round"/><polygon points="858.4,730.2 849.9,731.1 851.5,725.1 860.0,724.0" fill="rgb(0,92,239)" stroke="#000" stroke-width="1" stroke-linejoin="round"/><polygon points="971.0,622.1 962.6,626.1 970.0,596.1 978.5,591.2" fill="rgb(0,239,136)" stroke="#000" stroke-width="1" stroke-linejoin="round"/><polygon points="816.7,762.1 808.2,760.8 808.5,759.9 817.0,761.1" fill="rgb(0,10,239)" stroke="#000" stroke-width="1" stroke-linejoin="round"/><polygon points="837.1,749.5 828.6,749.4 830.1,743.3 838.6,743.0" fill="rgb(0,46,239)" stroke="#000" stroke-width="1" stroke-linejoin="round"/><polygon points="888.3,710.6 879.8,711.9 883.5,694.6 892.0,692.8" fill="rgb(0,155,239)" stroke="#000" stroke-width="1" stroke-linejoin="round"/><polygon points="1084.8,546.8 1081.4,547.8 1088.9,538.3 1092.3,537.0" fill="rgb(16,239,0)" stroke="#000" stroke-width="1" stroke-linejoin="round"/><polygon points="816.3,763.1 807.8,761.6 808.2,760.8 816.7,762.1" fill="rgb(0,8,239)" stroke="#000" stroke-width="1" stroke-linejoin="round"/><polygon points="816.2,763.2 807.7,761.7 807.8,761.6 816.3,763.1" fill="rgb(0,7,239)" stroke="#000" stroke-width="1" stroke-linejoin="round"/><polygon points="847.1,742.7 838.6,743.0 839.9,737.6 848.4,736.9" fill="rgb(0,63,239)" stroke="#000" stroke-width="1" stroke-linejoin="round"/><polygon points="826.3,759.6 817.8,758.6 818.6,755.0 827.1,755.6" fill="rgb(0,20,239)" stroke="#000" stroke-width="1" stroke-linejoin="round"/><polygon points="909.0,689.3 900.5,690.9 904.2,673.0 912.7,671.0" fill="rgb(0,207,239)" stroke="#000" stroke-width="1" stroke-linejoin="round"/><polygon points="1012.4,595.8 1003.9,597.9 1011.2,577.7 1019.7,571.1" fill="rgb(0,239,81)" stroke="#000" stroke-width="1" stroke-linejoin="round"/><polygon points="929.7,666.0 921.2,667.6 924.8,650.1 933.3,648.0" fill="rgb(0,239,230)" stroke="#000" stroke-width="1" stroke-linejoin="round"/><polygon points="1088.2,545.5 1084.8,546.8 1092.3,537.0 1095.7,535.6" fill="rgb(20,239,0)" stroke="#000" stroke-width="1" stroke-linejoin="round"/><polygon points="856.9,736.2 848.4,736.9 849.9,731.1 858.4,730.2" fill="rgb(0,79,239)" stroke="#000" stroke-width="1" stroke-linejoin="round"/><polygon points="950.2,647.9 941.7,648.5 945.6,631.9 954.1,630.8" fill="rgb(0,239,197)" stroke="#000" stroke-width="1" stroke-linejoin="round"/><polygon points="1053.6,561.5 1045.2,561.4 1052.6,552.9 1061.1,551.7" fill="rgb(0,239,13)" stroke="#000" stroke-width="1" stroke-linejoin="round"/><polygon points="825.5,762.3 817.0,761.1 817.8,758.6 826.3,759.6" fill="rgb(0,14,239)" stroke="#000" stroke-width="1" stroke-linejoin="round"/><polygon points="835.6,756.1 827.1,755.6 828.6,749.4 837.1,749.5" fill="rgb(0,33,239)" stroke="#000" stroke-width="1" stroke-linejoin="round"/><polygon points="877.0,722.3 868.5,723.1 871.3,712.9 879.8,711.9" fill="rgb(0,120,239)" stroke="#000" stroke-width="1" stroke-linejoin="round"/><polygon points="866.9,729.4 858.4,730.2 860.0,724.0 868.5,723.1" fill="rgb(0,97,239)" stroke="#000" stroke-width="1" stroke-linejoin="round"/><polygon points="979.5,622.9 971.0,622.1 978.5,591.2 987.0,592.2" fill="rgb(0,239,129)" stroke="#000" stroke-width="1" stroke-linejoin="round"/><polygon points="1091.6,544.5 1088.2,545.5 1095.7,535.6 1099.1,535.5" fill="rgb(23,239,0)" stroke="#000" stroke-width="1" stroke-linejoin="round"/><polygon points="825.1,763.4 816.7,762.1 817.0,761.1 825.5,762.3" fill="rgb(0,10,239)" stroke="#000" stroke-width="1" stroke-linejoin="round"/><polygon points="845.6,749.5 837.1,749.5 838.6,743.0 847.1,742.7" fill="rgb(0,50,239)" stroke="#000" stroke-width="1" stroke-linejoin="round"/><polygon points="896.8,709.1 888.3,710.6 892.0,692.8 900.5,690.9" fill="rgb(0,162,239)" stroke="#000" stroke-width="1" stroke-linejoin="round"/><polygon points="824.8,764.5 816.3,763.1 816.7,762.1 825.1,763.4" fill="rgb(0,8,239)" stroke="#000" stroke-width="1" stroke-linejoin="round"/><polygon points="824.6,764.6 816.2,763.2 816.3,763.1 824.8,764.5" fill="rgb(0,7,239)" stroke="#000" stroke-width="1" stroke-linejoin="round"/><polygon points="855.5,742.3 847.1,742.7 848.4,736.9 856.9,736.2" fill="rgb(0,67,239)" stroke="#000" stroke-width="1" stroke-linejoin="round"/><polygon points="834.7,760.4 826.3,759.6 827.1,755.6 835.6,756.1" fill="rgb(0,22,239)" stroke="#000" stroke-width="1" stroke-linejoin="round"/><polygon points="917.5,686.5 909.0,689.3 912.7,671.0 921.2,667.6" fill="rgb(0,214,239)" stroke="#000" stroke-width="1" stroke-linejoin="round"/><polygon points="1020.9,586.5 1012.4,595.8 1019.7,571.1 1028.2,566.2" fill="rgb(0,239,64)" stroke="#000" stroke-width="1" stroke-linejoin="round"/><polygon points="1095.0,545.8 1091.6,544.5 1099.1,535.5 1102.4,535.4" fill="rgb(24,239,0)" stroke="#000" stroke-width="1" stroke-linejoin="round"/><polygon points="938.2,666.6 929.7,666.0 933.3,648.0 941.7,648.5" fill="rgb(0,239,226)" stroke="#000" stroke-width="1" stroke-linejoin="round"/><polygon points="1060.4,561.3 1053.6,561.5 1061.1,551.7 1067.9,551.5" fill="rgb(0,239,9)" stroke="#000" stroke-width="1" stroke-linejoin="round"/><polygon points="865.4,735.6 856.9,736.2 858.4,730.2 866.9,729.4" fill="rgb(0,85,239)" stroke="#000" stroke-width="1" stroke-linejoin="round"/><polygon points="958.7,643.9 950.2,647.9 954.1,630.8 962.6,626.1" fill="rgb(0,239,190)" stroke="#000" stroke-width="1" stroke-linejoin="round"/><polygon points="834.0,763.4 825.5,762.3 826.3,759.6 834.7,760.4" fill="rgb(0,15,239)" stroke="#000" stroke-width="1" stroke-linejoin="round"/><polygon points="844.1,756.6 835.6,756.1 837.1,749.5 845.6,749.5" fill="rgb(0,36,239)" stroke="#000" stroke-width="1" stroke-linejoin="round"/><polygon points="885.5,721.1 877.0,722.3 879.8,711.9 888.3,710.6" fill="rgb(0,126,239)" stroke="#000" stroke-width="1" stroke-linejoin="round"/><polygon points="875.4,728.8 866.9,729.4 868.5,723.1 877.0,722.3" fill="rgb(0,103,239)" stroke="#000" stroke-width="1" stroke-linejoin="round"/><polygon points="988.0,626.8 979.5,622.9 987.0,592.2 995.4,596.6" fill="rgb(0,239,131)" stroke="#000" stroke-width="1" stroke-linejoin="round"/><polygon points="1101.8,546.5 1095.0,545.8 1102.4,535.4 1109.2,536.5" fill="rgb(24,239,0)" stroke="#000" stroke-width="1" stroke-linejoin="round"/><polygon points="833.6,764.6 825.1,763.4 825.5,762.3 834.0,763.4" fill="rgb(0,11,239)" stroke="#000" stroke-width="1" stroke-linejoin="round"/><polygon points="854.1,749.5 845.6,749.5 847.1,742.7 855.5,742.3" fill="rgb(0,54,239)" stroke="#000" stroke-width="1" stroke-linejoin="round"/><polygon points="905.3,707.8 896.8,709.1 900.5,690.9 909.0,689.3" fill="rgb(0,169,239)" stroke="#000" stroke-width="1" stroke-linejoin="round"/><polygon points="833.3,765.8 824.8,764.5 825.1,763.4 833.6,764.6" fill="rgb(0,9,239)" stroke="#000" stroke-width="1" stroke-linejoin="round"/><polygon points="833.1,765.9 824.6,764.6 824.8,764.5 833.3,765.8" fill="rgb(0,8,239)" stroke="#000" stroke-width="1" stroke-linejoin="round"/><polygon points="864.0,742.0 855.5,742.3 856.9,736.2 865.4,735.6" fill="rgb(0,72,239)" stroke="#000" stroke-width="1" stroke-linejoin="round"/><polygon points="843.2,761.2 834.7,760.4 835.6,756.1 844.1,756.6" fill="rgb(0,24,239)" stroke="#000" stroke-width="1" stroke-linejoin="round"/><polygon points="926.0,685.2 917.5,686.5 921.2,667.6 929.7,666.0" fill="rgb(0,220,239)" stroke="#000" stroke-width="1" stroke-linejoin="round"/><polygon points="1029.4,578.6 1020.9,586.5 1028.2,566.2 1036.7,559.8" fill="rgb(0,239,45)" stroke="#000" stroke-width="1" stroke-linejoin="round"/><polygon points="1067.2,560.3 1060.4,561.3 1067.9,551.5 1074.7,550.1" fill="rgb(0,239,5)" stroke="#000" stroke-width="1" stroke-linejoin="round"/><polygon points="946.6,666.3 938.2,666.6 941.7,648.5 950.2,647.9" fill="rgb(0,239,224)" stroke="#000" stroke-width="1" stroke-linejoin="round"/><polygon points="873.9,735.0 865.4,735.6 866.9,729.4 875.4,728.8" fill="rgb(0,90,239)" stroke="#000" stroke-width="1" stroke-linejoin="round"/><polygon points="967.2,640.4 958.7,643.9 962.6,626.1 971.0,622.1" fill="rgb(0,239,180)" stroke="#000" stroke-width="1" stroke-linejoin="round"/><polygon points="842.5,764.5 834.0,763.4 834.7,760.4 843.2,761.2" fill="rgb(0,16,239)" stroke="#000" stroke-width="1" stroke-linejoin="round"/><polygon points="852.6,757.1 844.1,756.6 845.6,749.5 854.1,749.5" fill="rgb(0,39,239)" stroke="#000" stroke-width="1" stroke-linejoin="round"/><polygon points="893.9,719.9 885.5,721.1 888.3,710.6 896.8,709.1" fill="rgb(0,132,239)" stroke="#000" stroke-width="1" stroke-linejoin="round"/><polygon points="883.8,727.8 875.4,728.8 877.0,722.3 885.5,721.1" fill="rgb(0,109,239)" stroke="#000" stroke-width="1" stroke-linejoin="round"/><polygon points="996.5,628.0 988.0,626.8 995.4,596.6 1003.9,597.9" fill="rgb(0,239,134)" stroke="#000" stroke-width="1" stroke-linejoin="round"/><polygon points="842.1,765.9 833.6,764.6 834.0,763.4 842.5,764.5" fill="rgb(0,12,239)" stroke="#000" stroke-width="1" stroke-linejoin="round"/><polygon points="862.5,749.6 854.1,749.5 855.5,742.3 864.0,742.0" fill="rgb(0,58,239)" stroke="#000" stroke-width="1" stroke-linejoin="round"/><polygon points="1070.6,559.2 1067.2,560.3 1074.7,550.1 1078.0,548.9" fill="rgb(0,239,0)" stroke="#000" stroke-width="1" stroke-linejoin="round"/><polygon points="913.8,705.7 905.3,707.8 909.0,689.3 917.5,686.5" fill="rgb(0,178,239)" stroke="#000" stroke-width="1" stroke-linejoin="round"/><polygon points="841.7,767.2 833.3,765.8 833.6,764.6 842.1,765.9" fill="rgb(0,9,239)" stroke="#000" stroke-width="1" stroke-linejoin="round"/><polygon points="841.6,767.3 833.1,765.9 833.3,765.8 841.7,767.2" fill="rgb(0,8,239)" stroke="#000" stroke-width="1" stroke-linejoin="round"/><polygon points="872.5,741.8 864.0,742.0 865.4,735.6 873.9,735.0" fill="rgb(0,77,239)" stroke="#000" stroke-width="1" stroke-linejoin="round"/><polygon points="851.7,762.1 843.2,761.2 844.1,756.6 852.6,757.1" fill="rgb(0,26,239)" stroke="#000" stroke-width="1" stroke-linejoin="round"/><polygon points="934.4,685.6 926.0,685.2 929.7,666.0 938.2,666.6" fill="rgb(0,224,239)" stroke="#000" stroke-width="1" stroke-linejoin="round"/><polygon points="1037.9,577.1 1029.4,578.6 1036.7,559.8 1045.2,561.4" fill="rgb(0,239,33)" stroke="#000" stroke-width="1" stroke-linejoin="round"/><polygon points="1074.0,558.2 1070.6,559.2 1078.0,548.9 1081.4,547.8" fill="rgb(2,239,0)" stroke="#000" stroke-width="1" stroke-linejoin="round"/><polygon points="955.1,662.9 946.6,666.3 950.2,647.9 958.7,643.9" fill="rgb(0,239,218)" stroke="#000" stroke-width="1" stroke-linejoin="round"/><polygon points="882.4,734.2 873.9,735.0 875.4,728.8 883.8,727.8" fill="rgb(0,95,239)" stroke="#000" stroke-width="1" stroke-linejoin="round"/><polygon points="975.7,641.2 967.2,640.4 971.0,622.1 979.5,622.9" fill="rgb(0,239,175)" stroke="#000" stroke-width="1" stroke-linejoin="round"/><polygon points="851.0,765.7 842.5,764.5 843.2,761.2 851.7,762.1" fill="rgb(0,17,239)" stroke="#000" stroke-width="1" stroke-linejoin="round"/><polygon points="861.1,757.7 852.6,757.1 854.1,749.5 862.5,749.6" fill="rgb(0,42,239)" stroke="#000" stroke-width="1" stroke-linejoin="round"/><polygon points="902.4,718.8 893.9,719.9 896.8,709.1 905.3,707.8" fill="rgb(0,139,239)" stroke="#000" stroke-width="1" stroke-linejoin="round"/><polygon points="1077.4,557.5 1074.0,558.2 1081.4,547.8 1084.8,546.8" fill="rgb(6,239,0)" stroke="#000" stroke-width="1" stroke-linejoin="round"/><polygon points="892.3,726.7 883.8,727.8 885.5,721.1 893.9,719.9" fill="rgb(0,115,239)" stroke="#000" stroke-width="1" stroke-linejoin="round"/><polygon points="1005.0,629.5 996.5,628.0 1003.9,597.9 1012.4,595.8" fill="rgb(0,239,132)" stroke="#000" stroke-width="1" stroke-linejoin="round"/><polygon points="850.6,767.2 842.1,765.9 842.5,764.5 851.0,765.7" fill="rgb(0,12,239)" stroke="#000" stroke-width="1" stroke-linejoin="round"/><polygon points="871.0,749.7 862.5,749.6 864.0,742.0 872.5,741.8" fill="rgb(0,62,239)" stroke="#000" stroke-width="1" stroke-linejoin="round"/><polygon points="922.2,704.6 913.8,705.7 917.5,686.5 926.0,685.2" fill="rgb(0,186,239)" stroke="#000" stroke-width="1" stroke-linejoin="round"/><polygon points="850.2,768.7 841.7,767.2 842.1,765.9 850.6,767.2" fill="rgb(0,9,239)" stroke="#000" stroke-width="1" stroke-linejoin="round"/><polygon points="1080.8,556.7 1077.4,557.5 1084.8,546.8 1088.2,545.5" fill="rgb(9,239,0)" stroke="#000" stroke-width="1" stroke-linejoin="round"/><polygon points="850.1,768.8 841.6,767.3 841.7,767.2 850.2,768.7" fill="rgb(0,8,239)" stroke="#000" stroke-width="1" stroke-linejoin="round"/><polygon points="881.0,741.2 872.5,741.8 873.9,735.0 882.4,734.2" fill="rgb(0,82,239)" stroke="#000" stroke-width="1" stroke-linejoin="round"/><polygon points="860.2,762.9 851.7,762.1 852.6,757.1 861.1,757.7" fill="rgb(0,28,239)" stroke="#000" stroke-width="1" stroke-linejoin="round"/><polygon points="942.9,685.5 934.4,685.6 938.2,666.6 946.6,666.3" fill="rgb(0,226,239)" stroke="#000" stroke-width="1" stroke-linejoin="round"/><polygon points="1046.3,576.6 1037.9,577.1 1045.2,561.4 1053.6,561.5" fill="rgb(0,239,29)" stroke="#000" stroke-width="1" stroke-linejoin="round"/><polygon points="963.6,659.9 955.1,662.9 958.7,643.9 967.2,640.4" fill="rgb(0,239,209)" stroke="#000" stroke-width="1" stroke-linejoin="round"/><polygon points="1084.2,556.7 1080.8,556.7 1088.2,545.5 1091.6,544.5" fill="rgb(12,239,0)" stroke="#000" stroke-width="1" stroke-linejoin="round"/><polygon points="890.8,733.3 882.4,734.2 883.8,727.8 892.3,726.7" fill="rgb(0,101,239)" stroke="#000" stroke-width="1" stroke-linejoin="round"/><polygon points="984.2,644.6 975.7,641.2 979.5,622.9 988.0,626.8" fill="rgb(0,239,177)" stroke="#000" stroke-width="1" stroke-linejoin="round"/><polygon points="859.4,766.8 851.0,765.7 851.7,762.1 860.2,762.9" fill="rgb(0,18,239)" stroke="#000" stroke-width="1" stroke-linejoin="round"/><polygon points="869.5,758.2 861.1,757.7 862.5,749.6 871.0,749.7" fill="rgb(0,44,239)" stroke="#000" stroke-width="1" stroke-linejoin="round"/><polygon points="910.9,716.9 902.4,718.8 905.3,707.8 913.8,705.7" fill="rgb(0,147,239)" stroke="#000" stroke-width="1" stroke-linejoin="round"/><polygon points="900.8,725.8 892.3,726.7 893.9,719.9 902.4,718.8" fill="rgb(0,121,239)" stroke="#000" stroke-width="1" stroke-linejoin="round"/><polygon points="1013.5,618.9 1005.0,629.5 1012.4,595.8 1020.9,586.5" fill="rgb(0,239,117)" stroke="#000" stroke-width="1" stroke-linejoin="round"/><polygon points="859.1,768.5 850.6,767.2 851.0,765.7 859.4,766.8" fill="rgb(0,13,239)" stroke="#000" stroke-width="1" stroke-linejoin="round"/><polygon points="879.5,749.6 871.0,749.7 872.5,741.8 881.0,741.2" fill="rgb(0,66,239)" stroke="#000" stroke-width="1" stroke-linejoin="round"/><polygon points="1087.6,556.7 1084.2,556.7 1091.6,544.5 1095.0,545.8" fill="rgb(13,239,0)" stroke="#000" stroke-width="1" stroke-linejoin="round"/><polygon points="930.7,704.9 922.2,704.6 926.0,685.2 934.4,685.6" fill="rgb(0,190,239)" stroke="#000" stroke-width="1" stroke-linejoin="round"/><polygon points="858.7,770.1 850.2,768.7 850.6,767.2 859.1,768.5" fill="rgb(0,9,239)" stroke="#000" stroke-width="1" stroke-linejoin="round"/><polygon points="1053.1,576.0 1046.3,576.6 1053.6,561.5 1060.4,561.3" fill="rgb(0,239,26)" stroke="#000" stroke-width="1" stroke-linejoin="round"/><polygon points="858.6,770.2 850.1,768.8 850.2,768.7 858.7,770.1" fill="rgb(0,8,239)" stroke="#000" stroke-width="1" stroke-linejoin="round"/><polygon points="889.5,740.7 881.0,741.2 882.4,734.2 890.8,733.3" fill="rgb(0,87,239)" stroke="#000" stroke-width="1" stroke-linejoin="round"/><polygon points="868.7,763.8 860.2,762.9 861.1,757.7 869.5,758.2" fill="rgb(0,30,239)" stroke="#000" stroke-width="1" stroke-linejoin="round"/><polygon points="951.4,682.5 942.9,685.5 946.6,666.3 955.1,662.9" fill="rgb(0,231,239)" stroke="#000" stroke-width="1" stroke-linejoin="round"/><polygon points="972.1,660.3 963.6,659.9 967.2,640.4 975.7,641.2" fill="rgb(0,239,204)" stroke="#000" stroke-width="1" stroke-linejoin="round"/><polygon points="1094.4,557.2 1087.6,556.7 1095.0,545.8 1101.8,546.5" fill="rgb(13,239,0)" stroke="#000" stroke-width="1" stroke-linejoin="round"/><polygon points="899.3,732.5 890.8,733.3 892.3,726.7 900.8,725.8" fill="rgb(0,107,239)" stroke="#000" stroke-width="1" stroke-linejoin="round"/><polygon points="992.6,645.9 984.2,644.6 988.0,626.8 996.5,628.0" fill="rgb(0,239,178)" stroke="#000" stroke-width="1" stroke-linejoin="round"/><polygon points="867.9,768.0 859.4,766.8 860.2,762.9 868.7,763.8" fill="rgb(0,19,239)" stroke="#000" stroke-width="1" stroke-linejoin="round"/><polygon points="878.0,758.5 869.5,758.2 871.0,749.7 879.5,749.6" fill="rgb(0,47,239)" stroke="#000" stroke-width="1" stroke-linejoin="round"/><polygon points="919.4,716.0 910.9,716.9 913.8,705.7 922.2,704.6" fill="rgb(0,154,239)" stroke="#000" stroke-width="1" stroke-linejoin="round"/><polygon points="909.3,724.1 900.8,725.8 902.4,718.8 910.9,716.9" fill="rgb(0,128,239)" stroke="#000" stroke-width="1" stroke-linejoin="round"/><polygon points="1021.9,610.6 1013.5,618.9 1020.9,586.5 1029.4,578.6" fill="rgb(0,239,92)" stroke="#000" stroke-width="1" stroke-linejoin="round"/><polygon points="867.6,769.8 859.1,768.5 859.4,766.8 867.9,768.0" fill="rgb(0,13,239)" stroke="#000" stroke-width="1" stroke-linejoin="round"/><polygon points="888.0,749.5 879.5,749.6 881.0,741.2 889.5,740.7" fill="rgb(0,70,239)" stroke="#000" stroke-width="1" stroke-linejoin="round"/><polygon points="1059.9,574.9 1053.1,576.0 1060.4,561.3 1067.2,560.3" fill="rgb(0,239,22)" stroke="#000" stroke-width="1" stroke-linejoin="round"/><polygon points="939.2,704.8 930.7,704.9 934.4,685.6 942.9,685.5" fill="rgb(0,194,239)" stroke="#000" stroke-width="1" stroke-linejoin="round"/><polygon points="867.2,771.5 858.7,770.1 859.1,768.5 867.6,769.8" fill="rgb(0,10,239)" stroke="#000" stroke-width="1" stroke-linejoin="round"/><polygon points="867.1,771.6 858.6,770.2 858.7,770.1 867.2,771.5" fill="rgb(0,8,239)" stroke="#000" stroke-width="1" stroke-linejoin="round"/><polygon points="898.0,740.2 889.5,740.7 890.8,733.3 899.3,732.5" fill="rgb(0,92,239)" stroke="#000" stroke-width="1" stroke-linejoin="round"/><polygon points="877.2,764.4 868.7,763.8 869.5,758.2 878.0,758.5" fill="rgb(0,32,239)" stroke="#000" stroke-width="1" stroke-linejoin="round"/><polygon points="959.9,679.8 951.4,682.5 955.1,662.9 963.6,659.9" fill="rgb(0,239,239)" stroke="#000" stroke-width="1" stroke-linejoin="round"/><polygon points="980.6,663.3 972.1,660.3 975.7,641.2 984.2,644.6" fill="rgb(0,239,205)" stroke="#000" stroke-width="1" stroke-linejoin="round"/><polygon points="907.8,731.0 899.3,732.5 900.8,725.8 909.3,724.1" fill="rgb(0,114,239)" stroke="#000" stroke-width="1" stroke-linejoin="round"/><polygon points="1063.3,573.6 1059.9,574.9 1067.2,560.3 1070.6,559.2" fill="rgb(0,239,17)" stroke="#000" stroke-width="1" stroke-linejoin="round"/><polygon points="1001.1,648.1 992.6,645.9 996.5,628.0 1005.0,629.5" fill="rgb(0,239,179)" stroke="#000" stroke-width="1" stroke-linejoin="round"/><polygon points="876.4,769.0 867.9,768.0 868.7,763.8 877.2,764.4" fill="rgb(0,21,239)" stroke="#000" stroke-width="1" stroke-linejoin="round"/><polygon points="886.5,758.9 878.0,758.5 879.5,749.6 888.0,749.5" fill="rgb(0,51,239)" stroke="#000" stroke-width="1" stroke-linejoin="round"/><polygon points="927.9,716.1 919.4,716.0 922.2,704.6 930.7,704.9" fill="rgb(0,158,239)" stroke="#000" stroke-width="1" stroke-linejoin="round"/><polygon points="917.8,723.3 909.3,724.1 910.9,716.9 919.4,716.0" fill="rgb(0,135,239)" stroke="#000" stroke-width="1" stroke-linejoin="round"/><polygon points="1030.4,604.3 1021.9,610.6 1029.4,578.6 1037.9,577.1" fill="rgb(0,239,75)" stroke="#000" stroke-width="1" stroke-linejoin="round"/><polygon points="876.0,770.9 867.6,769.8 867.9,768.0 876.4,769.0" fill="rgb(0,14,239)" stroke="#000" stroke-width="1" stroke-linejoin="round"/><polygon points="896.5,749.4 888.0,749.5 889.5,740.7 898.0,740.2" fill="rgb(0,74,239)" stroke="#000" stroke-width="1" stroke-linejoin="round"/><polygon points="1066.7,573.6 1063.3,573.6 1070.6,559.2 1074.0,558.2" fill="rgb(0,239,14)" stroke="#000" stroke-width="1" stroke-linejoin="round"/><polygon points="947.7,702.3 939.2,704.8 942.9,685.5 951.4,682.5" fill="rgb(0,201,239)" stroke="#000" stroke-width="1" stroke-linejoin="round"/><polygon points="875.7,772.8 867.2,771.5 867.6,769.8 876.0,770.9" fill="rgb(0,10,239)" stroke="#000" stroke-width="1" stroke-linejoin="round"/><polygon points="875.5,772.9 867.1,771.6 867.2,771.5 875.7,772.8" fill="rgb(0,8,239)" stroke="#000" stroke-width="1" stroke-linejoin="round"/><polygon points="906.4,739.2 898.0,740.2 899.3,732.5 907.8,731.0" fill="rgb(0,98,239)" stroke="#000" stroke-width="1" stroke-linejoin="round"/><polygon points="885.6,765.2 877.2,764.4 878.0,758.5 886.5,758.9" fill="rgb(0,34,239)" stroke="#000" stroke-width="1" stroke-linejoin="round"/><polygon points="968.4,679.9 959.9,679.8 963.6,659.9 972.1,660.3" fill="rgb(0,239,234)" stroke="#000" stroke-width="1" stroke-linejoin="round"/><polygon points="1070.1,573.4 1066.7,573.6 1074.0,558.2 1077.4,557.5" fill="rgb(0,239,11)" stroke="#000" stroke-width="1" stroke-linejoin="round"/><polygon points="989.1,664.4 980.6,663.3 984.2,644.6 992.6,645.9" fill="rgb(0,239,206)" stroke="#000" stroke-width="1" stroke-linejoin="round"/><polygon points="916.3,730.3 907.8,731.0 909.3,724.1 917.8,723.3" fill="rgb(0,120,239)" stroke="#000" stroke-width="1" stroke-linejoin="round"/><polygon points="1009.6,638.1 1001.1,648.1 1005.0,629.5 1013.5,618.9" fill="rgb(0,239,168)" stroke="#000" stroke-width="1" stroke-linejoin="round"/><polygon points="884.9,770.1 876.4,769.0 877.2,764.4 885.6,765.2" fill="rgb(0,22,239)" stroke="#000" stroke-width="1" stroke-linejoin="round"/><polygon points="895.0,759.2 886.5,758.9 888.0,749.5 896.5,749.4" fill="rgb(0,54,239)" stroke="#000" stroke-width="1" stroke-linejoin="round"/><polygon points="936.4,716.1 927.9,716.1 930.7,704.9 939.2,704.8" fill="rgb(0,162,239)" stroke="#000" stroke-width="1" stroke-linejoin="round"/><polygon points="1073.5,573.4 1070.1,573.4 1077.4,557.5 1080.8,556.7" fill="rgb(0,239,9)" stroke="#000" stroke-width="1" stroke-linejoin="round"/><polygon points="926.3,723.4 917.8,723.3 919.4,716.0 927.9,716.1" fill="rgb(0,139,239)" stroke="#000" stroke-width="1" stroke-linejoin="round"/><polygon points="1038.9,601.4 1030.4,604.3 1037.9,577.1 1046.3,576.6" fill="rgb(0,239,65)" stroke="#000" stroke-width="1" stroke-linejoin="round"/><polygon points="884.5,772.2 876.0,770.9 876.4,769.0 884.9,770.1" fill="rgb(0,15,239)" stroke="#000" stroke-width="1" stroke-linejoin="round"/><polygon points="905.0,748.8 896.5,749.4 898.0,740.2 906.4,739.2" fill="rgb(0,79,239)" stroke="#000" stroke-width="1" stroke-linejoin="round"/><polygon points="956.2,699.8 947.7,702.3 951.4,682.5 959.9,679.8" fill="rgb(0,209,239)" stroke="#000" stroke-width="1" stroke-linejoin="round"/><polygon points="884.2,774.3 875.7,772.8 876.0,770.9 884.5,772.2" fill="rgb(0,10,239)" stroke="#000" stroke-width="1" stroke-linejoin="round"/><polygon points="1076.9,574.1 1073.5,573.4 1080.8,556.7 1084.2,556.7" fill="rgb(0,239,8)" stroke="#000" stroke-width="1" stroke-linejoin="round"/><polygon points="884.0,774.3 875.5,772.9 875.7,772.8 884.2,774.3" fill="rgb(0,8,239)" stroke="#000" stroke-width="1" stroke-linejoin="round"/><polygon points="914.9,738.8 906.4,739.2 907.8,731.0 916.3,730.3" fill="rgb(0,104,239)" stroke="#000" stroke-width="1" stroke-linejoin="round"/><polygon points="894.1,765.9 885.6,765.2 886.5,758.9 895.0,759.2" fill="rgb(0,36,239)" stroke="#000" stroke-width="1" stroke-linejoin="round"/><polygon points="976.9,682.1 968.4,679.9 972.1,660.3 980.6,663.3" fill="rgb(0,239,234)" stroke="#000" stroke-width="1" stroke-linejoin="round"/><polygon points="997.5,666.8 989.1,664.4 992.6,645.9 1001.1,648.1" fill="rgb(0,239,207)" stroke="#000" stroke-width="1" stroke-linejoin="round"/><polygon points="924.8,730.3 916.3,730.3 917.8,723.3 926.3,723.4" fill="rgb(0,124,239)" stroke="#000" stroke-width="1" stroke-linejoin="round"/><polygon points="1080.3,574.0 1076.9,574.1 1084.2,556.7 1087.6,556.7" fill="rgb(0,239,7)" stroke="#000" stroke-width="1" stroke-linejoin="round"/><polygon points="1018.1,630.6 1009.6,638.1 1013.5,618.9 1021.9,610.6" fill="rgb(0,239,143)" stroke="#000" stroke-width="1" stroke-linejoin="round"/><polygon points="893.4,771.1 884.9,770.1 885.6,765.2 894.1,765.9" fill="rgb(0,23,239)" stroke="#000" stroke-width="1" stroke-linejoin="round"/><polygon points="903.5,759.2 895.0,759.2 896.5,749.4 905.0,748.8" fill="rgb(0,58,239)" stroke="#000" stroke-width="1" stroke-linejoin="round"/><polygon points="944.8,713.8 936.4,716.1 939.2,704.8 947.7,702.3" fill="rgb(0,168,239)" stroke="#000" stroke-width="1" stroke-linejoin="round"/><polygon points="1045.7,598.1 1038.9,601.4 1046.3,576.6 1053.1,576.0" fill="rgb(0,239,58)" stroke="#000" stroke-width="1" stroke-linejoin="round"/><polygon points="934.7,723.4 926.3,723.4 927.9,716.1 936.4,716.1" fill="rgb(0,143,239)" stroke="#000" stroke-width="1" stroke-linejoin="round"/><polygon points="893.0,773.4 884.5,772.2 884.9,770.1 893.4,771.1" fill="rgb(0,15,239)" stroke="#000" stroke-width="1" stroke-linejoin="round"/><polygon points="913.4,748.8 905.0,748.8 906.4,739.2 914.9,738.8" fill="rgb(0,84,239)" stroke="#000" stroke-width="1" stroke-linejoin="round"/><polygon points="964.7,699.3 956.2,699.8 959.9,679.8 968.4,679.9" fill="rgb(0,214,239)" stroke="#000" stroke-width="1" stroke-linejoin="round"/><polygon points="892.6,775.6 884.2,774.3 884.5,772.2 893.0,773.4" fill="rgb(0,11,239)" stroke="#000" stroke-width="1" stroke-linejoin="round"/><polygon points="1087.1,574.8 1080.3,574.0 1087.6,556.7 1094.4,557.2" fill="rgb(0,239,5)" stroke="#000" stroke-width="1" stroke-linejoin="round"/><polygon points="892.5,775.7 884.0,774.3 884.2,774.3 892.6,775.6" fill="rgb(0,8,239)" stroke="#000" stroke-width="1" stroke-linejoin="round"/><polygon points="923.4,738.9 914.9,738.8 916.3,730.3 924.8,730.3" fill="rgb(0,108,239)" stroke="#000" stroke-width="1" stroke-linejoin="round"/><polygon points="902.6,766.4 894.1,765.9 895.0,759.2 903.5,759.2" fill="rgb(0,39,239)" stroke="#000" stroke-width="1" stroke-linejoin="round"/><polygon points="985.3,683.0 976.9,682.1 980.6,663.3 989.1,664.4" fill="rgb(0,239,235)" stroke="#000" stroke-width="1" stroke-linejoin="round"/><polygon points="1006.0,657.8 997.5,666.8 1001.1,648.1 1009.6,638.1" fill="rgb(0,239,198)" stroke="#000" stroke-width="1" stroke-linejoin="round"/><polygon points="933.3,730.3 924.8,730.3 926.3,723.4 934.7,723.4" fill="rgb(0,128,239)" stroke="#000" stroke-width="1" stroke-linejoin="round"/><polygon points="1052.5,597.8 1045.7,598.1 1053.1,576.0 1059.9,574.9" fill="rgb(0,239,53)" stroke="#000" stroke-width="1" stroke-linejoin="round"/><polygon points="1026.6,624.5 1018.1,630.6 1021.9,610.6 1030.4,604.3" fill="rgb(0,239,124)" stroke="#000" stroke-width="1" stroke-linejoin="round"/><polygon points="901.9,771.9 893.4,771.1 894.1,765.9 902.6,766.4" fill="rgb(0,25,239)" stroke="#000" stroke-width="1" stroke-linejoin="round"/><polygon points="912.0,759.6 903.5,759.2 905.0,748.8 913.4,748.8" fill="rgb(0,61,239)" stroke="#000" stroke-width="1" stroke-linejoin="round"/><polygon points="953.3,711.4 944.8,713.8 947.7,702.3 956.2,699.8" fill="rgb(0,178,239)" stroke="#000" stroke-width="1" stroke-linejoin="round"/><polygon points="943.2,721.3 934.7,723.4 936.4,716.1 944.8,713.8" fill="rgb(0,149,239)" stroke="#000" stroke-width="1" stroke-linejoin="round"/><polygon points="901.5,774.3 893.0,773.4 893.4,771.1 901.9,771.9" fill="rgb(0,16,239)" stroke="#000" stroke-width="1" stroke-linejoin="round"/><polygon points="921.9,749.0 913.4,748.8 914.9,738.8 923.4,738.9" fill="rgb(0,87,239)" stroke="#000" stroke-width="1" stroke-linejoin="round"/><polygon points="973.1,700.8 964.7,699.3 968.4,679.9 976.9,682.1" fill="rgb(0,215,239)" stroke="#000" stroke-width="1" stroke-linejoin="round"/><polygon points="901.1,776.7 892.6,775.6 893.0,773.4 901.5,774.3" fill="rgb(0,11,239)" stroke="#000" stroke-width="1" stroke-linejoin="round"/><polygon points="1055.9,598.4 1052.5,597.8 1059.9,574.9 1063.3,573.6" fill="rgb(0,239,49)" stroke="#000" stroke-width="1" stroke-linejoin="round"/><polygon points="901.0,776.8 892.5,775.7 892.6,775.6 901.1,776.7" fill="rgb(0,9,239)" stroke="#000" stroke-width="1" stroke-linejoin="round"/><polygon points="931.9,739.2 923.4,738.9 924.8,730.3 933.3,730.3" fill="rgb(0,111,239)" stroke="#000" stroke-width="1" stroke-linejoin="round"/><polygon points="911.1,767.1 902.6,766.4 903.5,759.2 912.0,759.6" fill="rgb(0,41,239)" stroke="#000" stroke-width="1" stroke-linejoin="round"/><polygon points="993.8,686.5 985.3,683.0 989.1,664.4 997.5,666.8" fill="rgb(0,239,236)" stroke="#000" stroke-width="1" stroke-linejoin="round"/><polygon points="1014.5,651.5 1006.0,657.8 1009.6,638.1 1018.1,630.6" fill="rgb(0,239,181)" stroke="#000" stroke-width="1" stroke-linejoin="round"/><polygon points="941.7,728.3 933.3,730.3 934.7,723.4 943.2,721.3" fill="rgb(0,134,239)" stroke="#000" stroke-width="1" stroke-linejoin="round"/><polygon points="1059.3,599.0 1055.9,598.4 1063.3,573.6 1066.7,573.6" fill="rgb(0,239,48)" stroke="#000" stroke-width="1" stroke-linejoin="round"/><polygon points="1035.1,619.8 1026.6,624.5 1030.4,604.3 1038.9,601.4" fill="rgb(0,239,109)" stroke="#000" stroke-width="1" stroke-linejoin="round"/><polygon points="910.3,773.0 901.9,771.9 902.6,766.4 911.1,767.1" fill="rgb(0,27,239)" stroke="#000" stroke-width="1" stroke-linejoin="round"/><polygon points="920.4,760.0 912.0,759.6 913.4,748.8 921.9,749.0" fill="rgb(0,64,239)" stroke="#000" stroke-width="1" stroke-linejoin="round"/><polygon points="961.8,710.6 953.3,711.4 956.2,699.8 964.7,699.3" fill="rgb(0,185,239)" stroke="#000" stroke-width="1" stroke-linejoin="round"/><polygon points="951.7,719.0 943.2,721.3 944.8,713.8 953.3,711.4" fill="rgb(0,158,239)" stroke="#000" stroke-width="1" stroke-linejoin="round"/><polygon points="910.0,775.5 901.5,774.3 901.9,771.9 910.3,773.0" fill="rgb(0,17,239)" stroke="#000" stroke-width="1" stroke-linejoin="round"/><polygon points="930.4,749.5 921.9,749.0 923.4,738.9 931.9,739.2" fill="rgb(0,90,239)" stroke="#000" stroke-width="1" stroke-linejoin="round"/><polygon points="1062.7,599.5 1059.3,599.0 1066.7,573.6 1070.1,573.4" fill="rgb(0,239,47)" stroke="#000" stroke-width="1" stroke-linejoin="round"/><polygon points="981.6,701.4 973.1,700.8 976.9,682.1 985.3,683.0" fill="rgb(0,215,239)" stroke="#000" stroke-width="1" stroke-linejoin="round"/><polygon points="909.6,778.0 901.1,776.7 901.5,774.3 910.0,775.5" fill="rgb(0,12,239)" stroke="#000" stroke-width="1" stroke-linejoin="round"/><polygon points="909.5,778.1 901.0,776.8 901.1,776.7 909.6,778.0" fill="rgb(0,9,239)" stroke="#000" stroke-width="1" stroke-linejoin="round"/><polygon points="940.4,737.5 931.9,739.2 933.3,730.3 941.7,728.3" fill="rgb(0,117,239)" stroke="#000" stroke-width="1" stroke-linejoin="round"/><polygon points="919.6,767.6 911.1,767.1 912.0,759.6 920.4,760.0" fill="rgb(0,44,239)" stroke="#000" stroke-width="1" stroke-linejoin="round"/><polygon points="1002.3,677.2 993.8,686.5 997.5,666.8 1006.0,657.8" fill="rgb(0,239,228)" stroke="#000" stroke-width="1" stroke-linejoin="round"/><polygon points="1066.1,600.1 1062.7,599.5 1070.1,573.4 1073.5,573.4" fill="rgb(0,239,46)" stroke="#000" stroke-width="1" stroke-linejoin="round"/><polygon points="1023.0,646.5 1014.5,651.5 1018.1,630.6 1026.6,624.5" fill="rgb(0,239,166)" stroke="#000" stroke-width="1" stroke-linejoin="round"/><polygon points="1041.9,615.1 1035.1,619.8 1038.9,601.4 1045.7,598.1" fill="rgb(0,239,97)" stroke="#000" stroke-width="1" stroke-linejoin="round"/><polygon points="950.2,726.0 941.7,728.3 943.2,721.3 951.7,719.0" fill="rgb(0,143,239)" stroke="#000" stroke-width="1" stroke-linejoin="round"/><polygon points="918.8,773.6 910.3,773.0 911.1,767.1 919.6,767.6" fill="rgb(0,28,239)" stroke="#000" stroke-width="1" stroke-linejoin="round"/><polygon points="928.9,760.8 920.4,760.0 921.9,749.0 930.4,749.5" fill="rgb(0,67,239)" stroke="#000" stroke-width="1" stroke-linejoin="round"/><polygon points="970.3,711.7 961.8,710.6 964.7,699.3 973.1,700.8" fill="rgb(0,188,239)" stroke="#000" stroke-width="1" stroke-linejoin="round"/><polygon points="1069.4,600.7 1066.1,600.1 1073.5,573.4 1076.9,574.1" fill="rgb(0,239,46)" stroke="#000" stroke-width="1" stroke-linejoin="round"/><polygon points="960.2,718.1 951.7,719.0 953.3,711.4 961.8,710.6" fill="rgb(0,166,239)" stroke="#000" stroke-width="1" stroke-linejoin="round"/><polygon points="918.5,776.3 910.0,775.5 910.3,773.0 918.8,773.6" fill="rgb(0,19,239)" stroke="#000" stroke-width="1" stroke-linejoin="round"/><polygon points="938.9,748.3 930.4,749.5 931.9,739.2 940.4,737.5" fill="rgb(0,95,239)" stroke="#000" stroke-width="1" stroke-linejoin="round"/><polygon points="990.1,704.2 981.6,701.4 985.3,683.0 993.8,686.5" fill="rgb(0,214,239)" stroke="#000" stroke-width="1" stroke-linejoin="round"/><polygon points="918.1,778.9 909.6,778.0 910.0,775.5 918.5,776.3" fill="rgb(0,13,239)" stroke="#000" stroke-width="1" stroke-linejoin="round"/><polygon points="1072.8,601.3 1069.4,600.7 1076.9,574.1 1080.3,574.0" fill="rgb(0,239,46)" stroke="#000" stroke-width="1" stroke-linejoin="round"/><polygon points="918.0,779.0 909.5,778.1 909.6,778.0 918.1,778.9" fill="rgb(0,10,239)" stroke="#000" stroke-width="1" stroke-linejoin="round"/><polygon points="948.9,735.6 940.4,737.5 941.7,728.3 950.2,726.0" fill="rgb(0,125,239)" stroke="#000" stroke-width="1" stroke-linejoin="round"/><polygon points="928.1,768.7 919.6,767.6 920.4,760.0 928.9,760.8" fill="rgb(0,45,239)" stroke="#000" stroke-width="1" stroke-linejoin="round"/><polygon points="1010.8,672.7 1002.3,677.2 1006.0,657.8 1014.5,651.5" fill="rgb(0,239,212)" stroke="#000" stroke-width="1" stroke-linejoin="round"/><polygon points="1048.6,612.7 1041.9,615.1 1045.7,598.1 1052.5,597.8" fill="rgb(0,239,88)" stroke="#000" stroke-width="1" stroke-linejoin="round"/><polygon points="1031.5,643.8 1023.0,646.5 1026.6,624.5 1035.1,619.8" fill="rgb(0,239,152)" stroke="#000" stroke-width="1" stroke-linejoin="round"/><polygon points="958.7,725.0 950.2,726.0 951.7,719.0 960.2,718.1" fill="rgb(0,150,239)" stroke="#000" stroke-width="1" stroke-linejoin="round"/><polygon points="927.3,775.0 918.8,773.6 919.6,767.6 928.1,768.7" fill="rgb(0,30,239)" stroke="#000" stroke-width="1" stroke-linejoin="round"/><polygon points="937.4,760.1 928.9,760.8 930.4,749.5 938.9,748.3" fill="rgb(0,70,239)" stroke="#000" stroke-width="1" stroke-linejoin="round"/><polygon points="978.8,712.1 970.3,711.7 973.1,700.8 981.6,701.4" fill="rgb(0,189,239)" stroke="#000" stroke-width="1" stroke-linejoin="round"/><polygon points="1079.6,602.2 1072.8,601.3 1080.3,574.0 1087.1,574.8" fill="rgb(0,239,45)" stroke="#000" stroke-width="1" stroke-linejoin="round"/><polygon points="968.7,718.9 960.2,718.1 961.8,710.6 970.3,711.7" fill="rgb(0,169,239)" stroke="#000" stroke-width="1" stroke-linejoin="round"/><polygon points="926.9,777.7 918.5,776.3 918.8,773.6 927.3,775.0" fill="rgb(0,20,239)" stroke="#000" stroke-width="1" stroke-linejoin="round"/><polygon points="1052.0,612.5 1048.6,612.7 1052.5,597.8 1055.9,598.4" fill="rgb(0,239,84)" stroke="#000" stroke-width="1" stroke-linejoin="round"/><polygon points="947.4,746.7 938.9,748.3 940.4,737.5 948.9,735.6" fill="rgb(0,103,239)" stroke="#000" stroke-width="1" stroke-linejoin="round"/><polygon points="998.6,696.3 990.1,704.2 993.8,686.5 1002.3,677.2" fill="rgb(0,222,239)" stroke="#000" stroke-width="1" stroke-linejoin="round"/><polygon points="926.6,780.5 918.1,778.9 918.5,776.3 926.9,777.7" fill="rgb(0,14,239)" stroke="#000" stroke-width="1" stroke-linejoin="round"/><polygon points="926.4,780.5 918.0,779.0 918.1,778.9 926.6,780.5" fill="rgb(0,11,239)" stroke="#000" stroke-width="1" stroke-linejoin="round"/><polygon points="957.3,734.4 948.9,735.6 950.2,726.0 958.7,725.0" fill="rgb(0,133,239)" stroke="#000" stroke-width="1" stroke-linejoin="round"/><polygon points="936.5,768.4 928.1,768.7 928.9,760.8 937.4,760.1" fill="rgb(0,48,239)" stroke="#000" stroke-width="1" stroke-linejoin="round"/><polygon points="1019.3,669.5 1010.8,672.7 1014.5,651.5 1023.0,646.5" fill="rgb(0,239,201)" stroke="#000" stroke-width="1" stroke-linejoin="round"/><polygon points="1055.4,612.6 1052.0,612.5 1055.9,598.4 1059.3,599.0" fill="rgb(0,239,84)" stroke="#000" stroke-width="1" stroke-linejoin="round"/><polygon points="1038.3,639.4 1031.5,643.8 1035.1,619.8 1041.9,615.1" fill="rgb(0,239,139)" stroke="#000" stroke-width="1" stroke-linejoin="round"/><polygon points="967.2,725.5 958.7,725.0 960.2,718.1 968.7,718.9" fill="rgb(0,154,239)" stroke="#000" stroke-width="1" stroke-linejoin="round"/><polygon points="935.8,775.0 927.3,775.0 928.1,768.7 936.5,768.4" fill="rgb(0,32,239)" stroke="#000" stroke-width="1" stroke-linejoin="round"/><polygon points="945.9,758.9 937.4,760.1 938.9,748.3 947.4,746.7" fill="rgb(0,77,239)" stroke="#000" stroke-width="1" stroke-linejoin="round"/><polygon points="987.3,710.2 978.8,712.1 981.6,701.4 990.1,704.2" fill="rgb(0,192,239)" stroke="#000" stroke-width="1" stroke-linejoin="round"/><polygon points="1058.8,612.7 1055.4,612.6 1059.3,599.0 1062.7,599.5" fill="rgb(0,239,83)" stroke="#000" stroke-width="1" stroke-linejoin="round"/><polygon points="977.2,719.2 968.7,718.9 970.3,711.7 978.8,712.1" fill="rgb(0,171,239)" stroke="#000" stroke-width="1" stroke-linejoin="round"/><polygon points="935.4,778.0 926.9,777.7 927.3,775.0 935.8,775.0" fill="rgb(0,21,239)" stroke="#000" stroke-width="1" stroke-linejoin="round"/><polygon points="955.9,745.5 947.4,746.7 948.9,735.6 957.3,734.4" fill="rgb(0,110,239)" stroke="#000" stroke-width="1" stroke-linejoin="round"/><polygon points="1007.1,693.3 998.6,696.3 1002.3,677.2 1010.8,672.7" fill="rgb(0,235,239)" stroke="#000" stroke-width="1" stroke-linejoin="round"/><polygon points="935.1,780.8 926.6,780.5 926.9,777.7 935.4,778.0" fill="rgb(0,15,239)" stroke="#000" stroke-width="1" stroke-linejoin="round"/><polygon points="1062.2,613.4 1058.8,612.7 1062.7,599.5 1066.1,600.1" fill="rgb(0,239,83)" stroke="#000" stroke-width="1" stroke-linejoin="round"/><polygon points="1045.0,634.7 1038.3,639.4 1041.9,615.1 1048.6,612.7" fill="rgb(0,239,127)" stroke="#000" stroke-width="1" stroke-linejoin="round"/><polygon points="934.9,780.9 926.4,780.5 926.6,780.5 935.1,780.8" fill="rgb(0,12,239)" stroke="#000" stroke-width="1" stroke-linejoin="round"/><polygon points="965.8,734.7 957.3,734.4 958.7,725.0 967.2,725.5" fill="rgb(0,137,239)" stroke="#000" stroke-width="1" stroke-linejoin="round"/><polygon points="945.0,767.4 936.5,768.4 937.4,760.1 945.9,758.9" fill="rgb(0,54,239)" stroke="#000" stroke-width="1" stroke-linejoin="round"/><polygon points="1027.8,667.4 1019.3,669.5 1023.0,646.5 1031.5,643.8" fill="rgb(0,239,193)" stroke="#000" stroke-width="1" stroke-linejoin="round"/><polygon points="1065.6,613.9 1062.2,613.4 1066.1,600.1 1069.4,600.7" fill="rgb(0,239,83)" stroke="#000" stroke-width="1" stroke-linejoin="round"/><polygon points="975.7,725.7 967.2,725.5 968.7,718.9 977.2,719.2" fill="rgb(0,157,239)" stroke="#000" stroke-width="1" stroke-linejoin="round"/><polygon points="944.3,774.4 935.8,775.0 936.5,768.4 945.0,767.4" fill="rgb(0,36,239)" stroke="#000" stroke-width="1" stroke-linejoin="round"/><polygon points="954.4,757.6 945.9,758.9 947.4,746.7 955.9,745.5" fill="rgb(0,84,239)" stroke="#000" stroke-width="1" stroke-linejoin="round"/><polygon points="995.7,707.4 987.3,710.2 990.1,704.2 998.6,696.3" fill="rgb(0,201,239)" stroke="#000" stroke-width="1" stroke-linejoin="round"/><polygon points="1048.4,632.5 1045.0,634.7 1048.6,612.7 1052.0,612.5" fill="rgb(0,239,120)" stroke="#000" stroke-width="1" stroke-linejoin="round"/><polygon points="985.6,718.6 977.2,719.2 978.8,712.1 987.3,710.2" fill="rgb(0,176,239)" stroke="#000" stroke-width="1" stroke-linejoin="round"/><polygon points="943.9,777.4 935.4,778.0 935.8,775.0 944.3,774.4" fill="rgb(0,25,239)" stroke="#000" stroke-width="1" stroke-linejoin="round"/><polygon points="1069.0,614.4 1065.6,613.9 1069.4,600.7 1072.8,601.3" fill="rgb(0,239,83)" stroke="#000" stroke-width="1" stroke-linejoin="round"/><polygon points="964.3,745.5 955.9,745.5 957.3,734.4 965.8,734.7" fill="rgb(0,115,239)" stroke="#000" stroke-width="1" stroke-linejoin="round"/><polygon points="1015.6,691.7 1007.1,693.3 1010.8,672.7 1019.3,669.5" fill="rgb(0,239,235)" stroke="#000" stroke-width="1" stroke-linejoin="round"/><polygon points="943.5,780.5 935.1,780.8 935.4,778.0 943.9,777.4" fill="rgb(0,19,239)" stroke="#000" stroke-width="1" stroke-linejoin="round"/><polygon points="1034.5,659.2 1027.8,667.4 1031.5,643.8 1038.3,639.4" fill="rgb(0,239,183)" stroke="#000" stroke-width="1" stroke-linejoin="round"/><polygon points="1051.8,631.6 1048.4,632.5 1052.0,612.5 1055.4,612.6" fill="rgb(0,239,116)" stroke="#000" stroke-width="1" stroke-linejoin="round"/><polygon points="943.4,780.5 934.9,780.9 935.1,780.8 943.5,780.5" fill="rgb(0,15,239)" stroke="#000" stroke-width="1" stroke-linejoin="round"/><polygon points="974.3,734.9 965.8,734.7 967.2,725.5 975.7,725.7" fill="rgb(0,140,239)" stroke="#000" stroke-width="1" stroke-linejoin="round"/><polygon points="953.5,766.1 945.0,767.4 945.9,758.9 954.4,757.6" fill="rgb(0,60,239)" stroke="#000" stroke-width="1" stroke-linejoin="round"/><polygon points="1075.8,615.5 1069.0,614.4 1072.8,601.3 1079.6,602.2" fill="rgb(0,239,83)" stroke="#000" stroke-width="1" stroke-linejoin="round"/><polygon points="984.2,724.8 975.7,725.7 977.2,719.2 985.6,718.6" fill="rgb(0,161,239)" stroke="#000" stroke-width="1" stroke-linejoin="round"/><polygon points="1055.2,630.6 1051.8,631.6 1055.4,612.6 1058.8,612.7" fill="rgb(0,239,114)" stroke="#000" stroke-width="1" stroke-linejoin="round"/><polygon points="952.8,773.1 944.3,774.4 945.0,767.4 953.5,766.1" fill="rgb(0,43,239)" stroke="#000" stroke-width="1" stroke-linejoin="round"/><polygon points="962.9,757.3 954.4,757.6 955.9,745.5 964.3,745.5" fill="rgb(0,89,239)" stroke="#000" stroke-width="1" stroke-linejoin="round"/><polygon points="1004.2,704.5 995.7,707.4 998.6,696.3 1007.1,693.3" fill="rgb(0,212,239)" stroke="#000" stroke-width="1" stroke-linejoin="round"/><polygon points="994.1,714.8 985.6,718.6 987.3,710.2 995.7,707.4" fill="rgb(0,185,239)" stroke="#000" stroke-width="1" stroke-linejoin="round"/><polygon points="952.4,776.2 943.9,777.4 944.3,774.4 952.8,773.1" fill="rgb(0,31,239)" stroke="#000" stroke-width="1" stroke-linejoin="round"/><polygon points="972.8,745.7 964.3,745.5 965.8,734.7 974.3,734.9" fill="rgb(0,118,239)" stroke="#000" stroke-width="1" stroke-linejoin="round"/><polygon points="1041.3,652.4 1034.5,659.2 1038.3,639.4 1045.0,634.7" fill="rgb(0,239,170)" stroke="#000" stroke-width="1" stroke-linejoin="round"/><polygon points="1058.6,630.6 1055.2,630.6 1058.8,612.7 1062.2,613.4" fill="rgb(0,239,113)" stroke="#000" stroke-width="1" stroke-linejoin="round"/><polygon points="1024.0,690.4 1015.6,691.7 1019.3,669.5 1027.8,667.4" fill="rgb(0,239,229)" stroke="#000" stroke-width="1" stroke-linejoin="round"/><polygon points="952.0,779.2 943.5,780.5 943.9,777.4 952.4,776.2" fill="rgb(0,24,239)" stroke="#000" stroke-width="1" stroke-linejoin="round"/><polygon points="951.9,779.3 943.4,780.5 943.5,780.5 952.0,779.2" fill="rgb(0,21,239)" stroke="#000" stroke-width="1" stroke-linejoin="round"/><polygon points="982.8,735.0 974.3,734.9 975.7,725.7 984.2,724.8" fill="rgb(0,144,239)" stroke="#000" stroke-width="1" stroke-linejoin="round"/><polygon points="962.0,765.8 953.5,766.1 954.4,757.6 962.9,757.3" fill="rgb(0,66,239)" stroke="#000" stroke-width="1" stroke-linejoin="round"/><polygon points="1062.0,630.4 1058.6,630.6 1062.2,613.4 1065.6,613.9" fill="rgb(0,239,112)" stroke="#000" stroke-width="1" stroke-linejoin="round"/><polygon points="992.6,721.5 984.2,724.8 985.6,718.6 994.1,714.8" fill="rgb(0,170,239)" stroke="#000" stroke-width="1" stroke-linejoin="round"/><polygon points="1044.7,650.5 1041.3,652.4 1045.0,634.7 1048.4,632.5" fill="rgb(0,239,159)" stroke="#000" stroke-width="1" stroke-linejoin="round"/><polygon points="961.2,772.6 952.8,773.1 953.5,766.1 962.0,765.8" fill="rgb(0,48,239)" stroke="#000" stroke-width="1" stroke-linejoin="round"/><polygon points="971.3,757.5 962.9,757.3 964.3,745.5 972.8,745.7" fill="rgb(0,92,239)" stroke="#000" stroke-width="1" stroke-linejoin="round"/><polygon points="1012.7,703.8 1004.2,704.5 1007.1,693.3 1015.6,691.7" fill="rgb(0,218,239)" stroke="#000" stroke-width="1" stroke-linejoin="round"/><polygon points="1065.4,630.7 1062.0,630.4 1065.6,613.9 1069.0,614.4" fill="rgb(0,239,111)" stroke="#000" stroke-width="1" stroke-linejoin="round"/><polygon points="1002.6,712.2 994.1,714.8 995.7,707.4 1004.2,704.5" fill="rgb(0,196,239)" stroke="#000" stroke-width="1" stroke-linejoin="round"/><polygon points="960.9,775.7 952.4,776.2 952.8,773.1 961.2,772.6" fill="rgb(0,37,239)" stroke="#000" stroke-width="1" stroke-linejoin="round"/><polygon points="981.3,746.4 972.8,745.7 974.3,734.9 982.8,735.0" fill="rgb(0,120,239)" stroke="#000" stroke-width="1" stroke-linejoin="round"/><polygon points="1048.1,649.6 1044.7,650.5 1048.4,632.5 1051.8,631.6" fill="rgb(0,239,154)" stroke="#000" stroke-width="1" stroke-linejoin="round"/><polygon points="1030.8,683.8 1024.0,690.4 1027.8,667.4 1034.5,659.2" fill="rgb(0,239,219)" stroke="#000" stroke-width="1" stroke-linejoin="round"/><polygon points="960.5,778.7 952.0,779.2 952.4,776.2 960.9,775.7" fill="rgb(0,30,239)" stroke="#000" stroke-width="1" stroke-linejoin="round"/><polygon points="960.4,778.8 951.9,779.3 952.0,779.2 960.5,778.7" fill="rgb(0,27,239)" stroke="#000" stroke-width="1" stroke-linejoin="round"/><polygon points="991.3,731.5 982.8,735.0 984.2,724.8 992.6,721.5" fill="rgb(0,152,239)" stroke="#000" stroke-width="1" stroke-linejoin="round"/><polygon points="970.5,766.0 962.0,765.8 962.9,757.3 971.3,757.5" fill="rgb(0,69,239)" stroke="#000" stroke-width="1" stroke-linejoin="round"/><polygon points="1051.5,648.3 1048.1,649.6 1051.8,631.6 1055.2,630.6" fill="rgb(0,239,150)" stroke="#000" stroke-width="1" stroke-linejoin="round"/><polygon points="1072.2,631.2 1065.4,630.7 1069.0,614.4 1075.8,615.5" fill="rgb(0,239,111)" stroke="#000" stroke-width="1" stroke-linejoin="round"/><polygon points="1001.1,719.6 992.6,721.5 994.1,714.8 1002.6,712.2" fill="rgb(0,180,239)" stroke="#000" stroke-width="1" stroke-linejoin="round"/><polygon points="969.7,772.9 961.2,772.6 962.0,765.8 970.5,766.0" fill="rgb(0,52,239)" stroke="#000" stroke-width="1" stroke-linejoin="round"/><polygon points="979.8,758.8 971.3,757.5 972.8,745.7 981.3,746.4" fill="rgb(0,94,239)" stroke="#000" stroke-width="1" stroke-linejoin="round"/><polygon points="1021.2,701.8 1012.7,703.8 1015.6,691.7 1024.0,690.4" fill="rgb(0,223,239)" stroke="#000" stroke-width="1" stroke-linejoin="round"/><polygon points="1054.9,648.2 1051.5,648.3 1055.2,630.6 1058.6,630.6" fill="rgb(0,239,147)" stroke="#000" stroke-width="1" stroke-linejoin="round"/><polygon points="1037.6,675.0 1030.8,683.8 1034.5,659.2 1041.3,652.4" fill="rgb(0,239,203)" stroke="#000" stroke-width="1" stroke-linejoin="round"/><polygon points="1011.1,711.1 1002.6,712.2 1004.2,704.5 1012.7,703.8" fill="rgb(0,204,239)" stroke="#000" stroke-width="1" stroke-linejoin="round"/><polygon points="969.4,776.0 960.9,775.7 961.2,772.6 969.7,772.9" fill="rgb(0,41,239)" stroke="#000" stroke-width="1" stroke-linejoin="round"/><polygon points="989.8,743.0 981.3,746.4 982.8,735.0 991.3,731.5" fill="rgb(0,128,239)" stroke="#000" stroke-width="1" stroke-linejoin="round"/><polygon points="969.0,778.8 960.5,778.7 960.9,775.7 969.4,776.0" fill="rgb(0,34,239)" stroke="#000" stroke-width="1" stroke-linejoin="round"/><polygon points="1058.3,647.9 1054.9,648.2 1058.6,630.6 1062.0,630.4" fill="rgb(0,239,146)" stroke="#000" stroke-width="1" stroke-linejoin="round"/><polygon points="968.9,779.2 960.4,778.8 960.5,778.7 969.0,778.8" fill="rgb(0,30,239)" stroke="#000" stroke-width="1" stroke-linejoin="round"/><polygon points="999.8,729.8 991.3,731.5 992.6,721.5 1001.1,719.6" fill="rgb(0,162,239)" stroke="#000" stroke-width="1" stroke-linejoin="round"/><polygon points="979.0,767.1 970.5,766.0 971.3,757.5 979.8,758.8" fill="rgb(0,71,239)" stroke="#000" stroke-width="1" stroke-linejoin="round"/><polygon points="1041.0,669.8 1037.6,675.0 1041.3,652.4 1044.7,650.5" fill="rgb(0,239,191)" stroke="#000" stroke-width="1" stroke-linejoin="round"/><polygon points="1009.6,718.0 1001.1,719.6 1002.6,712.2 1011.1,711.1" fill="rgb(0,188,239)" stroke="#000" stroke-width="1" stroke-linejoin="round"/><polygon points="1061.7,648.6 1058.3,647.9 1062.0,630.4 1065.4,630.7" fill="rgb(0,239,145)" stroke="#000" stroke-width="1" stroke-linejoin="round"/><polygon points="1028.0,697.1 1021.2,701.8 1024.0,690.4 1030.8,683.8" fill="rgb(0,232,239)" stroke="#000" stroke-width="1" stroke-linejoin="round"/><polygon points="978.2,771.5 969.7,772.9 970.5,766.0 979.0,767.1" fill="rgb(0,55,239)" stroke="#000" stroke-width="1" stroke-linejoin="round"/><polygon points="988.3,755.8 979.8,758.8 981.3,746.4 989.8,743.0" fill="rgb(0,101,239)" stroke="#000" stroke-width="1" stroke-linejoin="round"/><polygon points="1044.4,667.2 1041.0,669.8 1044.7,650.5 1048.1,649.6" fill="rgb(0,239,186)" stroke="#000" stroke-width="1" stroke-linejoin="round"/><polygon points="1019.6,710.2 1011.1,711.1 1012.7,703.8 1021.2,701.8" fill="rgb(0,208,239)" stroke="#000" stroke-width="1" stroke-linejoin="round"/><polygon points="977.8,776.1 969.4,776.0 969.7,772.9 978.2,771.5" fill="rgb(0,45,239)" stroke="#000" stroke-width="1" stroke-linejoin="round"/><polygon points="998.3,741.5 989.8,743.0 991.3,731.5 999.8,729.8" fill="rgb(0,138,239)" stroke="#000" stroke-width="1" stroke-linejoin="round"/><polygon points="977.5,779.9 969.0,778.8 969.4,776.0 977.8,776.1" fill="rgb(0,36,239)" stroke="#000" stroke-width="1" stroke-linejoin="round"/><polygon points="1068.5,649.3 1061.7,648.6 1065.4,630.7 1072.2,631.2" fill="rgb(0,239,144)" stroke="#000" stroke-width="1" stroke-linejoin="round"/><polygon points="1047.8,664.1 1044.4,667.2 1048.1,649.6 1051.5,648.3" fill="rgb(0,239,181)" stroke="#000" stroke-width="1" stroke-linejoin="round"/><polygon points="977.3,780.3 968.9,779.2 969.0,778.8 977.5,779.9" fill="rgb(0,32,239)" stroke="#000" stroke-width="1" stroke-linejoin="round"/><polygon points="1008.2,728.0 999.8,729.8 1001.1,719.6 1009.6,718.0" fill="rgb(0,170,239)" stroke="#000" stroke-width="1" stroke-linejoin="round"/><polygon points="987.4,765.0 979.0,767.1 979.8,758.8 988.3,755.8" fill="rgb(0,76,239)" stroke="#000" stroke-width="1" stroke-linejoin="round"/><polygon points="1034.8,691.2 1028.0,697.1 1030.8,683.8 1037.6,675.0" fill="rgb(0,239,233)" stroke="#000" stroke-width="1" stroke-linejoin="round"/><polygon points="1018.1,717.7 1009.6,718.0 1011.1,711.1 1019.6,710.2" fill="rgb(0,194,239)" stroke="#000" stroke-width="1" stroke-linejoin="round"/><polygon points="1051.2,663.0 1047.8,664.1 1051.5,648.3 1054.9,648.2" fill="rgb(0,239,178)" stroke="#000" stroke-width="1" stroke-linejoin="round"/><polygon points="986.7,772.6 978.2,771.5 979.0,767.1 987.4,765.0" fill="rgb(0,60,239)" stroke="#000" stroke-width="1" stroke-linejoin="round"/><polygon points="996.8,753.7 988.3,755.8 989.8,743.0 998.3,741.5" fill="rgb(0,110,239)" stroke="#000" stroke-width="1" stroke-linejoin="round"/><polygon points="1026.4,706.7 1019.6,710.2 1021.2,701.8 1028.0,697.1" fill="rgb(0,215,239)" stroke="#000" stroke-width="1" stroke-linejoin="round"/><polygon points="986.3,776.1 977.8,776.1 978.2,771.5 986.7,772.6" fill="rgb(0,48,239)" stroke="#000" stroke-width="1" stroke-linejoin="round"/><polygon points="1006.8,738.8 998.3,741.5 999.8,729.8 1008.2,728.0" fill="rgb(0,146,239)" stroke="#000" stroke-width="1" stroke-linejoin="round"/><polygon points="1054.6,662.2 1051.2,663.0 1054.9,648.2 1058.3,647.9" fill="rgb(0,239,176)" stroke="#000" stroke-width="1" stroke-linejoin="round"/><polygon points="1038.2,686.5 1034.8,691.2 1037.6,675.0 1041.0,669.8" fill="rgb(0,239,221)" stroke="#000" stroke-width="1" stroke-linejoin="round"/><polygon points="986.0,779.4 977.5,779.9 977.8,776.1 986.3,776.1" fill="rgb(0,40,239)" stroke="#000" stroke-width="1" stroke-linejoin="round"/><polygon points="985.8,779.5 977.3,780.3 977.5,779.9 986.0,779.4" fill="rgb(0,35,239)" stroke="#000" stroke-width="1" stroke-linejoin="round"/><polygon points="1016.7,727.4 1008.2,728.0 1009.6,718.0 1018.1,717.7" fill="rgb(0,176,239)" stroke="#000" stroke-width="1" stroke-linejoin="round"/><polygon points="995.9,763.3 987.4,765.0 988.3,755.8 996.8,753.7" fill="rgb(0,85,239)" stroke="#000" stroke-width="1" stroke-linejoin="round"/><polygon points="1058.0,661.8 1054.6,662.2 1058.3,647.9 1061.7,648.6" fill="rgb(0,239,174)" stroke="#000" stroke-width="1" stroke-linejoin="round"/><polygon points="1041.6,683.0 1038.2,686.5 1041.0,669.8 1044.4,667.2" fill="rgb(0,239,212)" stroke="#000" stroke-width="1" stroke-linejoin="round"/><polygon points="1024.9,716.6 1018.1,717.7 1019.6,710.2 1026.4,706.7" fill="rgb(0,201,239)" stroke="#000" stroke-width="1" stroke-linejoin="round"/><polygon points="1033.2,701.2 1026.4,706.7 1028.0,697.1 1034.8,691.2" fill="rgb(0,226,239)" stroke="#000" stroke-width="1" stroke-linejoin="round"/><polygon points="995.2,771.2 986.7,772.6 987.4,765.0 995.9,763.3" fill="rgb(0,66,239)" stroke="#000" stroke-width="1" stroke-linejoin="round"/><polygon points="1005.3,750.7 996.8,753.7 998.3,741.5 1006.8,738.8" fill="rgb(0,120,239)" stroke="#000" stroke-width="1" stroke-linejoin="round"/><polygon points="1044.9,680.8 1041.6,683.0 1044.4,667.2 1047.8,664.1" fill="rgb(0,239,206)" stroke="#000" stroke-width="1" stroke-linejoin="round"/><polygon points="994.8,774.7 986.3,776.1 986.7,772.6 995.2,771.2" fill="rgb(0,53,239)" stroke="#000" stroke-width="1" stroke-linejoin="round"/><polygon points="1015.2,736.2 1006.8,738.8 1008.2,728.0 1016.7,727.4" fill="rgb(0,154,239)" stroke="#000" stroke-width="1" stroke-linejoin="round"/><polygon points="1064.8,661.3 1058.0,661.8 1061.7,648.6 1068.5,649.3" fill="rgb(0,239,173)" stroke="#000" stroke-width="1" stroke-linejoin="round"/><polygon points="1036.5,698.4 1033.2,701.2 1034.8,691.2 1038.2,686.5" fill="rgb(0,236,239)" stroke="#000" stroke-width="1" stroke-linejoin="round"/><polygon points="994.4,778.3 986.0,779.4 986.3,776.1 994.8,774.7" fill="rgb(0,45,239)" stroke="#000" stroke-width="1" stroke-linejoin="round"/><polygon points="1023.5,724.8 1016.7,727.4 1018.1,717.7 1024.9,716.6" fill="rgb(0,182,239)" stroke="#000" stroke-width="1" stroke-linejoin="round"/><polygon points="1048.3,679.1 1044.9,680.8 1047.8,664.1 1051.2,663.0" fill="rgb(0,239,202)" stroke="#000" stroke-width="1" stroke-linejoin="round"/><polygon points="994.3,778.3 985.8,779.5 986.0,779.4 994.4,778.3" fill="rgb(0,41,239)" stroke="#000" stroke-width="1" stroke-linejoin="round"/><polygon points="1031.7,711.9 1024.9,716.6 1026.4,706.7 1033.2,701.2" fill="rgb(0,210,239)" stroke="#000" stroke-width="1" stroke-linejoin="round"/><polygon points="1004.4,760.9 995.9,763.3 996.8,753.7 1005.3,750.7" fill="rgb(0,95,239)" stroke="#000" stroke-width="1" stroke-linejoin="round"/><polygon points="1039.9,696.6 1036.5,698.4 1038.2,686.5 1041.6,683.0" fill="rgb(0,239,236)" stroke="#000" stroke-width="1" stroke-linejoin="round"/><polygon points="1051.7,677.2 1048.3,679.1 1051.2,663.0 1054.6,662.2" fill="rgb(0,239,198)" stroke="#000" stroke-width="1" stroke-linejoin="round"/><polygon points="1003.7,769.4 995.2,771.2 995.9,763.3 1004.4,760.9" fill="rgb(0,74,239)" stroke="#000" stroke-width="1" stroke-linejoin="round"/><polygon points="1013.8,746.7 1005.3,750.7 1006.8,738.8 1015.2,736.2" fill="rgb(0,131,239)" stroke="#000" stroke-width="1" stroke-linejoin="round"/><polygon points="1022.0,734.7 1015.2,736.2 1016.7,727.4 1023.5,724.8" fill="rgb(0,162,239)" stroke="#000" stroke-width="1" stroke-linejoin="round"/><polygon points="1035.1,710.3 1031.7,711.9 1033.2,701.2 1036.5,698.4" fill="rgb(0,218,239)" stroke="#000" stroke-width="1" stroke-linejoin="round"/><polygon points="1043.3,692.9 1039.9,696.6 1041.6,683.0 1044.9,680.8" fill="rgb(0,239,230)" stroke="#000" stroke-width="1" stroke-linejoin="round"/><polygon points="1003.3,773.2 994.8,774.7 995.2,771.2 1003.7,769.4" fill="rgb(0,60,239)" stroke="#000" stroke-width="1" stroke-linejoin="round"/><polygon points="1030.3,722.4 1023.5,724.8 1024.9,716.6 1031.7,711.9" fill="rgb(0,191,239)" stroke="#000" stroke-width="1" stroke-linejoin="round"/><polygon points="1055.1,676.3 1051.7,677.2 1054.6,662.2 1058.0,661.8" fill="rgb(0,239,195)" stroke="#000" stroke-width="1" stroke-linejoin="round"/><polygon points="1002.9,777.1 994.4,778.3 994.8,774.7 1003.3,773.2" fill="rgb(0,52,239)" stroke="#000" stroke-width="1" stroke-linejoin="round"/><polygon points="1002.8,777.2 994.3,778.3 994.4,778.3 1002.9,777.1" fill="rgb(0,47,239)" stroke="#000" stroke-width="1" stroke-linejoin="round"/><polygon points="1038.5,708.1 1035.1,710.3 1036.5,698.4 1039.9,696.6" fill="rgb(0,223,239)" stroke="#000" stroke-width="1" stroke-linejoin="round"/><polygon points="1012.9,757.5 1004.4,760.9 1005.3,750.7 1013.8,746.7" fill="rgb(0,106,239)" stroke="#000" stroke-width="1" stroke-linejoin="round"/><polygon points="1046.7,691.2 1043.3,692.9 1044.9,680.8 1048.3,679.1" fill="rgb(0,239,224)" stroke="#000" stroke-width="1" stroke-linejoin="round"/><polygon points="1033.7,721.4 1030.3,722.4 1031.7,711.9 1035.1,710.3" fill="rgb(0,199,239)" stroke="#000" stroke-width="1" stroke-linejoin="round"/><polygon points="1020.5,745.0 1013.8,746.7 1015.2,736.2 1022.0,734.7" fill="rgb(0,140,239)" stroke="#000" stroke-width="1" stroke-linejoin="round"/><polygon points="1061.9,676.2 1055.1,676.3 1058.0,661.8 1064.8,661.3" fill="rgb(0,239,193)" stroke="#000" stroke-width="1" stroke-linejoin="round"/><polygon points="1028.8,732.5 1022.0,734.7 1023.5,724.8 1030.3,722.4" fill="rgb(0,170,239)" stroke="#000" stroke-width="1" stroke-linejoin="round"/><polygon points="1012.1,766.5 1003.7,769.4 1004.4,760.9 1012.9,757.5" fill="rgb(0,84,239)" stroke="#000" stroke-width="1" stroke-linejoin="round"/><polygon points="1041.8,704.6 1038.5,708.1 1039.9,696.6 1043.3,692.9" fill="rgb(0,229,239)" stroke="#000" stroke-width="1" stroke-linejoin="round"/><polygon points="1050.1,689.8 1046.7,691.2 1048.3,679.1 1051.7,677.2" fill="rgb(0,239,220)" stroke="#000" stroke-width="1" stroke-linejoin="round"/><polygon points="1011.8,770.8 1003.3,773.2 1003.7,769.4 1012.1,766.5" fill="rgb(0,69,239)" stroke="#000" stroke-width="1" stroke-linejoin="round"/><polygon points="1037.1,720.0 1033.7,721.4 1035.1,710.3 1038.5,708.1" fill="rgb(0,204,239)" stroke="#000" stroke-width="1" stroke-linejoin="round"/><polygon points="1045.2,701.5 1041.8,704.6 1043.3,692.9 1046.7,691.2" fill="rgb(0,235,239)" stroke="#000" stroke-width="1" stroke-linejoin="round"/><polygon points="1053.5,687.8 1050.1,689.8 1051.7,677.2 1055.1,676.3" fill="rgb(0,239,217)" stroke="#000" stroke-width="1" stroke-linejoin="round"/><polygon points="1011.4,775.2 1002.9,777.1 1003.3,773.2 1011.8,770.8" fill="rgb(0,59,239)" stroke="#000" stroke-width="1" stroke-linejoin="round"/><polygon points="1019.7,756.3 1012.9,757.5 1013.8,746.7 1020.5,745.0" fill="rgb(0,116,239)" stroke="#000" stroke-width="1" stroke-linejoin="round"/><polygon points="1011.3,775.3 1002.8,777.2 1002.9,777.1 1011.4,775.2" fill="rgb(0,55,239)" stroke="#000" stroke-width="1" stroke-linejoin="round"/><polygon points="1032.2,732.4 1028.8,732.5 1030.3,722.4 1033.7,721.4" fill="rgb(0,175,239)" stroke="#000" stroke-width="1" stroke-linejoin="round"/><polygon points="1040.5,718.4 1037.1,720.0 1038.5,708.1 1041.8,704.6" fill="rgb(0,209,239)" stroke="#000" stroke-width="1" stroke-linejoin="round"/><polygon points="1027.3,743.2 1020.5,745.0 1022.0,734.7 1028.8,732.5" fill="rgb(0,147,239)" stroke="#000" stroke-width="1" stroke-linejoin="round"/><polygon points="1048.6,698.6 1045.2,701.5 1046.7,691.2 1050.1,689.8" fill="rgb(0,239,238)" stroke="#000" stroke-width="1" stroke-linejoin="round"/><polygon points="1018.9,765.6 1012.1,766.5 1012.9,757.5 1019.7,756.3" fill="rgb(0,92,239)" stroke="#000" stroke-width="1" stroke-linejoin="round"/><polygon points="1035.6,732.2 1032.2,732.4 1033.7,721.4 1037.1,720.0" fill="rgb(0,179,239)" stroke="#000" stroke-width="1" stroke-linejoin="round"/><polygon points="1060.3,687.8 1053.5,687.8 1055.1,676.3 1061.9,676.2" fill="rgb(0,239,214)" stroke="#000" stroke-width="1" stroke-linejoin="round"/><polygon points="1043.9,716.2 1040.5,718.4 1041.8,704.6 1045.2,701.5" fill="rgb(0,215,239)" stroke="#000" stroke-width="1" stroke-linejoin="round"/><polygon points="1018.6,770.1 1011.8,770.8 1012.1,766.5 1018.9,765.6" fill="rgb(0,76,239)" stroke="#000" stroke-width="1" stroke-linejoin="round"/><polygon points="1052.0,696.8 1048.6,698.6 1050.1,689.8 1053.5,687.8" fill="rgb(0,239,233)" stroke="#000" stroke-width="1" stroke-linejoin="round"/><polygon points="1026.5,754.5 1019.7,756.3 1020.5,745.0 1027.3,743.2" fill="rgb(0,122,239)" stroke="#000" stroke-width="1" stroke-linejoin="round"/><polygon points="1030.7,742.6 1027.3,743.2 1028.8,732.5 1032.2,732.4" fill="rgb(0,152,239)" stroke="#000" stroke-width="1" stroke-linejoin="round"/><polygon points="1018.2,774.5 1011.4,775.2 1011.8,770.8 1018.6,770.1" fill="rgb(0,66,239)" stroke="#000" stroke-width="1" stroke-linejoin="round"/><polygon points="1039.0,732.0 1035.6,732.2 1037.1,720.0 1040.5,718.4" fill="rgb(0,182,239)" stroke="#000" stroke-width="1" stroke-linejoin="round"/><polygon points="1018.1,774.6 1011.3,775.3 1011.4,775.2 1018.2,774.5" fill="rgb(0,61,239)" stroke="#000" stroke-width="1" stroke-linejoin="round"/><polygon points="1047.3,714.4 1043.9,716.2 1045.2,701.5 1048.6,698.6" fill="rgb(0,220,239)" stroke="#000" stroke-width="1" stroke-linejoin="round"/><polygon points="1025.7,763.6 1018.9,765.6 1019.7,756.3 1026.5,754.5" fill="rgb(0,99,239)" stroke="#000" stroke-width="1" stroke-linejoin="round"/><polygon points="1034.1,742.6 1030.7,742.6 1032.2,732.4 1035.6,732.2" fill="rgb(0,154,239)" stroke="#000" stroke-width="1" stroke-linejoin="round"/><polygon points="1042.4,731.4 1039.0,732.0 1040.5,718.4 1043.9,716.2" fill="rgb(0,186,239)" stroke="#000" stroke-width="1" stroke-linejoin="round"/><polygon points="1058.8,695.9 1052.0,696.8 1053.5,687.8 1060.3,687.8" fill="rgb(0,239,230)" stroke="#000" stroke-width="1" stroke-linejoin="round"/><polygon points="1050.7,713.6 1047.3,714.4 1048.6,698.6 1052.0,696.8" fill="rgb(0,224,239)" stroke="#000" stroke-width="1" stroke-linejoin="round"/><polygon points="1029.9,754.1 1026.5,754.5 1027.3,743.2 1030.7,742.6" fill="rgb(0,127,239)" stroke="#000" stroke-width="1" stroke-linejoin="round"/><polygon points="1025.3,768.2 1018.6,770.1 1018.9,765.6 1025.7,763.6" fill="rgb(0,83,239)" stroke="#000" stroke-width="1" stroke-linejoin="round"/><polygon points="1037.5,743.1 1034.1,742.6 1035.6,732.2 1039.0,732.0" fill="rgb(0,155,239)" stroke="#000" stroke-width="1" stroke-linejoin="round"/><polygon points="1025.0,773.3 1018.2,774.5 1018.6,770.1 1025.3,768.2" fill="rgb(0,72,239)" stroke="#000" stroke-width="1" stroke-linejoin="round"/><polygon points="1045.8,731.6 1042.4,731.4 1043.9,716.2 1047.3,714.4" fill="rgb(0,190,239)" stroke="#000" stroke-width="1" stroke-linejoin="round"/><polygon points="1024.9,773.4 1018.1,774.6 1018.2,774.5 1025.0,773.3" fill="rgb(0,66,239)" stroke="#000" stroke-width="1" stroke-linejoin="round"/><polygon points="1029.1,763.2 1025.7,763.6 1026.5,754.5 1029.9,754.1" fill="rgb(0,104,239)" stroke="#000" stroke-width="1" stroke-linejoin="round"/><polygon points="1033.3,753.7 1029.9,754.1 1030.7,742.6 1034.1,742.6" fill="rgb(0,130,239)" stroke="#000" stroke-width="1" stroke-linejoin="round"/><polygon points="1057.5,713.3 1050.7,713.6 1052.0,696.8 1058.8,695.9" fill="rgb(0,228,239)" stroke="#000" stroke-width="1" stroke-linejoin="round"/><polygon points="1040.9,743.3 1037.5,743.1 1039.0,732.0 1042.4,731.4" fill="rgb(0,157,239)" stroke="#000" stroke-width="1" stroke-linejoin="round"/><polygon points="1028.7,768.1 1025.3,768.2 1025.7,763.6 1029.1,763.2" fill="rgb(0,87,239)" stroke="#000" stroke-width="1" stroke-linejoin="round"/><polygon points="1049.2,731.0 1045.8,731.6 1047.3,714.4 1050.7,713.6" fill="rgb(0,194,239)" stroke="#000" stroke-width="1" stroke-linejoin="round"/><polygon points="1032.5,763.1 1029.1,763.2 1029.9,754.1 1033.3,753.7" fill="rgb(0,106,239)" stroke="#000" stroke-width="1" stroke-linejoin="round"/><polygon points="1036.6,753.6 1033.3,753.7 1034.1,742.6 1037.5,743.1" fill="rgb(0,131,239)" stroke="#000" stroke-width="1" stroke-linejoin="round"/><polygon points="1028.4,772.8 1025.0,773.3 1025.3,768.2 1028.7,768.1" fill="rgb(0,76,239)" stroke="#000" stroke-width="1" stroke-linejoin="round"/><polygon points="1028.2,772.8 1024.9,773.4 1025.0,773.3 1028.4,772.8" fill="rgb(0,70,239)" stroke="#000" stroke-width="1" stroke-linejoin="round"/><polygon points="1044.3,743.8 1040.9,743.3 1042.4,731.4 1045.8,731.6" fill="rgb(0,158,239)" stroke="#000" stroke-width="1" stroke-linejoin="round"/><polygon points="1032.1,768.1 1028.7,768.1 1029.1,763.2 1032.5,763.1" fill="rgb(0,89,239)" stroke="#000" stroke-width="1" stroke-linejoin="round"/><polygon points="1035.9,763.1 1032.5,763.1 1033.3,753.7 1036.6,753.6" fill="rgb(0,108,239)" stroke="#000" stroke-width="1" stroke-linejoin="round"/><polygon points="1040.0,753.9 1036.6,753.6 1037.5,743.1 1040.9,743.3" fill="rgb(0,132,239)" stroke="#000" stroke-width="1" stroke-linejoin="round"/><polygon points="1031.8,772.8 1028.4,772.8 1028.7,768.1 1032.1,768.1" fill="rgb(0,78,239)" stroke="#000" stroke-width="1" stroke-linejoin="round"/><polygon points="1056.0,731.4 1049.2,731.0 1050.7,713.6 1057.5,713.3" fill="rgb(0,197,239)" stroke="#000" stroke-width="1" stroke-linejoin="round"/><polygon points="1031.6,772.8 1028.2,772.8 1028.4,772.8 1031.8,772.8" fill="rgb(0,73,239)" stroke="#000" stroke-width="1" stroke-linejoin="round"/><polygon points="1047.7,744.1 1044.3,743.8 1045.8,731.6 1049.2,731.0" fill="rgb(0,159,239)" stroke="#000" stroke-width="1" stroke-linejoin="round"/><polygon points="1035.5,768.3 1032.1,768.1 1032.5,763.1 1035.9,763.1" fill="rgb(0,91,239)" stroke="#000" stroke-width="1" stroke-linejoin="round"/><polygon points="1039.3,763.1 1035.9,763.1 1036.6,753.6 1040.0,753.9" fill="rgb(0,109,239)" stroke="#000" stroke-width="1" stroke-linejoin="round"/><polygon points="1043.4,754.4 1040.0,753.9 1040.9,743.3 1044.3,743.8" fill="rgb(0,132,239)" stroke="#000" stroke-width="1" stroke-linejoin="round"/><polygon points="1035.2,772.7 1031.8,772.8 1032.1,768.1 1035.5,768.3" fill="rgb(0,79,239)" stroke="#000" stroke-width="1" stroke-linejoin="round"/><polygon points="1035.0,772.8 1031.6,772.8 1031.8,772.8 1035.2,772.7" fill="rgb(0,74,239)" stroke="#000" stroke-width="1" stroke-linejoin="round"/><polygon points="1038.9,768.1 1035.5,768.3 1035.9,763.1 1039.3,763.1" fill="rgb(0,92,239)" stroke="#000" stroke-width="1" stroke-linejoin="round"/><polygon points="1042.7,763.3 1039.3,763.1 1040.0,753.9 1043.4,754.4" fill="rgb(0,110,239)" stroke="#000" stroke-width="1" stroke-linejoin="round"/><polygon points="1046.8,754.7 1043.4,754.4 1044.3,743.8 1047.7,744.1" fill="rgb(0,133,239)" stroke="#000" stroke-width="1" stroke-linejoin="round"/><polygon points="1054.5,745.0 1047.7,744.1 1049.2,731.0 1056.0,731.4" fill="rgb(0,161,239)" stroke="#000" stroke-width="1" stroke-linejoin="round"/><polygon points="1038.6,772.7 1035.2,772.7 1035.5,768.3 1038.9,768.1" fill="rgb(0,81,239)" stroke="#000" stroke-width="1" stroke-linejoin="round"/><polygon points="1038.4,772.6 1035.0,772.8 1035.2,772.7 1038.6,772.7" fill="rgb(0,76,239)" stroke="#000" stroke-width="1" stroke-linejoin="round"/><polygon points="1042.3,767.8 1038.9,768.1 1039.3,763.1 1042.7,763.3" fill="rgb(0,94,239)" stroke="#000" stroke-width="1" stroke-linejoin="round"/><polygon points="1046.1,763.6 1042.7,763.3 1043.4,754.4 1046.8,754.7" fill="rgb(0,110,239)" stroke="#000" stroke-width="1" stroke-linejoin="round"/><polygon points="1041.9,772.6 1038.6,772.7 1038.9,768.1 1042.3,767.8" fill="rgb(0,83,239)" stroke="#000" stroke-width="1" stroke-linejoin="round"/><polygon points="1041.8,772.4 1038.4,772.6 1038.6,772.7 1041.9,772.6" fill="rgb(0,77,239)" stroke="#000" stroke-width="1" stroke-linejoin="round"/><polygon points="1053.6,755.4 1046.8,754.7 1047.7,744.1 1054.5,745.0" fill="rgb(0,134,239)" stroke="#000" stroke-width="1" stroke-linejoin="round"/><polygon points="1045.7,767.9 1042.3,767.8 1042.7,763.3 1046.1,763.6" fill="rgb(0,95,239)" stroke="#000" stroke-width="1" stroke-linejoin="round"/><polygon points="1045.3,772.4 1041.9,772.6 1042.3,767.8 1045.7,767.9" fill="rgb(0,84,239)" stroke="#000" stroke-width="1" stroke-linejoin="round"/><polygon points="1045.2,772.3 1041.8,772.4 1041.9,772.6 1045.3,772.4" fill="rgb(0,79,239)" stroke="#000" stroke-width="1" stroke-linejoin="round"/><polygon points="1052.9,764.1 1046.1,763.6 1046.8,754.7 1053.6,755.4" fill="rgb(0,111,239)" stroke="#000" stroke-width="1" stroke-linejoin="round"/><polygon points="1052.5,767.8 1045.7,767.9 1046.1,763.6 1052.9,764.1" fill="rgb(0,96,239)" stroke="#000" stroke-width="1" stroke-linejoin="round"/><polygon points="1052.1,771.9 1045.3,772.4 1045.7,767.9 1052.5,767.8" fill="rgb(0,87,239)" stroke="#000" stroke-width="1" stroke-linejoin="round"/><polygon points="1052.0,772.0 1045.2,772.3 1045.3,772.4 1052.1,771.9" fill="rgb(0,82,239)" stroke="#000" stroke-width="1" stroke-linejoin="round"/><text x="794.0" y="712.0" font-size="9" fill="#0000ff" text-anchor="end">2228.20</text><text x="1180.0" y="668.3" font-size="9" fill="#0000ff">2228.20</text><text x="794.0" y="659.0" font-size="9" fill="#0000ff" text-anchor="end">3969.40</text><text x="1180.0" y="615.3" font-size="9" fill="#0000ff">3969.40</text><text x="794.0" y="606.0" font-size="9" fill="#0000ff" text-anchor="end">5710.60</text><text x="1180.0" y="562.3" font-size="9" fill="#0000ff">5710.60</text><text x="794.0" y="553.0" font-size="9" fill="#0000ff" text-anchor="end">7451.80</text><text x="1180.0" y="509.3" font-size="9" fill="#0000ff">7451.80</text><text x="794.0" y="500.0" font-size="9" fill="#0000ff" text-anchor="end">9193.00</text><text x="1180.0" y="456.3" font-size="9" fill="#0000ff">9193.00</text><text x="793.0" y="766.0" font-size="9" fill="#ff0000" text-anchor="end">8300</text><text x="820.1" y="770.6" font-size="9" fill="#ff0000" text-anchor="end">7500</text><text x="845.6" y="774.9" font-size="9" fill="#ff0000" text-anchor="end">6750</text><text x="871.0" y="779.2" font-size="9" fill="#ff0000" text-anchor="end">6000</text><text x="896.5" y="783.5" font-size="9" fill="#ff0000" text-anchor="end">5250</text><text x="921.9" y="787.8" font-size="9" fill="#ff0000" text-anchor="end">4500</text><text x="947.4" y="792.1" font-size="9" fill="#ff0000" text-anchor="end">3750</text><text x="972.8" y="796.4" font-size="9" fill="#ff0000" text-anchor="end">3000</text><text x="998.3" y="800.7" font-size="9" fill="#ff0000" text-anchor="end">2250</text><text x="1027.1" y="805.6" font-size="9" fill="#ff0000" text-anchor="end">1400</text><text x="1047.5" y="809.0" font-size="9" fill="#ff0000" text-anchor="end">800</text><text x="1054.0" y="809.5" font-size="9" fill="#000">0.0</text><text x="1070.5" y="797.9" font-size="9" fill="#000">13.3</text><text x="1089.1" y="784.8" font-size="9" fill="#000">28.3</text><text x="1111.2" y="769.3" font-size="9" fill="#000">46.2</text><text x="1140.8" y="748.4" font-size="9" fill="#000">70.1</text><text x="1165.5" y="731.1" font-size="9" fill="#000">90.0</text></svg></div><svg class="a" style="left:0;top:0;mix-blend-mode:multiply" width="1715" height="912"><path d="M527.0,279.0 C527.2,272.8 528.5,253.5 528.0,242.0 C527.5,230.5 527.0,219.7 524.0,210.0 C521.0,200.3 516.8,191.7 510.0,184.0 C503.2,176.3 492.7,169.7 483.0,164.0 C473.3,158.3 463.0,153.2 452.0,150.0 C441.0,146.8 428.3,145.3 417.0,145.0 C405.7,144.7 394.0,146.0 384.0,148.0 C374.0,150.0 365.8,152.2 357.0,157.0 C348.2,161.8 338.0,170.0 331.0,177.0 C324.0,184.0 317.7,195.3 315.0,199.0 L339,190 L361,225 L383,209 L398,245" fill="none" stroke="#b0b0b0" stroke-width="8.5" stroke-linejoin="miter" stroke-miterlimit="3"/><path d="M308,280 C303,260 303,235 309,216 L334,209 L357,246 L380,228 L396,253" fill="none" stroke="#b0b0b0" stroke-width="8.5" stroke-linejoin="miter" stroke-miterlimit="3"/><path d="M402,243.5 L394,246.5 L407,271z M399.6,250.7 L392.4,255.3 L407,271z" fill="#b0b0b0"/><path d="M327,289 Q372,282 404,309 Q378,333 350,325 Q329,314 327,289Z" fill="#b0b0b0"/><path d="M511,289 Q466,282 434,309 Q460,333 488,325 Q509,314 511,289Z" fill="#b0b0b0"/><path d="M418.0,324.0 L438.0,361.0 L426.0,385.0 L418.0,360.0 L409.0,385.0 L396.0,361.0 Z" fill="#b0b0b0"/><path d="M373.0,395.0 L384.0,405.0 L388.0,400.0 L397.0,410.0 L402.0,405.0 L410.0,412.0 L418.0,409.0 L426.0,410.0 L431.0,406.0 L437.0,404.0 L448.0,399.0 L461.0,396.0 L462.0,402.0 L452.0,410.0 L446.0,407.0 L437.0,420.0 L432.0,414.0 L429.0,430.0 L423.0,419.0 L418.0,422.0 L406.0,431.0 L403.0,420.0 L396.0,423.0 L388.0,412.0 L384.0,416.0 Z" fill="#b0b0b0"/><g transform="translate(296.8,402.2) rotate(33)"><path d="M-22,-40 L38,-40 L38,-31 L26,-22 L26,22 L38,31 L38,40 L-22,40 Z M10.7,0 A10.7,10.7 0 1 0 -10.7,0 A10.7,10.7 0 1 0 10.7,0 Z" fill="#b0b0b0" fill-rule="evenodd"/><path d="M-42,-43 Q-50,0 -42,42 L-28,42 Q-35,0 -28,-43 Z" fill="#b0b0b0"/><rect x="30" y="-10" width="148" height="20" fill="#b0b0b0"/><path d="M234.5,0 A30,30 0 1 0 174.5,0 A30,30 0 1 0 234.5,0 Z M216.8,0 A12.3,12.3 0 1 0 192.2,0 A12.3,12.3 0 1 0 216.8,0 Z" fill="#b0b0b0" fill-rule="evenodd"/></g><g transform="translate(541.2,402.2) scale(-1,1) rotate(33)"><path d="M-22,-40 L38,-40 L38,-31 L26,-22 L26,22 L38,31 L38,40 L-22,40 Z M10.7,0 A10.7,10.7 0 1 0 -10.7,0 A10.7,10.7 0 1 0 10.7,0 Z" fill="#b0b0b0" fill-rule="evenodd"/><path d="M-42,-43 Q-50,0 -42,42 L-28,42 Q-35,0 -28,-43 Z" fill="#b0b0b0"/><rect x="30" y="-10" width="148" height="20" fill="#b0b0b0"/><path d="M234.5,0 A30,30 0 1 0 174.5,0 A30,30 0 1 0 234.5,0 Z M216.8,0 A12.3,12.3 0 1 0 192.2,0 A12.3,12.3 0 1 0 216.8,0 Z" fill="#b0b0b0" fill-rule="evenodd"/></g><path d="M265.5,464.0 L271.1,479.3 L287.4,479.9 L274.5,489.9 L279.0,505.6 L265.5,496.5 L252.0,505.6 L256.5,489.9 L243.6,479.9 L259.9,479.3 Z" fill="#b0b0b0"/><path d="M572.5,464.0 L578.1,479.3 L594.4,479.9 L581.5,489.9 L586.0,505.6 L572.5,496.5 L559.0,505.6 L563.5,489.9 L550.6,479.9 L566.9,479.3 Z" fill="#b0b0b0"/><path d="M109,547 L148,549 Q155,549 155,556 L155,671 Q155,678 148,678 L109,678 Q102,678 102,671 L102,554 Q102,547 109,547 Z M121.3,565 L138.6,565.5 L138.6,662.5 L121.3,662.5 Z" fill="#b0b0b0" fill-rule="evenodd"/><path d="M186.3,559.4 L205.2,563.2 L205.2,663.4 L235.6,660.5 L233.5,678.3 L186.3,678.3 Z" fill="#b0b0b0" fill-rule="evenodd"/><path d="M262.1,574.2 L311.3,580 L317.7,586.4 L317.7,671.1 L312,678.3 L262.8,678.3 L265,671 L264.2,582.8 Z M282.8,590.6 L299.9,591.3 L299.9,665.4 L282.8,665.4 Z" fill="#b0b0b0" fill-rule="evenodd"/><path d="M349.7,588.0 L354.7,582.8 L398.2,584.2 L403.2,588.5 L403.9,607.0 L405.3,610.6 L382.5,609.9 L384.0,596.3 L368.3,596.3 L368.3,608.4 L403.2,642.6 L403.2,674.0 L398.2,678.3 L355.4,678.3 L350.5,674.0 L349.7,652.6 L348.3,651.2 L370.4,651.2 L368.3,655.5 L368.3,666.2 L385.4,666.2 L385.4,648.3 L350.5,617.0 Z" fill="#b0b0b0" fill-rule="evenodd"/><path d="M436.0,584.2 L453.5,584.2 L453.5,604.0 L456.0,584.2 L468.0,584.2 L461.0,605.0 L489.0,630.0 L491.0,678.3 L472.7,678.3 L472.0,640.0 L453.5,624.0 L453.5,678.3 L434.3,678.3 L436.0,671.0 Z" fill="#b0b0b0" fill-rule="evenodd"/><path d="M522.0,581.4 L541.1,579.7 L541.1,665.4 L556.8,665.4 L556.8,578.1 L580.0,574.3 L578.2,670.0 L570.0,678.3 L524.7,678.3 L523.3,672.0 Z" fill="#b0b0b0" fill-rule="evenodd"/><path d="M607.0,571.5 L631.0,567.6 L631.0,663.0 L658.0,660.0 L655.0,678.3 L607.0,678.3 Z" fill="#b0b0b0" fill-rule="evenodd"/><path d="M684.0,557.3 L708.0,551.8 L708.0,661.0 L735.0,658.0 L732.0,678.3 L684.0,678.3 Z" fill="#b0b0b0" fill-rule="evenodd"/><text x="209.5" y="753" font-family="Liberation Sans" font-weight="bold" font-size="51" text-anchor="middle" fill="#b0b0b0" stroke="#b0b0b0" stroke-width="2.5">T</text><text x="294.4" y="753" font-family="Liberation Sans" font-weight="bold" font-size="51" text-anchor="middle" fill="#b0b0b0" stroke="#b0b0b0" stroke-width="2.5">U</text><text x="383.6" y="753" font-family="Liberation Sans" font-weight="bold" font-size="51" text-anchor="middle" fill="#b0b0b0" stroke="#b0b0b0" stroke-width="2.5">N</text><text x="461.8" y="753" font-family="Liberation Sans" font-weight="bold" font-size="51" text-anchor="middle" fill="#b0b0b0" stroke="#b0b0b0" stroke-width="2.5">I</text><text x="537.0" y="753" font-family="Liberation Sans" font-weight="bold" font-size="51" text-anchor="middle" fill="#b0b0b0" stroke="#b0b0b0" stroke-width="2.5">N</text><text x="627.5" y="753" font-family="Liberation Sans" font-weight="bold" font-size="51" text-anchor="middle" fill="#b0b0b0" stroke="#b0b0b0" stroke-width="2.5">G</text></svg></body></html>
